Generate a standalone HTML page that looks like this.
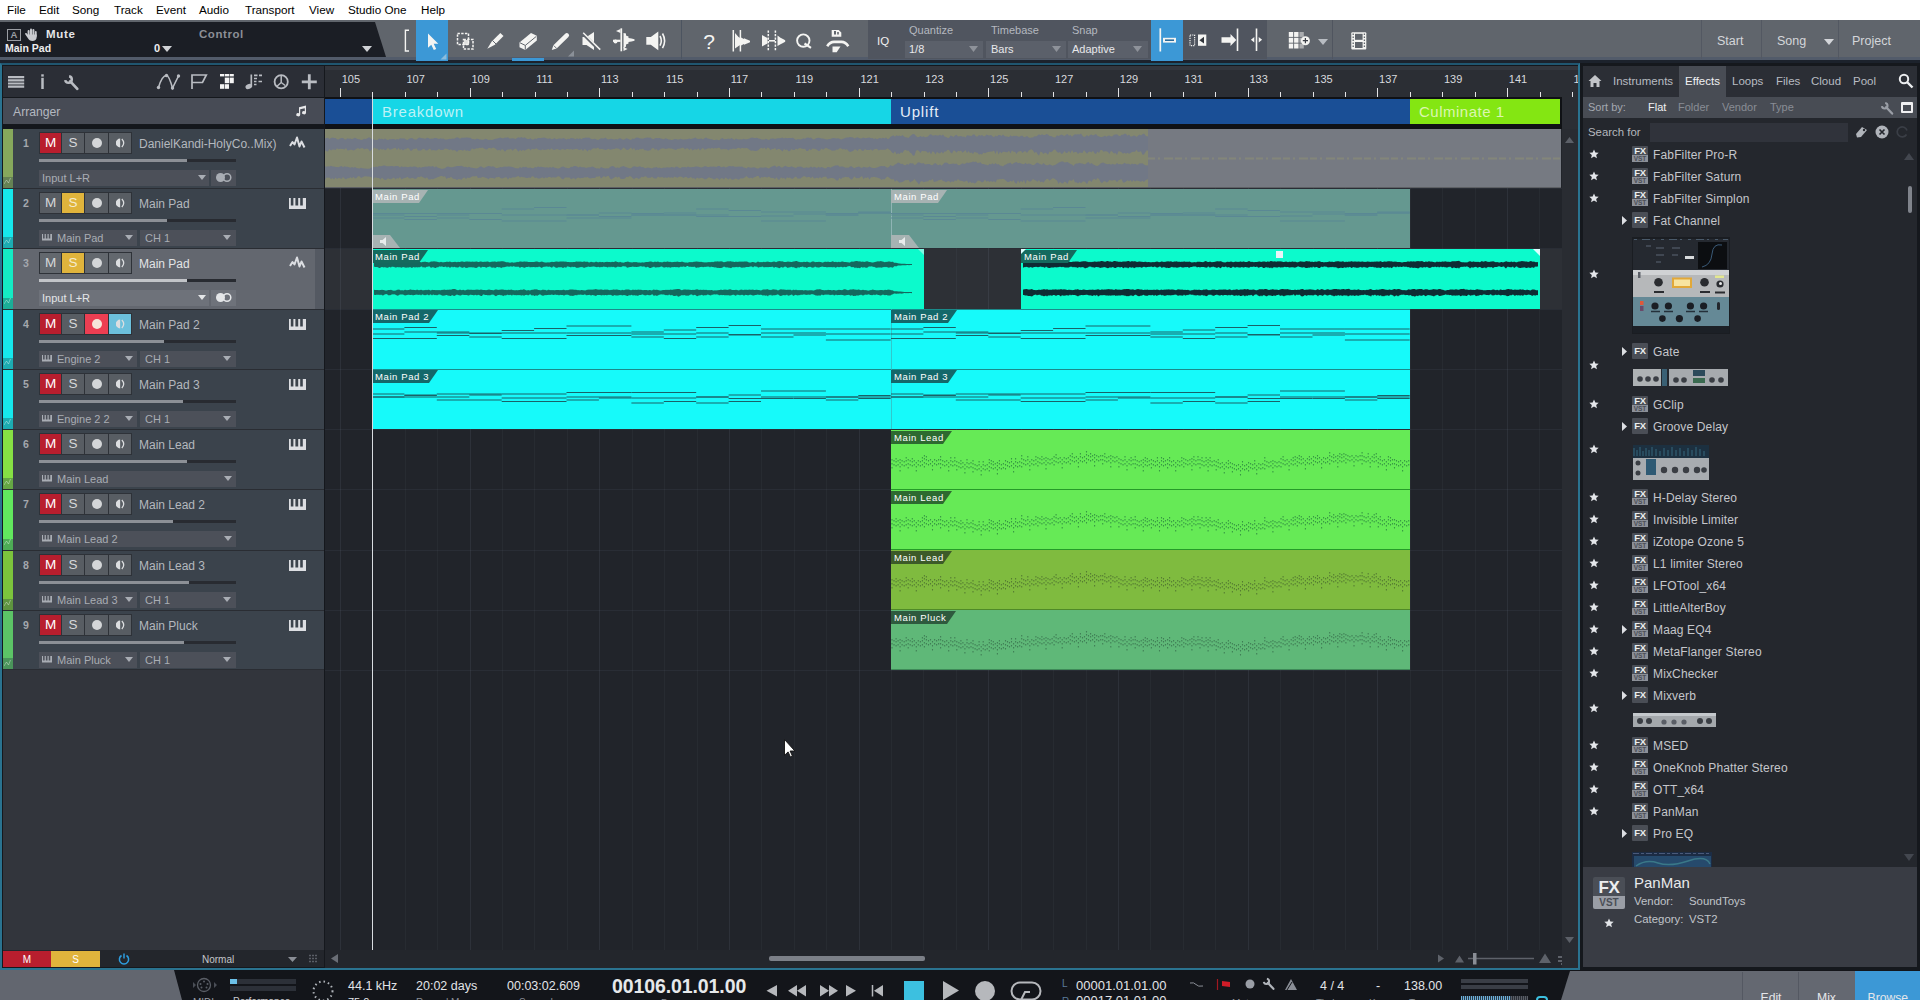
<!DOCTYPE html><html><head><meta charset="utf-8"><title>Studio One</title><style>
*{box-sizing:border-box;margin:0;padding:0}
html,body{width:1920px;height:1000px;overflow:hidden;background:#15181d;font-family:"Liberation Sans",sans-serif;color:#d0d2d6;font-size:12px}
.a{position:absolute}
.t{position:absolute;white-space:nowrap;line-height:1}
#menu{left:0;top:0;width:1920px;height:20px;background:#fff}
#menu span{position:absolute;top:2.5px;color:#000;font-size:11.7px;white-space:nowrap}
#tb{left:0;top:20px;width:1920px;height:40px;background:#60656c}
.trk{position:absolute;left:3px;width:321px;height:59px;background:#3b434c}
.trk.sel{background:#63676f}
.dd{position:absolute;height:16px;background:#4c5059;color:#a9adb4;font-size:11px;line-height:16px;white-space:nowrap;overflow:hidden}
</style></head><body>
<div class="a" style="left:0;top:63px;width:1580px;height:907px;background:#15181d;border:2px solid #2a7390;border-top-color:#205670"></div>
<div class="a" style="left:3px;top:66px;width:321px;height:31px;background:#2b2e36"></div>
<div class="a" style="left:3px;top:98px;width:321px;height:26px;background:#474b55"></div>
<div class="t" style="left:13px;top:106px;font-size:12.200px;color:#b4b8c0">Arranger</div>
<svg class="a" style="left:295px;top:105px" width="13" height="12" viewBox="0 0 13 12"><path d="M4 2.200l7-1.700v7.300a2 1.600 0 1 1-1.200-1.500V3.200L5.200 4.300v5.500A2 1.600 0 1 1 4 8.300z" fill="#e8e8ea"/></svg>
<svg class="a" style="left:0;top:60px" width="330" height="40" viewBox="0 60 330 40"><path d="M8 77.200h16.200M8 80.400h16.200M8 83.500h16.200M8 86.600h16.200" stroke="#b9bcc2" stroke-width="2.200"/><path d="M42.500 77.800v11.200" stroke="#b9bcc2" stroke-width="2.500"/><rect x="41.250" y="74.300" width="2.500" height="2.300" fill="#b9bcc2"/><g transform="translate(63 74) scale(1.0)" fill="none" stroke="#b9bcc2" stroke-linecap="round"><path d="M6.100 2.300A3.300 3.300 0 1 1 2.250 6.100" stroke-width="2.500" stroke-linecap="butt"/><path d="M7.300 7.300L14.300 14.800" stroke-width="2.700"/></g><path d="M158.500 87.500q3.500-12 8-12 2.500 0 6 12.500l6-12" fill="none" stroke="#b9bcc2" stroke-width="1.600"/><circle cx="158.500" cy="87.500" r="1.700" fill="#b9bcc2"/><circle cx="172.500" cy="88" r="1.700" fill="#b9bcc2"/><circle cx="178.500" cy="76" r="1.700" fill="#b9bcc2"/><circle cx="166.500" cy="75.500" r="1.700" fill="#b9bcc2"/><path d="M192 89V75h14.300l-3.800 7.500H192" fill="none" stroke="#b9bcc2" stroke-width="1.700"/><rect x="220" y="74" width="4.200" height="2.4" fill="#f4f4f4"/><rect x="224.8" y="74" width="4.200" height="2.4" fill="#f4f4f4"/><rect x="229.6" y="74" width="4.200" height="2.4" fill="#f4f4f4"/><rect x="224.8" y="77.6" width="4.200" height="5.6" fill="#f4f4f4"/><rect x="229.6" y="77.6" width="4.200" height="5.6" fill="#f4f4f4"/><rect x="220" y="84.2" width="4.200" height="4.6" fill="#f4f4f4"/><rect x="224.8" y="84.2" width="4.200" height="4.6" fill="#f4f4f4"/><path d="M251.300 74.500v12" stroke="#b9bcc2" stroke-width="1.700"/><ellipse cx="248.800" cy="86.500" rx="3.400" ry="2.500" fill="#b9bcc2" transform="rotate(-20 248.800 86.500)"/><path d="M254 75.300h3.500M259 75.300h3M254 78.500h3M254 81.500h2.500M258.500 81.500h3.500M254 84.500h2.500" stroke="#b9bcc2" stroke-width="1.700"/><circle cx="281.200" cy="81.800" r="6.600" fill="none" stroke="#b9bcc2" stroke-width="1.800"/><path d="M281.200 75.500v7l-4.500 4M281.200 82.500l4 3" fill="none" stroke="#b9bcc2" stroke-width="1.500"/><path d="M301.800 81.800h15M309.300 74.300v15" stroke="#b9bcc2" stroke-width="2.800"/></svg>
<div class="a" style="left:3px;top:670px;width:321px;height:280px;background:#32353c"></div>
<div class="a" style="left:3px;top:125px;width:321px;height:5px;background:#14171c"></div>
<div class="trk" style="top:129px;height:59px"></div>
<div class="a" style="left:3px;top:129px;width:10px;height:59px;background:#86a85c"></div>
<div class="a" style="left:3px;top:177px;width:10px;height:11px;background:rgba(40,60,70,.35)"></div>
<svg class="a" style="left:4px;top:178px" width="8" height="8"><path d="M0 6l2.500-4 2 3 2-5" fill="none" stroke="rgba(255,255,255,.35)" stroke-width="1"/></svg>
<div class="t" style="left:21px;top:138px;font-size:10.500px;font-weight:bold;color:#a4a8ae;width:10px;text-align:center">1</div>
<div class="a" style="left:39px;top:132px;width:23px;height:22px;background:#b81e2e;border:1px solid #2e3238;border-left-width:1px;color:#fff;font-size:13.500px;text-align:center;line-height:20px">M</div>
<div class="a" style="left:62px;top:132px;width:23px;height:22px;background:#585d63;border:1px solid #2e3238;border-left-width:0px;color:#d6d8da;font-size:13.500px;text-align:center;line-height:20px">S</div>
<div class="a" style="left:85px;top:132px;width:24px;height:22px;background:#585d63;border:1px solid #2e3238;border-left-width:0px;color:#d6d8da;font-size:13.500px;text-align:center;line-height:20px"></div>
<div class="a" style="left:109px;top:132px;width:23px;height:22px;background:#585d63;border:1px solid #2e3238;border-left-width:0px;color:#d6d8da;font-size:13.500px;text-align:center;line-height:20px"></div>
<div class="a" style="left:92px;top:138px;width:10px;height:10px;border-radius:5px;background:#d4d6d8"></div>
<svg class="a" style="left:116px;top:138px" width="10" height="10" viewBox="0 0 12 12"><path d="M5 .700A5.300 5.300 0 0 0 5 11.300z" fill="#dcdee0"/><path d="M7 1.200q4.500 4.800 0 9.600" fill="none" stroke="#dcdee0" stroke-width="1.500"/></svg>
<div class="t" style="left:139px;top:138px;font-size:12px;color:#b4b8be">DanielKandi-HolyCo..Mix)</div>
<svg class="a" style="left:289px;top:136px" width="17" height="15" viewBox="0 0 17 15"><path d="M1 10l2.500-4 2 2.500L8 1.500l2.500 9 2-5 3 6" fill="none" stroke="#dcdee2" stroke-width="2" stroke-linejoin="round"/></svg>
<div class="a" style="left:39px;top:159px;width:197px;height:3px;background:#282b31"></div>
<div class="a" style="left:39px;top:159px;width:148px;height:3px;background:#8c9096"></div>
<div class="dd" style="left:39px;top:170px;width:170px;background:#4c5059;color:#a9adb4;padding-left:3px">Input L+R</div>
<svg class="a" style="left:198px;top:175px" width="8" height="5"><path d="M0 0h8L4 5z" fill="#a9adb4"/></svg>
<div class="dd" style="left:211px;top:170px;width:25px;background:#4c5059"></div>
<svg class="a" style="left:215px;top:172px" width="18" height="11" viewBox="0 0 18 11"><circle cx="5.500" cy="5.500" r="4.500" fill="#a9adb4"/><circle cx="12" cy="5.500" r="3.800" fill="none" stroke="#a9adb4" stroke-width="1.500"/></svg>
<div class="a" style="left:3px;top:188px;width:321px;height:1px;background:#2a2d33"></div>
<div class="trk" style="top:189px;height:59px"></div>
<div class="a" style="left:3px;top:189px;width:10px;height:59px;background:#16e8ec"></div>
<div class="a" style="left:3px;top:237px;width:10px;height:11px;background:rgba(40,60,70,.35)"></div>
<svg class="a" style="left:4px;top:238px" width="8" height="8"><path d="M0 6l2.500-4 2 3 2-5" fill="none" stroke="rgba(255,255,255,.35)" stroke-width="1"/></svg>
<div class="t" style="left:21px;top:198px;font-size:10.500px;font-weight:bold;color:#a4a8ae;width:10px;text-align:center">2</div>
<div class="a" style="left:39px;top:192px;width:23px;height:22px;background:#585d63;border:1px solid #2e3238;border-left-width:1px;color:#d6d8da;font-size:13.500px;text-align:center;line-height:20px">M</div>
<div class="a" style="left:62px;top:192px;width:23px;height:22px;background:#e0b43c;border:1px solid #2e3238;border-left-width:0px;color:#f4ecd0;font-size:13.500px;text-align:center;line-height:20px">S</div>
<div class="a" style="left:85px;top:192px;width:24px;height:22px;background:#585d63;border:1px solid #2e3238;border-left-width:0px;color:#d6d8da;font-size:13.500px;text-align:center;line-height:20px"></div>
<div class="a" style="left:109px;top:192px;width:23px;height:22px;background:#585d63;border:1px solid #2e3238;border-left-width:0px;color:#d6d8da;font-size:13.500px;text-align:center;line-height:20px"></div>
<div class="a" style="left:92px;top:198px;width:10px;height:10px;border-radius:5px;background:#d4d6d8"></div>
<svg class="a" style="left:116px;top:198px" width="10" height="10" viewBox="0 0 12 12"><path d="M5 .700A5.300 5.300 0 0 0 5 11.300z" fill="#dcdee0"/><path d="M7 1.200q4.500 4.800 0 9.600" fill="none" stroke="#dcdee0" stroke-width="1.500"/></svg>
<div class="t" style="left:139px;top:198px;font-size:12px;color:#b4b8be">Main Pad</div>
<svg class="a" style="left:289px;top:198px" width="17.0" height="11.0" viewBox="0 0 17 11"><path d="M0 0h1.800v7.500h2.600V0h2v7.500h2.800V0h2v7.500h2.600V0H17v11H0z" fill="#dcdee2"/></svg>
<div class="a" style="left:39px;top:219px;width:197px;height:3px;background:#282b31"></div>
<div class="a" style="left:39px;top:219px;width:128px;height:3px;background:#8c9096"></div>
<div class="dd" style="left:39px;top:230px;width:98px;padding-left:18px">Main Pad</div>
<svg class="a" style="left:42px;top:234px" width="10.2" height="6.6" viewBox="0 0 17 11"><path d="M0 0h1.800v7.500h2.600V0h2v7.500h2.800V0h2v7.500h2.600V0H17v11H0z" fill="#a9adb4"/></svg>
<svg class="a" style="left:125px;top:235px" width="8" height="5"><path d="M0 0h8L4 5z" fill="#a9adb4"/></svg>
<div class="dd" style="left:140px;top:230px;width:96px;padding-left:5px">CH 1</div>
<svg class="a" style="left:223px;top:235px" width="8" height="5"><path d="M0 0h8L4 5z" fill="#a9adb4"/></svg>
<div class="a" style="left:3px;top:248px;width:321px;height:1px;background:#2a2d33"></div>
<div class="trk sel" style="top:249px;height:60px"></div>
<div class="a" style="left:315px;top:249px;width:9px;height:60px;background:#545962"></div>
<div class="a" style="left:3px;top:249px;width:10px;height:60px;background:#14ecc4"></div>
<div class="a" style="left:3px;top:298px;width:10px;height:11px;background:rgba(40,60,70,.35)"></div>
<svg class="a" style="left:4px;top:298px" width="8" height="8"><path d="M0 6l2.500-4 2 3 2-5" fill="none" stroke="rgba(255,255,255,.35)" stroke-width="1"/></svg>
<div class="t" style="left:21px;top:258px;font-size:10.500px;font-weight:bold;color:#a4a8ae;width:10px;text-align:center">3</div>
<div class="a" style="left:39px;top:252px;width:23px;height:22px;background:#63686e;border:1px solid #2e3238;border-left-width:1px;color:#d6d8da;font-size:13.500px;text-align:center;line-height:20px">M</div>
<div class="a" style="left:62px;top:252px;width:23px;height:22px;background:#e0b43c;border:1px solid #2e3238;border-left-width:0px;color:#f4ecd0;font-size:13.500px;text-align:center;line-height:20px">S</div>
<div class="a" style="left:85px;top:252px;width:24px;height:22px;background:#63686e;border:1px solid #2e3238;border-left-width:0px;color:#d6d8da;font-size:13.500px;text-align:center;line-height:20px"></div>
<div class="a" style="left:109px;top:252px;width:23px;height:22px;background:#63686e;border:1px solid #2e3238;border-left-width:0px;color:#d6d8da;font-size:13.500px;text-align:center;line-height:20px"></div>
<div class="a" style="left:92px;top:258px;width:10px;height:10px;border-radius:5px;background:#d4d6d8"></div>
<svg class="a" style="left:116px;top:258px" width="10" height="10" viewBox="0 0 12 12"><path d="M5 .700A5.300 5.300 0 0 0 5 11.300z" fill="#dcdee0"/><path d="M7 1.200q4.500 4.800 0 9.600" fill="none" stroke="#dcdee0" stroke-width="1.500"/></svg>
<div class="t" style="left:139px;top:258px;font-size:12px;color:#e2e4e6">Main Pad</div>
<svg class="a" style="left:289px;top:256px" width="17" height="15" viewBox="0 0 17 15"><path d="M1 10l2.500-4 2 2.500L8 1.500l2.500 9 2-5 3 6" fill="none" stroke="#dcdee2" stroke-width="2" stroke-linejoin="round"/></svg>
<div class="a" style="left:39px;top:279px;width:197px;height:3px;background:#282b31"></div>
<div class="a" style="left:39px;top:279px;width:148px;height:3px;background:#c2c4c8"></div>
<div class="dd" style="left:39px;top:290px;width:170px;background:#6e727a;color:#e4e6e8;padding-left:3px">Input L+R</div>
<svg class="a" style="left:198px;top:295px" width="8" height="5"><path d="M0 0h8L4 5z" fill="#e4e6e8"/></svg>
<div class="dd" style="left:211px;top:290px;width:25px;background:#6e727a"></div>
<svg class="a" style="left:215px;top:292px" width="18" height="11" viewBox="0 0 18 11"><circle cx="5.500" cy="5.500" r="4.500" fill="#e4e6e8"/><circle cx="12" cy="5.500" r="3.800" fill="none" stroke="#e4e6e8" stroke-width="1.500"/></svg>
<div class="a" style="left:3px;top:309px;width:321px;height:1px;background:#2a2d33"></div>
<div class="trk" style="top:310px;height:59px"></div>
<div class="a" style="left:3px;top:310px;width:10px;height:59px;background:#16e8ec"></div>
<div class="a" style="left:3px;top:358px;width:10px;height:11px;background:rgba(40,60,70,.35)"></div>
<svg class="a" style="left:4px;top:359px" width="8" height="8"><path d="M0 6l2.500-4 2 3 2-5" fill="none" stroke="rgba(255,255,255,.35)" stroke-width="1"/></svg>
<div class="t" style="left:21px;top:319px;font-size:10.500px;font-weight:bold;color:#a4a8ae;width:10px;text-align:center">4</div>
<div class="a" style="left:39px;top:313px;width:23px;height:22px;background:#b81e2e;border:1px solid #2e3238;border-left-width:1px;color:#fff;font-size:13.500px;text-align:center;line-height:20px">M</div>
<div class="a" style="left:62px;top:313px;width:23px;height:22px;background:#585d63;border:1px solid #2e3238;border-left-width:0px;color:#d6d8da;font-size:13.500px;text-align:center;line-height:20px">S</div>
<div class="a" style="left:85px;top:313px;width:24px;height:22px;background:#ec3e52;border:1px solid #2e3238;border-left-width:0px;color:#d6d8da;font-size:13.500px;text-align:center;line-height:20px"></div>
<div class="a" style="left:109px;top:313px;width:23px;height:22px;background:#6cc0dc;border:1px solid #2e3238;border-left-width:0px;color:#d6d8da;font-size:13.500px;text-align:center;line-height:20px"></div>
<div class="a" style="left:92px;top:319px;width:10px;height:10px;border-radius:5px;background:#f6e6da"></div>
<svg class="a" style="left:116px;top:319px" width="10" height="10" viewBox="0 0 12 12"><path d="M5 .700A5.300 5.300 0 0 0 5 11.300z" fill="#dcdee0"/><path d="M7 1.200q4.500 4.800 0 9.600" fill="none" stroke="#dcdee0" stroke-width="1.500"/></svg>
<div class="t" style="left:139px;top:319px;font-size:12px;color:#b4b8be">Main Pad 2</div>
<svg class="a" style="left:289px;top:319px" width="17.0" height="11.0" viewBox="0 0 17 11"><path d="M0 0h1.800v7.500h2.600V0h2v7.500h2.800V0h2v7.500h2.600V0H17v11H0z" fill="#dcdee2"/></svg>
<div class="a" style="left:39px;top:340px;width:197px;height:3px;background:#282b31"></div>
<div class="a" style="left:39px;top:340px;width:125px;height:3px;background:#8c9096"></div>
<div class="dd" style="left:39px;top:351px;width:98px;padding-left:18px">Engine 2</div>
<svg class="a" style="left:42px;top:355px" width="10.2" height="6.6" viewBox="0 0 17 11"><path d="M0 0h1.800v7.500h2.600V0h2v7.500h2.800V0h2v7.500h2.600V0H17v11H0z" fill="#a9adb4"/></svg>
<svg class="a" style="left:125px;top:356px" width="8" height="5"><path d="M0 0h8L4 5z" fill="#a9adb4"/></svg>
<div class="dd" style="left:140px;top:351px;width:96px;padding-left:5px">CH 1</div>
<svg class="a" style="left:223px;top:356px" width="8" height="5"><path d="M0 0h8L4 5z" fill="#a9adb4"/></svg>
<div class="a" style="left:3px;top:369px;width:321px;height:1px;background:#2a2d33"></div>
<div class="trk" style="top:370px;height:59px"></div>
<div class="a" style="left:3px;top:370px;width:10px;height:59px;background:#16e8ec"></div>
<div class="a" style="left:3px;top:418px;width:10px;height:11px;background:rgba(40,60,70,.35)"></div>
<svg class="a" style="left:4px;top:419px" width="8" height="8"><path d="M0 6l2.500-4 2 3 2-5" fill="none" stroke="rgba(255,255,255,.35)" stroke-width="1"/></svg>
<div class="t" style="left:21px;top:379px;font-size:10.500px;font-weight:bold;color:#a4a8ae;width:10px;text-align:center">5</div>
<div class="a" style="left:39px;top:373px;width:23px;height:22px;background:#b81e2e;border:1px solid #2e3238;border-left-width:1px;color:#fff;font-size:13.500px;text-align:center;line-height:20px">M</div>
<div class="a" style="left:62px;top:373px;width:23px;height:22px;background:#585d63;border:1px solid #2e3238;border-left-width:0px;color:#d6d8da;font-size:13.500px;text-align:center;line-height:20px">S</div>
<div class="a" style="left:85px;top:373px;width:24px;height:22px;background:#585d63;border:1px solid #2e3238;border-left-width:0px;color:#d6d8da;font-size:13.500px;text-align:center;line-height:20px"></div>
<div class="a" style="left:109px;top:373px;width:23px;height:22px;background:#585d63;border:1px solid #2e3238;border-left-width:0px;color:#d6d8da;font-size:13.500px;text-align:center;line-height:20px"></div>
<div class="a" style="left:92px;top:379px;width:10px;height:10px;border-radius:5px;background:#d4d6d8"></div>
<svg class="a" style="left:116px;top:379px" width="10" height="10" viewBox="0 0 12 12"><path d="M5 .700A5.300 5.300 0 0 0 5 11.300z" fill="#dcdee0"/><path d="M7 1.200q4.500 4.800 0 9.600" fill="none" stroke="#dcdee0" stroke-width="1.500"/></svg>
<div class="t" style="left:139px;top:379px;font-size:12px;color:#b4b8be">Main Pad 3</div>
<svg class="a" style="left:289px;top:379px" width="17.0" height="11.0" viewBox="0 0 17 11"><path d="M0 0h1.800v7.500h2.600V0h2v7.500h2.800V0h2v7.500h2.600V0H17v11H0z" fill="#dcdee2"/></svg>
<div class="a" style="left:39px;top:400px;width:197px;height:3px;background:#282b31"></div>
<div class="a" style="left:39px;top:400px;width:144px;height:3px;background:#8c9096"></div>
<div class="dd" style="left:39px;top:411px;width:98px;padding-left:18px">Engine 2 2</div>
<svg class="a" style="left:42px;top:415px" width="10.2" height="6.6" viewBox="0 0 17 11"><path d="M0 0h1.800v7.500h2.600V0h2v7.500h2.800V0h2v7.500h2.600V0H17v11H0z" fill="#a9adb4"/></svg>
<svg class="a" style="left:125px;top:416px" width="8" height="5"><path d="M0 0h8L4 5z" fill="#a9adb4"/></svg>
<div class="dd" style="left:140px;top:411px;width:96px;padding-left:5px">CH 1</div>
<svg class="a" style="left:223px;top:416px" width="8" height="5"><path d="M0 0h8L4 5z" fill="#a9adb4"/></svg>
<div class="a" style="left:3px;top:429px;width:321px;height:1px;background:#2a2d33"></div>
<div class="trk" style="top:430px;height:59px"></div>
<div class="a" style="left:3px;top:430px;width:10px;height:59px;background:#86e044"></div>
<div class="a" style="left:3px;top:478px;width:10px;height:11px;background:rgba(40,60,70,.35)"></div>
<svg class="a" style="left:4px;top:479px" width="8" height="8"><path d="M0 6l2.500-4 2 3 2-5" fill="none" stroke="rgba(255,255,255,.35)" stroke-width="1"/></svg>
<div class="t" style="left:21px;top:439px;font-size:10.500px;font-weight:bold;color:#a4a8ae;width:10px;text-align:center">6</div>
<div class="a" style="left:39px;top:433px;width:23px;height:22px;background:#b81e2e;border:1px solid #2e3238;border-left-width:1px;color:#fff;font-size:13.500px;text-align:center;line-height:20px">M</div>
<div class="a" style="left:62px;top:433px;width:23px;height:22px;background:#585d63;border:1px solid #2e3238;border-left-width:0px;color:#d6d8da;font-size:13.500px;text-align:center;line-height:20px">S</div>
<div class="a" style="left:85px;top:433px;width:24px;height:22px;background:#585d63;border:1px solid #2e3238;border-left-width:0px;color:#d6d8da;font-size:13.500px;text-align:center;line-height:20px"></div>
<div class="a" style="left:109px;top:433px;width:23px;height:22px;background:#585d63;border:1px solid #2e3238;border-left-width:0px;color:#d6d8da;font-size:13.500px;text-align:center;line-height:20px"></div>
<div class="a" style="left:92px;top:439px;width:10px;height:10px;border-radius:5px;background:#d4d6d8"></div>
<svg class="a" style="left:116px;top:439px" width="10" height="10" viewBox="0 0 12 12"><path d="M5 .700A5.300 5.300 0 0 0 5 11.300z" fill="#dcdee0"/><path d="M7 1.200q4.500 4.800 0 9.600" fill="none" stroke="#dcdee0" stroke-width="1.500"/></svg>
<div class="t" style="left:139px;top:439px;font-size:12px;color:#b4b8be">Main Lead</div>
<svg class="a" style="left:289px;top:439px" width="17.0" height="11.0" viewBox="0 0 17 11"><path d="M0 0h1.800v7.500h2.600V0h2v7.500h2.800V0h2v7.500h2.600V0H17v11H0z" fill="#dcdee2"/></svg>
<div class="a" style="left:39px;top:460px;width:197px;height:3px;background:#282b31"></div>
<div class="a" style="left:39px;top:460px;width:148px;height:3px;background:#8c9096"></div>
<div class="dd" style="left:39px;top:471px;width:197px;padding-left:18px">Main Lead</div>
<svg class="a" style="left:42px;top:475px" width="10.2" height="6.6" viewBox="0 0 17 11"><path d="M0 0h1.800v7.500h2.600V0h2v7.500h2.800V0h2v7.500h2.600V0H17v11H0z" fill="#a9adb4"/></svg>
<svg class="a" style="left:224px;top:476px" width="8" height="5"><path d="M0 0h8L4 5z" fill="#a9adb4"/></svg>
<div class="a" style="left:3px;top:489px;width:321px;height:1px;background:#2a2d33"></div>
<div class="trk" style="top:490px;height:60px"></div>
<div class="a" style="left:3px;top:490px;width:10px;height:60px;background:#62e85e"></div>
<div class="a" style="left:3px;top:539px;width:10px;height:11px;background:rgba(40,60,70,.35)"></div>
<svg class="a" style="left:4px;top:539px" width="8" height="8"><path d="M0 6l2.500-4 2 3 2-5" fill="none" stroke="rgba(255,255,255,.35)" stroke-width="1"/></svg>
<div class="t" style="left:21px;top:499px;font-size:10.500px;font-weight:bold;color:#a4a8ae;width:10px;text-align:center">7</div>
<div class="a" style="left:39px;top:493px;width:23px;height:22px;background:#b81e2e;border:1px solid #2e3238;border-left-width:1px;color:#fff;font-size:13.500px;text-align:center;line-height:20px">M</div>
<div class="a" style="left:62px;top:493px;width:23px;height:22px;background:#585d63;border:1px solid #2e3238;border-left-width:0px;color:#d6d8da;font-size:13.500px;text-align:center;line-height:20px">S</div>
<div class="a" style="left:85px;top:493px;width:24px;height:22px;background:#585d63;border:1px solid #2e3238;border-left-width:0px;color:#d6d8da;font-size:13.500px;text-align:center;line-height:20px"></div>
<div class="a" style="left:109px;top:493px;width:23px;height:22px;background:#585d63;border:1px solid #2e3238;border-left-width:0px;color:#d6d8da;font-size:13.500px;text-align:center;line-height:20px"></div>
<div class="a" style="left:92px;top:499px;width:10px;height:10px;border-radius:5px;background:#d4d6d8"></div>
<svg class="a" style="left:116px;top:499px" width="10" height="10" viewBox="0 0 12 12"><path d="M5 .700A5.300 5.300 0 0 0 5 11.300z" fill="#dcdee0"/><path d="M7 1.200q4.500 4.800 0 9.600" fill="none" stroke="#dcdee0" stroke-width="1.500"/></svg>
<div class="t" style="left:139px;top:499px;font-size:12px;color:#b4b8be">Main Lead 2</div>
<svg class="a" style="left:289px;top:499px" width="17.0" height="11.0" viewBox="0 0 17 11"><path d="M0 0h1.800v7.500h2.600V0h2v7.500h2.800V0h2v7.500h2.600V0H17v11H0z" fill="#dcdee2"/></svg>
<div class="a" style="left:39px;top:520px;width:197px;height:3px;background:#282b31"></div>
<div class="a" style="left:39px;top:520px;width:134px;height:3px;background:#8c9096"></div>
<div class="dd" style="left:39px;top:531px;width:197px;padding-left:18px">Main Lead 2</div>
<svg class="a" style="left:42px;top:535px" width="10.2" height="6.6" viewBox="0 0 17 11"><path d="M0 0h1.800v7.500h2.600V0h2v7.500h2.800V0h2v7.500h2.600V0H17v11H0z" fill="#a9adb4"/></svg>
<svg class="a" style="left:224px;top:536px" width="8" height="5"><path d="M0 0h8L4 5z" fill="#a9adb4"/></svg>
<div class="a" style="left:3px;top:550px;width:321px;height:1px;background:#2a2d33"></div>
<div class="trk" style="top:551px;height:59px"></div>
<div class="a" style="left:3px;top:551px;width:10px;height:59px;background:#7cc43c"></div>
<div class="a" style="left:3px;top:599px;width:10px;height:11px;background:rgba(40,60,70,.35)"></div>
<svg class="a" style="left:4px;top:600px" width="8" height="8"><path d="M0 6l2.500-4 2 3 2-5" fill="none" stroke="rgba(255,255,255,.35)" stroke-width="1"/></svg>
<div class="t" style="left:21px;top:560px;font-size:10.500px;font-weight:bold;color:#a4a8ae;width:10px;text-align:center">8</div>
<div class="a" style="left:39px;top:554px;width:23px;height:22px;background:#b81e2e;border:1px solid #2e3238;border-left-width:1px;color:#fff;font-size:13.500px;text-align:center;line-height:20px">M</div>
<div class="a" style="left:62px;top:554px;width:23px;height:22px;background:#585d63;border:1px solid #2e3238;border-left-width:0px;color:#d6d8da;font-size:13.500px;text-align:center;line-height:20px">S</div>
<div class="a" style="left:85px;top:554px;width:24px;height:22px;background:#585d63;border:1px solid #2e3238;border-left-width:0px;color:#d6d8da;font-size:13.500px;text-align:center;line-height:20px"></div>
<div class="a" style="left:109px;top:554px;width:23px;height:22px;background:#585d63;border:1px solid #2e3238;border-left-width:0px;color:#d6d8da;font-size:13.500px;text-align:center;line-height:20px"></div>
<div class="a" style="left:92px;top:560px;width:10px;height:10px;border-radius:5px;background:#d4d6d8"></div>
<svg class="a" style="left:116px;top:560px" width="10" height="10" viewBox="0 0 12 12"><path d="M5 .700A5.300 5.300 0 0 0 5 11.300z" fill="#dcdee0"/><path d="M7 1.200q4.500 4.800 0 9.600" fill="none" stroke="#dcdee0" stroke-width="1.500"/></svg>
<div class="t" style="left:139px;top:560px;font-size:12px;color:#b4b8be">Main Lead 3</div>
<svg class="a" style="left:289px;top:560px" width="17.0" height="11.0" viewBox="0 0 17 11"><path d="M0 0h1.800v7.500h2.600V0h2v7.500h2.800V0h2v7.500h2.600V0H17v11H0z" fill="#dcdee2"/></svg>
<div class="a" style="left:39px;top:581px;width:197px;height:3px;background:#282b31"></div>
<div class="a" style="left:39px;top:581px;width:150px;height:3px;background:#8c9096"></div>
<div class="dd" style="left:39px;top:592px;width:98px;padding-left:18px">Main Lead 3</div>
<svg class="a" style="left:42px;top:596px" width="10.2" height="6.6" viewBox="0 0 17 11"><path d="M0 0h1.800v7.500h2.600V0h2v7.500h2.800V0h2v7.500h2.600V0H17v11H0z" fill="#a9adb4"/></svg>
<svg class="a" style="left:125px;top:597px" width="8" height="5"><path d="M0 0h8L4 5z" fill="#a9adb4"/></svg>
<div class="dd" style="left:140px;top:592px;width:96px;padding-left:5px">CH 1</div>
<svg class="a" style="left:223px;top:597px" width="8" height="5"><path d="M0 0h8L4 5z" fill="#a9adb4"/></svg>
<div class="a" style="left:3px;top:610px;width:321px;height:1px;background:#2a2d33"></div>
<div class="trk" style="top:611px;height:58px"></div>
<div class="a" style="left:3px;top:611px;width:10px;height:58px;background:#5cc466"></div>
<div class="a" style="left:3px;top:658px;width:10px;height:11px;background:rgba(40,60,70,.35)"></div>
<svg class="a" style="left:4px;top:660px" width="8" height="8"><path d="M0 6l2.500-4 2 3 2-5" fill="none" stroke="rgba(255,255,255,.35)" stroke-width="1"/></svg>
<div class="t" style="left:21px;top:620px;font-size:10.500px;font-weight:bold;color:#a4a8ae;width:10px;text-align:center">9</div>
<div class="a" style="left:39px;top:614px;width:23px;height:22px;background:#b81e2e;border:1px solid #2e3238;border-left-width:1px;color:#fff;font-size:13.500px;text-align:center;line-height:20px">M</div>
<div class="a" style="left:62px;top:614px;width:23px;height:22px;background:#585d63;border:1px solid #2e3238;border-left-width:0px;color:#d6d8da;font-size:13.500px;text-align:center;line-height:20px">S</div>
<div class="a" style="left:85px;top:614px;width:24px;height:22px;background:#585d63;border:1px solid #2e3238;border-left-width:0px;color:#d6d8da;font-size:13.500px;text-align:center;line-height:20px"></div>
<div class="a" style="left:109px;top:614px;width:23px;height:22px;background:#585d63;border:1px solid #2e3238;border-left-width:0px;color:#d6d8da;font-size:13.500px;text-align:center;line-height:20px"></div>
<div class="a" style="left:92px;top:620px;width:10px;height:10px;border-radius:5px;background:#d4d6d8"></div>
<svg class="a" style="left:116px;top:620px" width="10" height="10" viewBox="0 0 12 12"><path d="M5 .700A5.300 5.300 0 0 0 5 11.300z" fill="#dcdee0"/><path d="M7 1.200q4.500 4.800 0 9.600" fill="none" stroke="#dcdee0" stroke-width="1.500"/></svg>
<div class="t" style="left:139px;top:620px;font-size:12px;color:#b4b8be">Main Pluck</div>
<svg class="a" style="left:289px;top:620px" width="17.0" height="11.0" viewBox="0 0 17 11"><path d="M0 0h1.800v7.500h2.600V0h2v7.500h2.800V0h2v7.500h2.600V0H17v11H0z" fill="#dcdee2"/></svg>
<div class="a" style="left:39px;top:641px;width:197px;height:3px;background:#282b31"></div>
<div class="a" style="left:39px;top:641px;width:145px;height:3px;background:#8c9096"></div>
<div class="dd" style="left:39px;top:652px;width:98px;padding-left:18px">Main Pluck</div>
<svg class="a" style="left:42px;top:656px" width="10.2" height="6.6" viewBox="0 0 17 11"><path d="M0 0h1.800v7.500h2.600V0h2v7.500h2.800V0h2v7.500h2.600V0H17v11H0z" fill="#a9adb4"/></svg>
<svg class="a" style="left:125px;top:657px" width="8" height="5"><path d="M0 0h8L4 5z" fill="#a9adb4"/></svg>
<div class="dd" style="left:140px;top:652px;width:96px;padding-left:5px">CH 1</div>
<svg class="a" style="left:223px;top:657px" width="8" height="5"><path d="M0 0h8L4 5z" fill="#a9adb4"/></svg>
<div class="a" style="left:3px;top:669px;width:321px;height:1px;background:#2a2d33"></div>
<div class="a" style="left:3px;top:950px;width:321px;height:17px;background:#23262c"></div>
<div class="a" style="left:3px;top:951px;width:48px;height:16px;background:#b81e2e;color:#fff;font-size:10px;text-align:center;line-height:18px">M</div>
<div class="a" style="left:51px;top:951px;width:49px;height:16px;background:#e0b43c;color:#fff;font-size:10px;text-align:center;line-height:18px">S</div>
<svg class="a" style="left:118px;top:953px" width="12" height="12" viewBox="0 0 12 12"><path d="M3.500 2.500a4.600 4.600 0 1 0 5 0" fill="none" stroke="#2e9ee0" stroke-width="1.500"/><path d="M6 .500v5" stroke="#2e9ee0" stroke-width="1.500"/></svg>
<div class="t" style="left:202px;top:955px;font-size:10px;color:#c4c6ca">Normal</div>
<svg class="a" style="left:288px;top:957px" width="9" height="5"><path d="M0 0h9L4.500 5z" fill="#8a8e96"/></svg>
<svg class="a" style="left:309px;top:954px" width="9" height="9"><path d="M0 1.500h9M0 4.500h9M0 7.500h9" stroke="#5a5e66" stroke-width="1.500" stroke-dasharray="2 1"/></svg>
<div class="a" style="left:325px;top:66px;width:1253px;height:31px;background:#2b2e34"></div>
<div class="a" style="left:325px;top:66px;width:1253px;height:4px;background:#33363d"></div>
<svg class="a" style="left:0;top:60px;overflow:hidden" width="1578" height="40" viewBox="0 60 1578 40"><rect x="340" y="88" width="1" height="9" fill="#e4e4e6"/><text x="341.7" y="83" font-size="11" fill="#d8dade" font-family="Liberation Sans,sans-serif">105</text><rect x="372" y="92" width="1" height="5" fill="#e4e4e6"/><rect x="405" y="92" width="1" height="5" fill="#e4e4e6"/><text x="406.5" y="83" font-size="11" fill="#d8dade" font-family="Liberation Sans,sans-serif">107</text><rect x="437" y="92" width="1" height="5" fill="#e4e4e6"/><rect x="470" y="88" width="1" height="9" fill="#e4e4e6"/><text x="471.4" y="83" font-size="11" fill="#d8dade" font-family="Liberation Sans,sans-serif">109</text><rect x="502" y="92" width="1" height="5" fill="#e4e4e6"/><rect x="535" y="92" width="1" height="5" fill="#e4e4e6"/><text x="536.2" y="83" font-size="11" fill="#d8dade" font-family="Liberation Sans,sans-serif">111</text><rect x="567" y="92" width="1" height="5" fill="#e4e4e6"/><rect x="599" y="88" width="1" height="9" fill="#e4e4e6"/><text x="601.0" y="83" font-size="11" fill="#d8dade" font-family="Liberation Sans,sans-serif">113</text><rect x="632" y="92" width="1" height="5" fill="#e4e4e6"/><rect x="664" y="92" width="1" height="5" fill="#e4e4e6"/><text x="665.9" y="83" font-size="11" fill="#d8dade" font-family="Liberation Sans,sans-serif">115</text><rect x="697" y="92" width="1" height="5" fill="#e4e4e6"/><rect x="729" y="88" width="1" height="9" fill="#e4e4e6"/><text x="730.7" y="83" font-size="11" fill="#d8dade" font-family="Liberation Sans,sans-serif">117</text><rect x="761" y="92" width="1" height="5" fill="#e4e4e6"/><rect x="794" y="92" width="1" height="5" fill="#e4e4e6"/><text x="795.6" y="83" font-size="11" fill="#d8dade" font-family="Liberation Sans,sans-serif">119</text><rect x="826" y="92" width="1" height="5" fill="#e4e4e6"/><rect x="859" y="88" width="1" height="9" fill="#e4e4e6"/><text x="860.4" y="83" font-size="11" fill="#d8dade" font-family="Liberation Sans,sans-serif">121</text><rect x="891" y="92" width="1" height="5" fill="#e4e4e6"/><rect x="924" y="92" width="1" height="5" fill="#e4e4e6"/><text x="925.2" y="83" font-size="11" fill="#d8dade" font-family="Liberation Sans,sans-serif">123</text><rect x="956" y="92" width="1" height="5" fill="#e4e4e6"/><rect x="988" y="88" width="1" height="9" fill="#e4e4e6"/><text x="990.1" y="83" font-size="11" fill="#d8dade" font-family="Liberation Sans,sans-serif">125</text><rect x="1021" y="92" width="1" height="5" fill="#e4e4e6"/><rect x="1053" y="92" width="1" height="5" fill="#e4e4e6"/><text x="1054.9" y="83" font-size="11" fill="#d8dade" font-family="Liberation Sans,sans-serif">127</text><rect x="1086" y="92" width="1" height="5" fill="#e4e4e6"/><rect x="1118" y="88" width="1" height="9" fill="#e4e4e6"/><text x="1119.8" y="83" font-size="11" fill="#d8dade" font-family="Liberation Sans,sans-serif">129</text><rect x="1150" y="92" width="1" height="5" fill="#e4e4e6"/><rect x="1183" y="92" width="1" height="5" fill="#e4e4e6"/><text x="1184.6" y="83" font-size="11" fill="#d8dade" font-family="Liberation Sans,sans-serif">131</text><rect x="1215" y="92" width="1" height="5" fill="#e4e4e6"/><rect x="1248" y="88" width="1" height="9" fill="#e4e4e6"/><text x="1249.4" y="83" font-size="11" fill="#d8dade" font-family="Liberation Sans,sans-serif">133</text><rect x="1280" y="92" width="1" height="5" fill="#e4e4e6"/><rect x="1313" y="92" width="1" height="5" fill="#e4e4e6"/><text x="1314.3" y="83" font-size="11" fill="#d8dade" font-family="Liberation Sans,sans-serif">135</text><rect x="1345" y="92" width="1" height="5" fill="#e4e4e6"/><rect x="1377" y="88" width="1" height="9" fill="#e4e4e6"/><text x="1379.1" y="83" font-size="11" fill="#d8dade" font-family="Liberation Sans,sans-serif">137</text><rect x="1410" y="92" width="1" height="5" fill="#e4e4e6"/><rect x="1442" y="92" width="1" height="5" fill="#e4e4e6"/><text x="1444.0" y="83" font-size="11" fill="#d8dade" font-family="Liberation Sans,sans-serif">139</text><rect x="1475" y="92" width="1" height="5" fill="#e4e4e6"/><rect x="1507" y="88" width="1" height="9" fill="#e4e4e6"/><text x="1508.8" y="83" font-size="11" fill="#d8dade" font-family="Liberation Sans,sans-serif">141</text><rect x="1540" y="92" width="1" height="5" fill="#e4e4e6"/><rect x="1572" y="92" width="1" height="5" fill="#e4e4e6"/><text x="1573.6" y="83" font-size="11" fill="#d8dade" font-family="Liberation Sans,sans-serif">143</text></svg>
<div class="a" style="left:325px;top:97px;width:1253px;height:32px;background:#0f1115"></div>
<div class="a" style="left:1562px;top:97px;width:16px;height:32px;background:#2b2e34"></div>
<div class="a" style="left:325px;top:99px;width:48px;height:25px;background:#1a4f96"></div>
<div class="a" style="left:372px;top:99px;width:519px;height:25px;background:#16d6e6"></div>
<div class="a" style="left:891px;top:99px;width:519px;height:25px;background:#1a4f96"></div>
<div class="a" style="left:1410px;top:99px;width:150px;height:25px;background:#84e612"></div>
<div class="t" style="left:382px;top:104px;font-size:15px;color:#bdf2f6;letter-spacing:.77px">Breakdown</div>
<div class="t" style="left:900px;top:104px;font-size:15px;color:#e4ecf6;letter-spacing:.85px">Uplift</div>
<div class="t" style="left:1419px;top:104px;font-size:15px;color:#dcf6b0;letter-spacing:.5px">Culminate 1</div>
<div class="a" style="left:325px;top:129px;width:1237px;height:821px;background:#21242a"></div>
<div class="a" style="left:325px;top:249px;width:1237px;height:60px;background:#2d3036"></div>
<div class="a" style="left:1562px;top:129px;width:16px;height:821px;background:#292c32"></div>
<div class="a" style="left:325px;top:950px;width:1253px;height:18px;background:#23262c"></div>
<div class="a" style="left:339.9px;top:129px;width:1px;height:821px;background:rgba(160,170,200,0.1)"></div><div class="a" style="left:372.3px;top:129px;width:1px;height:821px;background:rgba(160,170,200,0.05)"></div><div class="a" style="left:404.7px;top:129px;width:1px;height:821px;background:rgba(160,170,200,0.05)"></div><div class="a" style="left:437.1px;top:129px;width:1px;height:821px;background:rgba(160,170,200,0.05)"></div><div class="a" style="left:469.6px;top:129px;width:1px;height:821px;background:rgba(160,170,200,0.1)"></div><div class="a" style="left:502.0px;top:129px;width:1px;height:821px;background:rgba(160,170,200,0.05)"></div><div class="a" style="left:534.4px;top:129px;width:1px;height:821px;background:rgba(160,170,200,0.05)"></div><div class="a" style="left:566.8px;top:129px;width:1px;height:821px;background:rgba(160,170,200,0.05)"></div><div class="a" style="left:599.2px;top:129px;width:1px;height:821px;background:rgba(160,170,200,0.1)"></div><div class="a" style="left:631.7px;top:129px;width:1px;height:821px;background:rgba(160,170,200,0.05)"></div><div class="a" style="left:664.1px;top:129px;width:1px;height:821px;background:rgba(160,170,200,0.05)"></div><div class="a" style="left:696.5px;top:129px;width:1px;height:821px;background:rgba(160,170,200,0.05)"></div><div class="a" style="left:728.9px;top:129px;width:1px;height:821px;background:rgba(160,170,200,0.1)"></div><div class="a" style="left:761.3px;top:129px;width:1px;height:821px;background:rgba(160,170,200,0.05)"></div><div class="a" style="left:793.8px;top:129px;width:1px;height:821px;background:rgba(160,170,200,0.05)"></div><div class="a" style="left:826.2px;top:129px;width:1px;height:821px;background:rgba(160,170,200,0.05)"></div><div class="a" style="left:858.6px;top:129px;width:1px;height:821px;background:rgba(160,170,200,0.1)"></div><div class="a" style="left:891.0px;top:129px;width:1px;height:821px;background:rgba(160,170,200,0.05)"></div><div class="a" style="left:923.4px;top:129px;width:1px;height:821px;background:rgba(160,170,200,0.05)"></div><div class="a" style="left:955.9px;top:129px;width:1px;height:821px;background:rgba(160,170,200,0.05)"></div><div class="a" style="left:988.3px;top:129px;width:1px;height:821px;background:rgba(160,170,200,0.1)"></div><div class="a" style="left:1020.7px;top:129px;width:1px;height:821px;background:rgba(160,170,200,0.05)"></div><div class="a" style="left:1053.1px;top:129px;width:1px;height:821px;background:rgba(160,170,200,0.05)"></div><div class="a" style="left:1085.5px;top:129px;width:1px;height:821px;background:rgba(160,170,200,0.05)"></div><div class="a" style="left:1118.0px;top:129px;width:1px;height:821px;background:rgba(160,170,200,0.1)"></div><div class="a" style="left:1150.4px;top:129px;width:1px;height:821px;background:rgba(160,170,200,0.05)"></div><div class="a" style="left:1182.8px;top:129px;width:1px;height:821px;background:rgba(160,170,200,0.05)"></div><div class="a" style="left:1215.2px;top:129px;width:1px;height:821px;background:rgba(160,170,200,0.05)"></div><div class="a" style="left:1247.6px;top:129px;width:1px;height:821px;background:rgba(160,170,200,0.1)"></div><div class="a" style="left:1280.1px;top:129px;width:1px;height:821px;background:rgba(160,170,200,0.05)"></div><div class="a" style="left:1312.5px;top:129px;width:1px;height:821px;background:rgba(160,170,200,0.05)"></div><div class="a" style="left:1344.9px;top:129px;width:1px;height:821px;background:rgba(160,170,200,0.05)"></div><div class="a" style="left:1377.3px;top:129px;width:1px;height:821px;background:rgba(160,170,200,0.1)"></div><div class="a" style="left:1409.7px;top:129px;width:1px;height:821px;background:rgba(160,170,200,0.05)"></div><div class="a" style="left:1442.2px;top:129px;width:1px;height:821px;background:rgba(160,170,200,0.05)"></div><div class="a" style="left:1474.6px;top:129px;width:1px;height:821px;background:rgba(160,170,200,0.05)"></div><div class="a" style="left:1507.0px;top:129px;width:1px;height:821px;background:rgba(160,170,200,0.1)"></div><div class="a" style="left:1539.4px;top:129px;width:1px;height:821px;background:rgba(160,170,200,0.05)"></div><div class="a" style="left:325px;top:188px;width:1237px;height:1px;background:rgba(160,170,200,.07)"></div><div class="a" style="left:325px;top:248px;width:1237px;height:1px;background:rgba(160,170,200,.07)"></div><div class="a" style="left:325px;top:309px;width:1237px;height:1px;background:rgba(160,170,200,.07)"></div><div class="a" style="left:325px;top:369px;width:1237px;height:1px;background:rgba(160,170,200,.07)"></div><div class="a" style="left:325px;top:429px;width:1237px;height:1px;background:rgba(160,170,200,.07)"></div><div class="a" style="left:325px;top:489px;width:1237px;height:1px;background:rgba(160,170,200,.07)"></div><div class="a" style="left:325px;top:550px;width:1237px;height:1px;background:rgba(160,170,200,.07)"></div><div class="a" style="left:325px;top:610px;width:1237px;height:1px;background:rgba(160,170,200,.07)"></div><div class="a" style="left:325px;top:670px;width:1237px;height:1px;background:rgba(160,170,200,.07)"></div>
<div class="a" style="left:325px;top:129px;width:1236px;height:59px;background:#83876f"></div>
<svg class="a" style="left:0;top:129px" width="1562" height="59" viewBox="0 129 1562 59"><path d="M325.0 138.4L326.5 137.9L328.0 137.7L329.5 139.0L331.0 138.0L332.5 137.4L334.0 138.0L335.5 138.1L337.0 139.3L338.5 139.4L340.0 138.6L341.5 138.0L343.0 138.0L344.5 139.2L346.0 139.5L347.5 138.2L349.0 138.8L350.5 138.6L352.0 139.2L353.5 138.6L355.0 137.8L356.5 138.4L358.0 139.2L359.5 139.3L361.0 140.0L362.5 139.8L364.0 138.7L365.5 139.0L367.0 138.4L368.5 137.6L370.0 137.5L371.5 138.9L373.0 139.0L374.5 139.8L376.0 139.9L377.5 140.0L379.0 138.6L380.5 138.9L382.0 138.7L383.5 139.4L385.0 138.5L386.5 139.5L388.0 139.9L389.5 139.2L391.0 139.3L392.5 138.9L394.0 139.1L395.5 139.7L397.0 138.9L398.5 139.4L400.0 138.2L401.5 138.5L403.0 138.4L404.5 138.5L406.0 139.4L407.5 140.0L409.0 138.8L410.5 138.3L412.0 138.1L413.5 139.1L415.0 139.6L416.5 139.6L418.0 138.2L419.5 137.4L421.0 137.9L422.5 138.2L424.0 138.6L425.5 138.8L427.0 137.8L428.5 138.1L430.0 139.1L431.5 138.4L433.0 138.7L434.5 138.1L436.0 138.0L437.5 138.5L439.0 139.0L440.5 138.3L442.0 138.8L443.5 138.4L445.0 139.5L446.5 139.6L448.0 139.3L449.5 138.7L451.0 139.0L452.5 138.4L454.0 138.7L455.5 138.0L457.0 137.3L458.5 137.8L460.0 138.8L461.5 137.8L463.0 137.8L464.5 137.7L466.0 137.5L467.5 137.6L469.0 137.8L470.5 137.8L472.0 139.1L473.5 139.0L475.0 139.4L476.5 138.8L478.0 138.8L479.5 139.6L481.0 139.5L482.5 139.8L484.0 139.4L485.5 138.8L487.0 139.3L488.5 140.0L490.0 139.8L491.5 140.1L493.0 139.7L494.5 139.1L496.0 138.8L497.5 138.6L499.0 138.0L500.5 137.6L502.0 138.3L503.5 138.2L505.0 137.5L506.5 137.7L508.0 137.3L509.5 138.6L511.0 138.4L512.5 138.2L514.0 138.6L515.5 139.1L517.0 138.0L518.5 137.3L520.0 137.7L521.5 137.1L523.0 137.9L524.5 137.2L526.0 138.2L527.5 139.1L529.0 139.0L530.5 138.3L532.0 139.4L533.5 139.5L535.0 138.6L536.5 139.0L538.0 137.9L539.5 138.0L541.0 137.9L542.5 137.7L544.0 137.6L545.5 137.9L547.0 138.6L548.5 138.7L550.0 138.2L551.5 139.2L553.0 139.1L554.5 138.1L556.0 139.3L557.5 139.1L559.0 138.5L560.5 138.6L562.0 138.8L563.5 138.0L565.0 138.7L566.5 139.5L568.0 138.8L569.5 139.1L571.0 138.1L572.5 138.3L574.0 138.5L575.5 139.2L577.0 138.3L578.5 139.0L580.0 138.3L581.5 139.3L583.0 138.1L584.5 137.9L586.0 137.5L587.5 137.7L589.0 137.6L590.5 138.4L592.0 139.2L593.5 139.1L595.0 138.7L596.5 139.4L598.0 139.9L599.5 139.2L601.0 138.2L602.5 138.5L604.0 138.4L605.5 137.6L607.0 138.9L608.5 139.4L610.0 139.1L611.5 138.8L613.0 139.2L614.5 139.4L616.0 139.1L617.5 139.4L619.0 138.6L620.5 138.2L622.0 139.2L623.5 139.7L625.0 139.1L626.5 138.2L628.0 138.7L629.5 139.6L631.0 140.0L632.5 138.6L634.0 139.1L635.5 138.0L637.0 137.6L638.5 137.8L640.0 138.6L641.5 138.4L643.0 138.7L644.5 138.0L646.0 137.7L647.5 137.4L649.0 137.7L650.5 137.6L652.0 138.8L653.5 139.3L655.0 138.3L656.5 137.9L658.0 138.2L659.5 138.1L661.0 138.4L662.5 139.1L664.0 139.2L665.5 138.2L667.0 138.8L668.5 139.4L670.0 139.6L671.5 140.1L673.0 139.8L674.5 138.9L676.0 138.9L677.5 139.5L679.0 139.5L680.5 138.7L682.0 139.3L683.5 139.5L685.0 139.3L686.5 139.3L688.0 139.1L689.5 138.4L691.0 139.2L692.5 138.6L694.0 138.3L695.5 137.5L697.0 138.8L698.5 138.9L700.0 138.7L701.5 138.6L703.0 139.4L704.5 138.3L706.0 137.6L707.5 138.5L709.0 138.7L710.5 139.2L712.0 139.3L713.5 139.9L715.0 140.0L716.5 139.6L718.0 140.0L719.5 140.2L721.0 138.8L722.5 138.0L724.0 139.2L725.5 139.0L727.0 139.1L728.5 138.4L730.0 138.9L731.5 138.1L733.0 139.1L734.5 139.7L736.0 138.6L737.5 139.3L739.0 139.5L740.5 139.3L742.0 139.5L743.5 138.8L745.0 139.3L746.5 139.3L748.0 139.1L749.5 138.4L751.0 137.7L752.5 137.6L754.0 138.1L755.5 138.0L757.0 137.8L758.5 138.6L760.0 138.8L761.5 139.6L763.0 139.6L764.5 139.6L766.0 138.7L767.5 139.6L769.0 139.9L770.5 138.7L772.0 138.4L773.5 138.6L775.0 139.0L776.5 138.6L778.0 138.2L779.5 138.3L781.0 138.0L782.5 137.4L784.0 138.6L785.5 137.8L787.0 138.3L788.5 137.9L790.0 138.1L791.5 138.1L793.0 137.7L794.5 138.9L796.0 139.7L797.5 139.3L799.0 139.2L800.5 139.4L802.0 139.0L803.5 138.3L805.0 138.7L806.5 137.7L808.0 137.4L809.5 138.1L811.0 137.6L812.5 138.9L814.0 139.6L815.5 138.4L817.0 137.9L818.5 137.8L820.0 137.9L821.5 138.4L823.0 138.5L824.5 139.1L826.0 139.3L827.5 139.4L829.0 139.1L830.5 139.1L832.0 138.3L833.5 138.0L835.0 138.2L836.5 138.6L838.0 138.3L839.5 138.8L841.0 139.5L842.5 139.0L844.0 138.4L845.5 137.7L847.0 137.6L848.5 137.5L850.0 137.1L851.5 137.3L853.0 137.4L854.5 138.4L856.0 137.7L857.5 137.2L859.0 137.9L860.5 138.4L862.0 138.2L863.5 137.6L865.0 138.2L866.5 138.0L868.0 137.8L869.5 137.4L871.0 138.2L872.5 138.1L874.0 139.0L875.5 138.3L877.0 139.3L878.5 138.4L880.0 138.0L881.5 138.4L883.0 137.7L884.5 138.5L886.0 137.6L887.5 138.9L889.0 138.7L890.5 136.7L892.0 136.0L893.5 135.3L895.0 136.7L896.5 135.3L898.0 136.0L899.5 135.4L901.0 136.3L902.5 135.0L904.0 136.5L905.5 137.2L907.0 137.6L908.5 138.0L910.0 136.3L911.5 135.1L913.0 134.1L914.5 134.3L916.0 136.0L917.5 137.2L919.0 136.9L920.5 135.9L922.0 137.0L923.5 136.3L925.0 137.2L926.5 137.0L928.0 136.4L929.5 134.8L931.0 134.3L932.5 135.5L934.0 135.6L935.5 134.9L937.0 135.5L938.5 135.6L940.0 134.7L941.5 135.7L943.0 134.6L944.5 136.4L946.0 136.9L947.5 137.7L949.0 138.1L950.5 135.6L952.0 136.0L953.5 137.1L955.0 135.6L956.5 134.8L958.0 136.6L959.5 136.3L961.0 136.0L962.5 136.7L964.0 136.4L965.5 137.4L967.0 135.3L968.5 135.4L970.0 135.8L971.5 135.9L973.0 134.6L974.5 134.6L976.0 136.5L977.5 136.4L979.0 135.1L980.5 135.7L982.0 134.9L983.5 136.2L985.0 136.2L986.5 134.5L988.0 135.2L989.5 135.5L991.0 135.0L992.5 136.3L994.0 137.3L995.5 135.4L997.0 136.4L998.5 135.1L1000.0 135.0L1001.5 136.1L1003.0 134.6L1004.5 135.9L1006.0 136.5L1007.5 136.5L1009.0 137.2L1010.5 135.2L1012.0 136.6L1013.5 135.8L1015.0 136.1L1016.5 135.7L1018.0 136.4L1019.5 136.8L1021.0 135.7L1022.5 135.7L1024.0 137.2L1025.5 136.8L1027.0 136.0L1028.5 137.2L1030.0 138.0L1031.5 137.5L1033.0 137.4L1034.5 136.2L1036.0 136.4L1037.5 135.4L1039.0 134.2L1040.5 135.3L1042.0 134.2L1043.5 134.9L1045.0 135.1L1046.5 134.0L1048.0 134.5L1049.5 136.1L1051.0 135.9L1052.5 136.7L1054.0 137.6L1055.5 137.3L1057.0 135.2L1058.5 136.1L1060.0 135.2L1061.5 134.4L1063.0 135.2L1064.5 136.1L1066.0 134.8L1067.5 133.9L1069.0 135.7L1070.5 135.0L1072.0 136.7L1073.5 135.3L1075.0 134.3L1076.5 134.6L1078.0 134.3L1079.5 134.5L1081.0 133.6L1082.5 135.7L1084.0 136.9L1085.5 136.5L1087.0 135.0L1088.5 136.5L1090.0 135.1L1091.5 134.6L1093.0 135.6L1094.5 134.8L1096.0 133.9L1097.5 135.7L1099.0 136.4L1100.5 137.0L1102.0 136.9L1103.5 136.6L1105.0 135.8L1106.5 136.8L1108.0 135.8L1109.5 135.5L1111.0 136.6L1112.5 136.2L1114.0 134.8L1115.5 134.6L1117.0 134.2L1118.5 135.4L1120.0 136.2L1121.5 134.8L1123.0 134.7L1124.5 133.7L1126.0 133.7L1127.5 135.7L1129.0 134.6L1130.5 136.4L1132.0 136.4L1133.5 135.4L1135.0 135.8L1136.5 136.9L1138.0 135.8L1139.5 134.6L1141.0 135.6L1142.5 134.3L1144.0 133.6L1145.5 135.6L1147.0 136.4L1148.5 135.9L1150.0 137.0L1150.0 151.0L1148.5 151.4L1147.0 150.1L1145.5 152.1L1144.0 154.4L1142.5 154.8L1141.0 151.3L1139.5 151.8L1138.0 151.9L1136.5 149.8L1135.0 151.7L1133.5 151.7L1132.0 152.0L1130.5 153.1L1129.0 153.7L1127.5 152.8L1126.0 153.7L1124.5 152.7L1123.0 153.8L1121.5 152.3L1120.0 151.4L1118.5 151.3L1117.0 155.1L1115.5 153.1L1114.0 153.4L1112.5 151.9L1111.0 150.7L1109.5 153.9L1108.0 152.1L1106.5 151.2L1105.0 151.2L1103.5 151.8L1102.0 149.9L1100.5 149.9L1099.0 153.0L1097.5 151.4L1096.0 153.9L1094.5 153.2L1093.0 150.7L1091.5 152.5L1090.0 151.5L1088.5 151.9L1087.0 153.8L1085.5 151.9L1084.0 149.9L1082.5 152.9L1081.0 152.8L1079.5 152.4L1078.0 154.1L1076.5 152.0L1075.0 151.9L1073.5 152.7L1072.0 150.0L1070.5 153.3L1069.0 150.8L1067.5 152.8L1066.0 153.0L1064.5 151.1L1063.0 153.3L1061.5 154.1L1060.0 152.0L1058.5 152.8L1057.0 152.0L1055.5 149.8L1054.0 149.4L1052.5 151.2L1051.0 152.3L1049.5 151.5L1048.0 154.7L1046.5 153.2L1045.0 152.5L1043.5 154.0L1042.0 152.2L1040.5 151.5L1039.0 155.8L1037.5 154.1L1036.0 151.7L1034.5 153.1L1033.0 150.5L1031.5 149.3L1030.0 149.8L1028.5 150.8L1027.0 152.9L1025.5 151.2L1024.0 151.6L1022.5 153.0L1021.0 151.1L1019.5 151.3L1018.0 151.8L1016.5 153.9L1015.0 151.8L1013.5 151.8L1012.0 150.3L1010.5 153.6L1009.0 150.8L1007.5 152.3L1006.0 152.2L1004.5 151.8L1003.0 151.7L1001.5 153.3L1000.0 151.7L998.5 154.5L997.0 150.1L995.5 153.9L994.0 150.4L992.5 151.6L991.0 151.6L989.5 151.8L988.0 152.0L986.5 152.4L985.0 153.2L983.5 152.6L982.0 154.5L980.5 154.0L979.0 154.4L977.5 152.8L976.0 152.4L974.5 151.7L973.0 153.9L971.5 152.4L970.0 153.1L968.5 151.1L967.0 153.3L965.5 150.0L964.0 151.5L962.5 152.7L961.0 150.6L959.5 151.3L958.0 150.7L956.5 152.7L955.0 150.8L953.5 150.5L952.0 153.4L950.5 152.5L949.0 149.9L947.5 149.8L946.0 151.6L944.5 151.4L943.0 153.4L941.5 151.8L940.0 153.6L938.5 153.1L937.0 151.7L935.5 154.6L934.0 151.9L932.5 151.2L931.0 154.5L929.5 151.6L928.0 153.0L926.5 151.6L925.0 151.1L923.5 151.3L922.0 150.7L920.5 152.9L919.0 150.9L917.5 150.0L916.0 150.7L914.5 155.5L913.0 155.8L911.5 153.6L910.0 152.6L908.5 150.6L907.0 150.7L905.5 149.7L904.0 150.6L902.5 152.9L901.0 152.3L899.5 154.1L898.0 153.2L896.5 154.3L895.0 151.2L893.5 153.5L892.0 152.5L890.5 150.4L889.0 149.5L887.5 148.3L886.0 149.6L884.5 149.8L883.0 149.8L881.5 149.7L880.0 149.8L878.5 150.5L877.0 148.8L875.5 149.1L874.0 149.3L872.5 150.8L871.0 149.2L869.5 149.9L868.0 149.9L866.5 150.1L865.0 148.9L863.5 150.7L862.0 150.7L860.5 148.9L859.0 148.9L857.5 151.0L856.0 149.6L854.5 149.6L853.0 150.9L851.5 151.6L850.0 152.0L848.5 150.9L847.0 149.3L845.5 149.8L844.0 149.1L842.5 149.5L841.0 148.2L839.5 148.3L838.0 149.8L836.5 149.6L835.0 150.5L833.5 150.4L832.0 150.7L830.5 149.8L829.0 149.3L827.5 148.4L826.0 147.8L824.5 148.7L823.0 149.7L821.5 148.5L820.0 150.8L818.5 151.1L817.0 149.7L815.5 148.9L814.0 148.8L812.5 148.4L811.0 150.3L809.5 149.1L808.0 150.9L806.5 151.1L805.0 148.7L803.5 149.1L802.0 148.7L800.5 148.0L799.0 148.2L797.5 149.4L796.0 148.4L794.5 150.0L793.0 150.1L791.5 149.0L790.0 151.0L788.5 151.2L787.0 149.6L785.5 150.1L784.0 149.0L782.5 151.4L781.0 149.9L779.5 149.0L778.0 148.9L776.5 150.1L775.0 148.1L773.5 149.1L772.0 149.0L770.5 150.3L769.0 147.9L767.5 147.6L766.0 149.4L764.5 147.6L763.0 148.7L761.5 147.8L760.0 148.4L758.5 150.1L757.0 150.7L755.5 151.1L754.0 150.7L752.5 150.6L751.0 150.7L749.5 149.7L748.0 148.5L746.5 148.0L745.0 148.3L743.5 148.3L742.0 147.7L740.5 148.8L739.0 147.7L737.5 147.9L736.0 149.0L734.5 148.8L733.0 148.6L731.5 149.2L730.0 149.0L728.5 150.5L727.0 149.2L725.5 149.2L724.0 148.9L722.5 149.3L721.0 149.5L719.5 147.8L718.0 147.7L716.5 148.4L715.0 148.0L713.5 148.8L712.0 147.8L710.5 148.7L709.0 148.3L707.5 148.5L706.0 149.3L704.5 149.7L703.0 147.8L701.5 149.1L700.0 150.4L698.5 148.2L697.0 149.8L695.5 149.2L694.0 149.5L692.5 150.4L691.0 148.3L689.5 150.0L688.0 148.5L686.5 148.3L685.0 149.5L683.5 147.7L682.0 147.8L680.5 148.6L679.0 148.8L677.5 148.8L676.0 150.1L674.5 149.4L673.0 149.0L671.5 148.6L670.0 148.4L668.5 148.2L667.0 148.7L665.5 149.0L664.0 148.6L662.5 148.2L661.0 148.7L659.5 149.7L658.0 150.7L656.5 148.9L655.0 149.7L653.5 147.9L652.0 148.3L650.5 150.2L649.0 150.5L647.5 150.7L646.0 150.2L644.5 150.3L643.0 148.5L641.5 149.3L640.0 149.0L638.5 149.9L637.0 149.5L635.5 150.4L634.0 148.1L632.5 149.8L631.0 147.4L629.5 148.8L628.0 149.9L626.5 149.8L625.0 148.4L623.5 147.6L622.0 149.2L620.5 150.2L619.0 148.7L617.5 148.4L616.0 148.2L614.5 149.0L613.0 148.9L611.5 149.5L610.0 149.7L608.5 148.8L607.0 149.5L605.5 150.1L604.0 149.6L602.5 149.1L601.0 148.9L599.5 149.2L598.0 147.4L596.5 148.4L595.0 148.4L593.5 148.2L592.0 149.0L590.5 150.5L589.0 149.4L587.5 151.5L586.0 149.8L584.5 149.0L583.0 151.1L581.5 149.1L580.0 150.1L578.5 149.7L577.0 148.7L575.5 149.0L574.0 149.2L572.5 149.8L571.0 149.1L569.5 149.4L568.0 149.1L566.5 149.1L565.0 150.0L563.5 149.2L562.0 149.0L560.5 150.3L559.0 149.8L557.5 149.0L556.0 149.3L554.5 150.0L553.0 149.8L551.5 148.3L550.0 150.1L548.5 149.0L547.0 149.5L545.5 149.7L544.0 149.9L542.5 149.3L541.0 150.3L539.5 150.0L538.0 149.6L536.5 148.3L535.0 148.9L533.5 149.3L532.0 148.7L530.5 150.5L529.0 148.6L527.5 149.2L526.0 149.8L524.5 150.8L523.0 149.7L521.5 150.9L520.0 149.7L518.5 151.8L517.0 149.7L515.5 148.5L514.0 149.2L512.5 150.7L511.0 148.8L509.5 149.6L508.0 149.4L506.5 149.9L505.0 151.7L503.5 149.9L502.0 148.9L500.5 150.8L499.0 149.8L497.5 150.4L496.0 148.9L494.5 148.1L493.0 147.5L491.5 148.4L490.0 148.0L488.5 147.9L487.0 149.5L485.5 149.3L484.0 148.4L482.5 147.5L481.0 147.9L479.5 147.8L478.0 148.6L476.5 148.2L475.0 149.0L473.5 149.3L472.0 148.3L470.5 150.7L469.0 150.9L467.5 150.2L466.0 150.7L464.5 149.5L463.0 150.8L461.5 150.1L460.0 149.9L458.5 150.3L457.0 151.9L455.5 150.5L454.0 150.0L452.5 150.4L451.0 149.3L449.5 149.9L448.0 149.3L446.5 148.7L445.0 148.6L443.5 149.7L442.0 150.1L440.5 150.1L439.0 149.0L437.5 149.9L436.0 150.6L434.5 150.3L433.0 149.9L431.5 150.5L430.0 148.4L428.5 149.5L427.0 150.5L425.5 150.2L424.0 148.7L422.5 149.3L421.0 150.6L419.5 150.4L418.0 150.6L416.5 148.3L415.0 149.0L413.5 148.8L412.0 150.5L410.5 150.8L409.0 148.4L407.5 148.0L406.0 149.3L404.5 149.3L403.0 150.4L401.5 148.9L400.0 149.9L398.5 147.7L397.0 150.1L395.5 147.7L394.0 148.2L392.5 148.7L391.0 149.6L389.5 149.6L388.0 147.8L386.5 149.4L385.0 150.3L383.5 149.0L382.0 149.8L380.5 148.8L379.0 150.4L377.5 148.4L376.0 148.8L374.5 147.4L373.0 149.1L371.5 149.7L370.0 151.4L368.5 149.2L367.0 148.6L365.5 149.0L364.0 149.3L362.5 147.9L361.0 148.3L359.5 148.9L358.0 148.0L356.5 148.8L355.0 149.7L353.5 150.4L352.0 149.7L350.5 149.7L349.0 150.2L347.5 150.6L346.0 148.0L344.5 149.5L343.0 149.1L341.5 149.1L340.0 148.7L338.5 149.3L337.0 148.2L335.5 150.0L334.0 149.4L332.5 149.5L331.0 150.4L329.5 149.0L328.0 151.4L326.5 151.2L325.0 150.2ZM325.0 166.3L326.5 166.7L328.0 166.3L329.5 166.6L331.0 165.8L332.5 166.5L334.0 166.6L335.5 166.9L337.0 167.0L338.5 167.3L340.0 166.4L341.5 166.1L343.0 167.2L344.5 166.3L346.0 166.7L347.5 166.7L349.0 167.3L350.5 167.7L352.0 167.0L353.5 167.7L355.0 167.1L356.5 167.9L358.0 168.3L359.5 168.6L361.0 167.8L362.5 168.2L364.0 168.5L365.5 168.4L367.0 168.8L368.5 168.8L370.0 168.5L371.5 167.6L373.0 166.7L374.5 167.3L376.0 166.5L377.5 166.9L379.0 166.0L380.5 166.2L382.0 166.1L383.5 165.6L385.0 165.5L386.5 166.3L388.0 166.3L389.5 166.2L391.0 166.1L392.5 165.9L394.0 166.4L395.5 166.1L397.0 165.9L398.5 166.3L400.0 167.4L401.5 166.3L403.0 167.1L404.5 166.8L406.0 166.7L407.5 167.3L409.0 166.9L410.5 166.5L412.0 166.9L413.5 166.5L415.0 166.6L416.5 166.9L418.0 167.8L419.5 166.9L421.0 167.8L422.5 167.0L424.0 167.1L425.5 166.5L427.0 166.7L428.5 166.3L430.0 166.4L431.5 166.4L433.0 166.0L434.5 167.4L436.0 166.3L437.5 167.5L439.0 168.1L440.5 168.5L442.0 168.9L443.5 168.6L445.0 168.2L446.5 166.9L448.0 166.6L449.5 167.0L451.0 167.2L452.5 167.3L454.0 166.8L455.5 166.6L457.0 166.1L458.5 165.9L460.0 166.1L461.5 165.7L463.0 166.4L464.5 167.0L466.0 166.7L467.5 167.5L469.0 166.7L470.5 167.6L472.0 167.7L473.5 167.9L475.0 168.2L476.5 168.6L478.0 167.9L479.5 166.9L481.0 166.2L482.5 167.2L484.0 168.0L485.5 167.2L487.0 166.5L488.5 166.0L490.0 166.3L491.5 166.8L493.0 166.3L494.5 167.0L496.0 167.9L497.5 168.1L499.0 167.5L500.5 166.9L502.0 167.3L503.5 166.7L505.0 166.5L506.5 166.7L508.0 166.6L509.5 166.5L511.0 166.7L512.5 167.0L514.0 167.5L515.5 168.2L517.0 168.2L518.5 168.6L520.0 167.1L521.5 167.9L523.0 166.7L524.5 167.2L526.0 166.8L527.5 167.7L529.0 167.8L530.5 167.6L532.0 168.3L533.5 168.2L535.0 167.1L536.5 167.4L538.0 166.6L539.5 166.9L541.0 166.8L542.5 167.0L544.0 167.2L545.5 167.5L547.0 167.2L548.5 167.8L550.0 167.0L551.5 167.8L553.0 166.7L554.5 167.7L556.0 167.9L557.5 168.5L559.0 168.6L560.5 167.6L562.0 166.7L563.5 166.6L565.0 167.5L566.5 167.7L568.0 168.2L569.5 168.0L571.0 166.8L572.5 167.1L574.0 166.1L575.5 166.0L577.0 166.6L578.5 167.4L580.0 166.4L581.5 167.2L583.0 167.3L584.5 167.3L586.0 168.1L587.5 167.4L589.0 167.3L590.5 167.2L592.0 166.6L593.5 167.1L595.0 167.8L596.5 168.4L598.0 168.3L599.5 168.7L601.0 167.1L602.5 167.7L604.0 168.3L605.5 168.4L607.0 168.3L608.5 168.6L610.0 167.1L611.5 166.3L613.0 166.0L614.5 167.1L616.0 168.0L617.5 167.2L619.0 168.1L620.5 167.0L622.0 166.6L623.5 166.0L625.0 166.7L626.5 167.3L628.0 167.7L629.5 168.2L631.0 168.2L632.5 166.9L634.0 166.3L635.5 166.5L637.0 166.9L638.5 166.7L640.0 166.3L641.5 167.3L643.0 167.1L644.5 168.0L646.0 168.2L647.5 167.4L649.0 167.7L650.5 168.0L652.0 168.4L653.5 167.5L655.0 167.4L656.5 167.0L658.0 167.9L659.5 167.6L661.0 168.2L662.5 168.1L664.0 167.6L665.5 167.8L667.0 167.3L668.5 167.6L670.0 167.5L671.5 167.0L673.0 167.2L674.5 167.7L676.0 166.6L677.5 166.8L679.0 167.8L680.5 168.2L682.0 167.0L683.5 167.3L685.0 167.0L686.5 167.6L688.0 166.6L689.5 167.3L691.0 167.2L692.5 166.9L694.0 167.0L695.5 166.5L697.0 166.5L698.5 166.7L700.0 167.2L701.5 167.4L703.0 167.1L704.5 166.3L706.0 166.2L707.5 167.1L709.0 166.9L710.5 166.5L712.0 166.7L713.5 166.4L715.0 166.8L716.5 167.0L718.0 166.1L719.5 166.1L721.0 167.3L722.5 166.9L724.0 166.4L725.5 167.4L727.0 167.0L728.5 166.2L730.0 165.9L731.5 166.5L733.0 165.9L734.5 166.7L736.0 166.8L737.5 166.7L739.0 166.4L740.5 166.7L742.0 166.6L743.5 167.6L745.0 167.8L746.5 168.4L748.0 167.0L749.5 167.5L751.0 167.8L752.5 167.4L754.0 167.3L755.5 167.7L757.0 168.4L758.5 168.6L760.0 167.5L761.5 167.6L763.0 167.8L764.5 167.6L766.0 167.3L767.5 167.9L769.0 168.4L770.5 167.3L772.0 166.5L773.5 165.9L775.0 165.6L776.5 167.2L778.0 166.2L779.5 166.1L781.0 167.5L782.5 167.4L784.0 166.5L785.5 165.8L787.0 166.7L788.5 167.0L790.0 167.1L791.5 166.2L793.0 167.0L794.5 167.5L796.0 168.1L797.5 166.7L799.0 166.8L800.5 166.6L802.0 167.1L803.5 168.0L805.0 167.8L806.5 167.2L808.0 167.7L809.5 167.5L811.0 166.6L812.5 167.7L814.0 166.7L815.5 167.3L817.0 168.1L818.5 166.8L820.0 167.8L821.5 166.9L823.0 167.5L824.5 168.2L826.0 168.4L827.5 167.1L829.0 167.1L830.5 167.8L832.0 166.8L833.5 166.2L835.0 165.6L836.5 165.4L838.0 165.2L839.5 166.8L841.0 166.6L842.5 166.5L844.0 167.0L845.5 167.7L847.0 167.4L848.5 167.7L850.0 166.6L851.5 166.3L853.0 167.5L854.5 168.2L856.0 167.3L857.5 167.0L859.0 166.6L860.5 167.4L862.0 168.0L863.5 166.8L865.0 167.2L866.5 167.6L868.0 167.4L869.5 166.5L871.0 167.6L872.5 168.0L874.0 167.9L875.5 168.0L877.0 167.6L878.5 167.1L880.0 166.2L881.5 166.0L883.0 166.2L884.5 166.0L886.0 167.0L887.5 167.7L889.0 167.1L890.5 164.9L892.0 166.0L893.5 165.7L895.0 164.5L896.5 163.8L898.0 162.4L899.5 162.9L901.0 164.0L902.5 163.7L904.0 165.0L905.5 165.3L907.0 164.1L908.5 164.8L910.0 163.1L911.5 163.6L913.0 163.3L914.5 164.9L916.0 164.4L917.5 162.8L919.0 162.3L920.5 163.0L922.0 163.6L923.5 163.0L925.0 164.6L926.5 164.3L928.0 164.1L929.5 163.9L931.0 165.1L932.5 165.2L934.0 163.8L935.5 163.1L937.0 164.6L938.5 165.3L940.0 164.2L941.5 165.7L943.0 164.2L944.5 162.7L946.0 162.6L947.5 163.0L949.0 164.2L950.5 163.9L952.0 163.7L953.5 163.4L955.0 164.0L956.5 163.5L958.0 165.1L959.5 165.2L961.0 164.3L962.5 163.3L964.0 164.1L965.5 163.5L967.0 162.6L968.5 163.1L970.0 162.4L971.5 162.2L973.0 161.6L974.5 162.1L976.0 161.5L977.5 162.9L979.0 162.8L980.5 162.3L982.0 164.0L983.5 164.0L985.0 164.5L986.5 164.8L988.0 165.4L989.5 163.8L991.0 164.6L992.5 163.2L994.0 164.4L995.5 162.9L997.0 164.5L998.5 163.9L1000.0 165.5L1001.5 165.7L1003.0 166.4L1004.5 164.9L1006.0 164.4L1007.5 163.4L1009.0 163.3L1010.5 162.6L1012.0 164.4L1013.5 163.3L1015.0 162.4L1016.5 162.0L1018.0 163.2L1019.5 162.8L1021.0 163.4L1022.5 164.1L1024.0 164.2L1025.5 162.7L1027.0 164.3L1028.5 163.5L1030.0 163.8L1031.5 164.6L1033.0 165.3L1034.5 164.7L1036.0 163.3L1037.5 162.4L1039.0 163.5L1040.5 164.3L1042.0 164.7L1043.5 163.0L1045.0 164.4L1046.5 165.3L1048.0 165.3L1049.5 164.3L1051.0 164.9L1052.5 165.7L1054.0 165.2L1055.5 164.7L1057.0 163.7L1058.5 162.8L1060.0 162.0L1061.5 161.6L1063.0 161.4L1064.5 162.4L1066.0 162.3L1067.5 161.9L1069.0 163.0L1070.5 164.1L1072.0 164.5L1073.5 165.9L1075.0 164.0L1076.5 163.5L1078.0 163.4L1079.5 162.8L1081.0 163.4L1082.5 163.5L1084.0 164.3L1085.5 164.3L1087.0 162.7L1088.5 161.9L1090.0 164.1L1091.5 163.1L1093.0 164.3L1094.5 165.0L1096.0 165.7L1097.5 166.0L1099.0 164.9L1100.5 163.6L1102.0 162.7L1103.5 162.6L1105.0 163.4L1106.5 164.0L1108.0 164.3L1109.5 163.8L1111.0 164.8L1112.5 163.7L1114.0 164.6L1115.5 164.5L1117.0 163.1L1118.5 164.2L1120.0 164.1L1121.5 164.5L1123.0 163.9L1124.5 162.8L1126.0 163.7L1127.5 163.7L1129.0 163.7L1130.5 164.8L1132.0 163.5L1133.5 164.3L1135.0 163.8L1136.5 164.6L1138.0 164.7L1139.5 163.3L1141.0 163.5L1142.5 163.3L1144.0 164.4L1145.5 165.3L1147.0 165.6L1148.5 165.1L1150.0 165.7L1150.0 180.5L1148.5 179.1L1147.0 179.4L1145.5 180.2L1144.0 182.0L1142.5 180.8L1141.0 181.7L1139.5 181.2L1138.0 180.7L1136.5 180.4L1135.0 181.4L1133.5 179.9L1132.0 182.0L1130.5 180.0L1129.0 181.3L1127.5 180.2L1126.0 181.6L1124.5 182.6L1123.0 182.4L1121.5 179.1L1120.0 179.7L1118.5 180.3L1117.0 182.3L1115.5 180.2L1114.0 180.0L1112.5 180.4L1111.0 180.4L1109.5 179.7L1108.0 181.7L1106.5 182.4L1105.0 181.1L1103.5 181.5L1102.0 183.2L1100.5 182.0L1099.0 179.0L1097.5 178.1L1096.0 180.0L1094.5 178.9L1093.0 179.4L1091.5 182.1L1090.0 180.4L1088.5 181.1L1087.0 184.2L1085.5 182.2L1084.0 181.2L1082.5 181.8L1081.0 183.2L1079.5 182.0L1078.0 183.4L1076.5 182.2L1075.0 182.6L1073.5 179.1L1072.0 180.7L1070.5 180.6L1069.0 180.2L1067.5 184.0L1066.0 182.2L1064.5 181.6L1063.0 183.4L1061.5 183.3L1060.0 181.8L1058.5 184.0L1057.0 180.5L1055.5 179.5L1054.0 178.5L1052.5 178.3L1051.0 179.4L1049.5 180.8L1048.0 178.7L1046.5 179.0L1045.0 180.4L1043.5 182.7L1042.0 181.4L1040.5 182.2L1039.0 180.0L1037.5 181.7L1036.0 180.4L1034.5 180.1L1033.0 178.9L1031.5 180.7L1030.0 181.8L1028.5 181.1L1027.0 179.7L1025.5 184.1L1024.0 179.8L1022.5 182.3L1021.0 180.7L1019.5 183.0L1018.0 180.3L1016.5 183.8L1015.0 183.0L1013.5 179.9L1012.0 181.8L1010.5 180.8L1009.0 182.0L1007.5 181.9L1006.0 180.7L1004.5 179.5L1003.0 178.8L1001.5 179.3L1000.0 179.1L998.5 179.5L997.0 179.6L995.5 182.4L994.0 180.9L992.5 182.1L991.0 181.1L989.5 181.9L988.0 180.7L986.5 181.7L985.0 179.6L983.5 181.8L982.0 182.6L980.5 181.3L979.0 180.5L977.5 180.7L976.0 182.8L974.5 183.5L973.0 182.6L971.5 183.0L970.0 181.4L968.5 183.2L967.0 180.5L965.5 181.2L964.0 181.8L962.5 181.1L961.0 180.7L959.5 180.4L958.0 178.9L956.5 181.1L955.0 180.2L953.5 182.1L952.0 181.3L950.5 182.5L949.0 180.9L947.5 181.3L946.0 182.2L944.5 181.2L943.0 181.1L941.5 179.6L940.0 180.0L938.5 180.2L937.0 181.2L935.5 181.4L934.0 182.1L932.5 178.7L931.0 180.6L929.5 179.8L928.0 181.2L926.5 181.5L925.0 181.8L923.5 182.3L922.0 181.0L920.5 181.7L919.0 184.7L917.5 182.6L916.0 181.0L914.5 178.9L913.0 180.8L911.5 181.6L910.0 182.5L908.5 179.7L907.0 180.3L905.5 180.1L904.0 181.0L902.5 182.0L901.0 182.3L899.5 182.7L898.0 181.3L896.5 180.3L895.0 181.8L893.5 179.1L892.0 179.4L890.5 178.7L889.0 177.5L887.5 176.4L886.0 177.8L884.5 179.6L883.0 179.0L881.5 180.1L880.0 178.6L878.5 177.9L877.0 177.4L875.5 177.2L874.0 176.7L872.5 177.3L871.0 177.3L869.5 179.5L868.0 176.9L866.5 178.0L865.0 177.6L863.5 179.3L862.0 176.1L860.5 177.0L859.0 178.2L857.5 178.0L856.0 178.3L854.5 176.3L853.0 178.2L851.5 179.7L850.0 178.6L848.5 177.1L847.0 177.3L845.5 176.8L844.0 177.6L842.5 177.4L841.0 179.3L839.5 177.7L838.0 180.4L836.5 180.6L835.0 178.9L833.5 178.3L832.0 178.1L830.5 178.0L829.0 178.5L827.5 178.8L826.0 176.5L824.5 176.8L823.0 176.9L821.5 178.3L820.0 177.0L818.5 178.5L817.0 177.6L815.5 178.2L814.0 178.5L812.5 176.5L811.0 178.3L809.5 177.0L808.0 177.0L806.5 177.5L805.0 176.3L803.5 176.3L802.0 177.2L800.5 178.4L799.0 178.6L797.5 178.5L796.0 176.4L794.5 177.3L793.0 178.7L791.5 178.7L790.0 177.5L788.5 178.1L787.0 177.3L785.5 179.4L784.0 177.7L782.5 178.5L781.0 177.2L779.5 179.7L778.0 179.4L776.5 177.3L775.0 179.2L773.5 177.9L772.0 178.0L770.5 177.7L769.0 176.5L767.5 177.6L766.0 177.2L764.5 176.7L763.0 177.4L761.5 176.9L760.0 178.4L758.5 176.1L757.0 175.9L755.5 177.0L754.0 177.3L752.5 178.4L751.0 177.5L749.5 178.2L748.0 177.5L746.5 176.1L745.0 177.2L743.5 178.2L742.0 178.6L740.5 178.3L739.0 179.7L737.5 179.2L736.0 178.6L734.5 178.9L733.0 179.8L731.5 179.5L730.0 177.9L728.5 179.6L727.0 178.4L725.5 177.6L724.0 179.4L722.5 178.2L721.0 178.3L719.5 180.1L718.0 178.5L716.5 178.1L715.0 179.2L713.5 179.2L712.0 178.3L710.5 177.9L709.0 177.2L707.5 178.2L706.0 179.3L704.5 179.3L703.0 178.3L701.5 177.8L700.0 178.2L698.5 178.6L697.0 177.4L695.5 179.6L694.0 178.1L692.5 178.6L691.0 177.0L689.5 177.7L688.0 178.3L686.5 177.0L685.0 177.0L683.5 178.1L682.0 177.1L680.5 176.6L679.0 176.7L677.5 177.7L676.0 177.2L674.5 176.5L673.0 178.0L671.5 177.2L670.0 177.7L668.5 177.0L667.0 178.0L665.5 177.3L664.0 178.0L662.5 176.9L661.0 177.2L659.5 177.5L658.0 176.6L656.5 178.4L655.0 178.4L653.5 178.0L652.0 176.7L650.5 177.7L649.0 177.7L647.5 177.7L646.0 176.3L644.5 176.6L643.0 177.3L641.5 176.7L640.0 178.2L638.5 179.1L637.0 177.7L635.5 178.1L634.0 179.3L632.5 178.1L631.0 176.5L629.5 176.1L628.0 177.3L626.5 176.8L625.0 178.5L623.5 179.1L622.0 178.9L620.5 178.7L619.0 176.6L617.5 177.8L616.0 176.5L614.5 177.4L613.0 178.3L611.5 179.6L610.0 178.5L608.5 175.8L607.0 176.3L605.5 177.3L604.0 176.0L602.5 177.3L601.0 178.5L599.5 175.9L598.0 176.7L596.5 176.6L595.0 178.0L593.5 178.1L592.0 177.9L590.5 178.6L589.0 177.9L587.5 177.1L586.0 177.4L584.5 177.3L583.0 178.0L581.5 178.1L580.0 178.3L578.5 177.4L577.0 177.9L575.5 179.5L574.0 177.9L572.5 178.6L571.0 179.2L569.5 177.5L568.0 177.5L566.5 177.6L565.0 177.5L563.5 179.2L562.0 179.1L560.5 177.4L559.0 176.2L557.5 176.5L556.0 177.4L554.5 177.5L553.0 177.3L551.5 177.7L550.0 177.0L548.5 177.1L547.0 178.0L545.5 177.2L544.0 178.6L542.5 177.2L541.0 178.0L539.5 178.4L538.0 178.5L536.5 177.6L535.0 177.9L533.5 176.4L532.0 176.3L530.5 178.1L529.0 177.6L527.5 178.0L526.0 178.1L524.5 177.2L523.0 177.3L521.5 176.8L520.0 177.4L518.5 176.1L517.0 176.4L515.5 177.2L514.0 177.4L512.5 177.2L511.0 178.2L509.5 177.4L508.0 179.4L506.5 177.3L505.0 177.6L503.5 177.9L502.0 178.4L500.5 177.9L499.0 176.7L497.5 177.2L496.0 177.2L494.5 178.7L493.0 178.0L491.5 178.1L490.0 177.8L488.5 179.3L487.0 178.3L485.5 177.8L484.0 177.2L482.5 176.7L481.0 177.8L479.5 177.7L478.0 178.0L476.5 175.7L475.0 176.6L473.5 176.2L472.0 176.6L470.5 177.6L469.0 178.0L467.5 177.6L466.0 178.9L464.5 177.4L463.0 177.9L461.5 179.8L460.0 179.3L458.5 178.9L457.0 180.0L455.5 179.0L454.0 179.0L452.5 178.3L451.0 176.8L449.5 177.9L448.0 177.7L446.5 179.0L445.0 176.2L443.5 176.8L442.0 176.0L440.5 176.1L439.0 176.7L437.5 177.2L436.0 177.9L434.5 178.4L433.0 179.3L431.5 179.1L430.0 179.4L428.5 179.4L427.0 177.2L425.5 178.4L424.0 177.7L422.5 177.1L421.0 176.3L419.5 177.3L418.0 176.7L416.5 178.5L415.0 179.1L413.5 178.2L412.0 177.7L410.5 178.5L409.0 178.3L407.5 176.7L406.0 177.7L404.5 177.9L403.0 178.6L401.5 179.5L400.0 177.0L398.5 178.7L397.0 177.9L395.5 179.6L394.0 177.4L392.5 178.2L391.0 179.2L389.5 178.9L388.0 178.3L386.5 179.5L385.0 179.9L383.5 178.9L382.0 177.6L380.5 179.5L379.0 178.0L377.5 177.9L376.0 177.6L374.5 177.4L373.0 179.3L371.5 177.3L370.0 176.7L368.5 176.6L367.0 176.6L365.5 176.3L364.0 176.6L362.5 177.2L361.0 177.9L359.5 176.3L358.0 176.2L356.5 178.1L355.0 178.4L353.5 176.7L352.0 178.3L350.5 177.2L349.0 178.2L347.5 178.3L346.0 179.2L344.5 178.6L343.0 176.9L341.5 179.0L340.0 178.2L338.5 178.0L337.0 178.9L335.5 177.4L334.0 179.5L332.5 178.0L331.0 179.3L329.5 177.5L328.0 177.7L326.5 177.4L325.0 179.9Z" fill="#717886"/><rect x="1148" y="129" width="413" height="59" fill="#767a82"/><path d="M1148 158.5h413" stroke="#83867a" stroke-width="2" stroke-dasharray="7 3 2 4 9 2"/><path d="M325 187.5h1236" stroke="#5d6064" stroke-width="1"/></svg>
<div class="a" style="left:372px;top:189px;width:519px;height:59px;background:#659890;border-left:1px solid #8fb4b4"></div>
<div class="a" style="left:372px;top:190px;width:56px;height:13px;background:#a7b3b3;clip-path:polygon(0 0,100% 0,47px 100%,0 100%)"></div>
<div class="t" style="left:375px;top:192px;font-size:9.5px;letter-spacing:.6px;color:#fff">Main Pad</div>
<div class="a" style="left:372px;top:235px;width:28px;height:13px;background:#a7b3b3;clip-path:polygon(0 0,18px 0,28px 100%,0 100%)"></div>
<svg class="a" style="left:380px;top:237px" width="9" height="9" viewBox="0 0 9 9"><path d="M0 3h2.500l3.500-3v9l-3.500-3H0z" fill="#e8ecec"/></svg>
<div class="a" style="left:891px;top:189px;width:519px;height:59px;background:#659890;border-left:1px solid #8fb4b4"></div>
<div class="a" style="left:891px;top:190px;width:56px;height:13px;background:#a7b3b3;clip-path:polygon(0 0,100% 0,47px 100%,0 100%)"></div>
<div class="t" style="left:894px;top:192px;font-size:9.5px;letter-spacing:.6px;color:#fff">Main Pad</div>
<div class="a" style="left:891px;top:235px;width:28px;height:13px;background:#a7b3b3;clip-path:polygon(0 0,18px 0,28px 100%,0 100%)"></div>
<svg class="a" style="left:899px;top:237px" width="9" height="9" viewBox="0 0 9 9"><path d="M0 3h2.500l3.500-3v9l-3.500-3H0z" fill="#e8ecec"/></svg>
<svg class="a" style="left:0;top:189px" width="1562" height="59" viewBox="0 189 1562 59"><path d="M372.0 213.5H436.8M372.0 215.0H404.4M404.4 216.5H436.8M372.0 218.0H404.4M404.4 219.5H436.8M436.8 213.5H501.7M436.8 215.0H469.3M469.3 213.5H501.7M436.8 218.0H469.3M469.3 219.5H501.7M501.7 209.0H534.1M534.1 207.5H566.5M501.7 215.0H566.5M501.7 221.0H566.5M566.5 215.0H598.9M598.9 216.5H631.4M566.5 215.0H598.9M598.9 213.0H631.4M566.5 218.0H631.4M631.4 213.5H663.8M663.8 215.0H696.2M631.4 215.0H696.2M631.4 215.0H663.8M663.8 213.0H696.2M696.2 209.0H728.6M728.6 210.5H761.0M696.2 215.0H728.6M728.6 216.5H761.0M696.2 216.5H761.0M761.0 212.0H825.9M761.0 216.0H793.5M793.5 214.0H825.9M761.0 221.0H825.9M825.9 213.5H858.3M858.3 212.0H890.7M825.9 215.0H858.3M858.3 213.0H890.7M825.9 215.0H858.3M858.3 213.0H890.7" stroke="#5a8894" stroke-width="1" fill="none"/><path d="M891.0 213.5H955.8M891.0 215.0H923.4M923.4 216.5H955.8M891.0 218.0H923.4M923.4 219.5H955.8M955.8 213.5H1020.7M955.8 215.0H988.3M988.3 213.5H1020.7M955.8 218.0H988.3M988.3 219.5H1020.7M1020.7 209.0H1053.1M1053.1 207.5H1085.5M1020.7 215.0H1085.5M1020.7 221.0H1085.5M1085.5 215.0H1117.9M1117.9 216.5H1150.4M1085.5 215.0H1117.9M1117.9 213.0H1150.4M1085.5 218.0H1150.4M1150.4 213.5H1182.8M1182.8 215.0H1215.2M1150.4 215.0H1215.2M1150.4 215.0H1182.8M1182.8 213.0H1215.2M1215.2 209.0H1247.6M1247.6 210.5H1280.0M1215.2 215.0H1247.6M1247.6 216.5H1280.0M1215.2 216.5H1280.0M1280.0 212.0H1344.9M1280.0 216.0H1312.5M1312.5 214.0H1344.9M1280.0 221.0H1344.9M1344.9 213.5H1377.3M1377.3 212.0H1409.7M1344.9 215.0H1377.3M1377.3 213.0H1409.7M1344.9 215.0H1377.3M1377.3 213.0H1409.7" stroke="#5a8894" stroke-width="1" fill="none"/></svg>
<div class="a" style="left:372px;top:249px;width:552px;height:60px;background:#0cfacc"></div>
<svg class="a" style="left:0;top:249px" width="1562" height="59" viewBox="0 249 1562 59"><path d="M374.0 262.3L375.0 261.9L376.0 262.2L377.0 261.6L378.0 261.5L379.0 261.2L380.0 261.1L381.0 261.8L382.0 261.6L383.0 262.1L384.0 261.6L385.0 262.2L386.0 261.6L387.0 261.5L388.0 261.5L389.0 261.7L390.0 262.1L391.0 261.8L392.0 262.2L393.0 261.9L394.0 261.9L395.0 261.7L396.0 261.6L397.0 261.7L398.0 261.8L399.0 261.9L400.0 261.6L401.0 261.6L402.0 261.8L403.0 261.5L404.0 261.5L405.0 261.7L406.0 261.4L407.0 261.3L408.0 261.2L409.0 261.8L410.0 261.8L411.0 261.5L412.0 261.5L413.0 261.8L414.0 261.8L415.0 261.8L416.0 261.7L417.0 261.6L418.0 261.8L419.0 262.0L420.0 262.1L421.0 262.2L422.0 262.2L423.0 261.7L424.0 261.9L425.0 261.5L426.0 261.9L427.0 261.9L428.0 262.2L429.0 262.4L430.0 262.1L431.0 261.6L432.0 261.6L433.0 261.5L434.0 261.3L435.0 261.4L436.0 261.4L437.0 261.7L438.0 261.9L439.0 262.3L440.0 262.3L441.0 261.8L442.0 262.2L443.0 262.2L444.0 262.2L445.0 262.0L446.0 262.1L447.0 261.6L448.0 262.1L449.0 261.7L450.0 261.6L451.0 262.0L452.0 262.3L453.0 261.9L454.0 262.1L455.0 261.8L456.0 261.9L457.0 262.2L458.0 261.7L459.0 262.0L460.0 262.0L461.0 261.6L462.0 261.4L463.0 261.6L464.0 262.1L465.0 261.7L466.0 261.5L467.0 261.4L468.0 261.4L469.0 261.8L470.0 261.5L471.0 262.1L472.0 261.5L473.0 261.7L474.0 261.7L475.0 261.8L476.0 261.5L477.0 261.4L478.0 261.9L479.0 262.1L480.0 261.6L481.0 261.4L482.0 261.7L483.0 262.1L484.0 261.8L485.0 261.8L486.0 261.7L487.0 261.5L488.0 261.6L489.0 261.9L490.0 262.3L491.0 261.7L492.0 261.7L493.0 261.5L494.0 261.7L495.0 261.3L496.0 261.9L497.0 261.8L498.0 261.6L499.0 261.5L500.0 261.6L501.0 261.3L502.0 261.3L503.0 261.3L504.0 261.5L505.0 261.7L506.0 262.2L507.0 262.3L508.0 262.3L509.0 262.6L510.0 262.7L511.0 262.5L512.0 262.3L513.0 262.6L514.0 262.8L515.0 262.2L516.0 262.4L517.0 261.8L518.0 262.2L519.0 261.7L520.0 261.6L521.0 261.6L522.0 261.8L523.0 261.8L524.0 261.4L525.0 261.6L526.0 261.7L527.0 261.6L528.0 262.0L529.0 262.0L530.0 262.1L531.0 262.0L532.0 262.0L533.0 262.0L534.0 261.9L535.0 261.7L536.0 261.6L537.0 261.6L538.0 261.7L539.0 262.2L540.0 262.1L541.0 261.8L542.0 261.5L543.0 262.0L544.0 262.3L545.0 262.4L546.0 262.5L547.0 262.6L548.0 262.2L549.0 262.5L550.0 262.2L551.0 262.1L552.0 261.7L553.0 261.9L554.0 262.0L555.0 261.8L556.0 261.6L557.0 261.5L558.0 261.8L559.0 261.7L560.0 261.4L561.0 261.6L562.0 261.4L563.0 261.4L564.0 261.6L565.0 261.7L566.0 261.5L567.0 262.1L568.0 262.1L569.0 262.0L570.0 262.2L571.0 262.0L572.0 262.3L573.0 262.0L574.0 262.0L575.0 262.1L576.0 261.6L577.0 261.4L578.0 261.7L579.0 261.4L580.0 261.7L581.0 261.6L582.0 261.9L583.0 261.7L584.0 261.4L585.0 261.6L586.0 262.1L587.0 261.5L588.0 262.0L589.0 262.4L590.0 262.3L591.0 261.8L592.0 262.0L593.0 262.2L594.0 262.3L595.0 262.2L596.0 261.6L597.0 262.1L598.0 262.2L599.0 262.3L600.0 261.7L601.0 262.2L602.0 261.9L603.0 262.1L604.0 262.4L605.0 261.9L606.0 261.9L607.0 261.7L608.0 261.9L609.0 262.1L610.0 261.9L611.0 262.3L612.0 261.8L613.0 261.9L614.0 262.1L615.0 261.6L616.0 261.3L617.0 261.9L618.0 262.1L619.0 262.4L620.0 261.8L621.0 262.2L622.0 262.4L623.0 262.5L624.0 262.7L625.0 262.1L626.0 262.0L627.0 261.7L628.0 261.4L629.0 262.0L630.0 262.3L631.0 262.3L632.0 262.4L633.0 262.2L634.0 262.1L635.0 262.3L636.0 262.1L637.0 262.2L638.0 262.4L639.0 262.4L640.0 262.5L641.0 262.7L642.0 262.3L643.0 262.5L644.0 262.4L645.0 262.3L646.0 261.9L647.0 261.9L648.0 261.9L649.0 261.7L650.0 261.4L651.0 261.5L652.0 261.8L653.0 262.2L654.0 262.1L655.0 261.5L656.0 262.0L657.0 261.8L658.0 261.5L659.0 261.9L660.0 262.2L661.0 262.1L662.0 262.4L663.0 262.1L664.0 261.7L665.0 261.7L666.0 262.0L667.0 261.6L668.0 261.6L669.0 262.1L670.0 261.8L671.0 261.9L672.0 262.3L673.0 262.0L674.0 262.0L675.0 261.7L676.0 262.0L677.0 261.6L678.0 261.7L679.0 262.0L680.0 262.1L681.0 262.1L682.0 261.6L683.0 262.1L684.0 262.2L685.0 262.4L686.0 262.4L687.0 262.5L688.0 262.7L689.0 262.0L690.0 262.2L691.0 261.9L692.0 262.2L693.0 261.9L694.0 261.8L695.0 261.8L696.0 261.4L697.0 261.6L698.0 261.8L699.0 261.8L700.0 261.9L701.0 261.7L702.0 261.9L703.0 262.2L704.0 262.2L705.0 262.5L706.0 262.3L707.0 262.5L708.0 262.0L709.0 262.3L710.0 261.9L711.0 262.3L712.0 261.8L713.0 262.2L714.0 261.8L715.0 261.6L716.0 261.4L717.0 261.4L718.0 261.3L719.0 261.7L720.0 261.3L721.0 261.5L722.0 261.3L723.0 261.9L724.0 262.2L725.0 262.0L726.0 261.8L727.0 261.5L728.0 261.2L729.0 261.6L730.0 261.3L731.0 261.3L732.0 261.7L733.0 261.4L734.0 261.9L735.0 261.9L736.0 261.6L737.0 262.1L738.0 261.8L739.0 261.8L740.0 261.4L741.0 261.8L742.0 261.4L743.0 261.7L744.0 261.6L745.0 261.5L746.0 261.6L747.0 261.5L748.0 262.0L749.0 262.4L750.0 262.5L751.0 262.5L752.0 262.1L753.0 262.0L754.0 262.3L755.0 262.4L756.0 262.7L757.0 261.9L758.0 261.6L759.0 262.0L760.0 262.3L761.0 262.0L762.0 262.2L763.0 262.0L764.0 261.8L765.0 262.3L766.0 261.7L767.0 261.7L768.0 261.4L769.0 262.0L770.0 262.0L771.0 262.2L772.0 262.1L773.0 261.8L774.0 261.4L775.0 261.8L776.0 262.3L777.0 261.7L778.0 261.3L779.0 261.2L780.0 261.1L781.0 261.4L782.0 261.2L783.0 261.4L784.0 261.9L785.0 262.1L786.0 262.1L787.0 261.8L788.0 261.4L789.0 261.8L790.0 261.7L791.0 262.1L792.0 261.9L793.0 261.5L794.0 261.5L795.0 261.3L796.0 261.1L797.0 261.1L798.0 261.8L799.0 261.7L800.0 262.2L801.0 261.9L802.0 262.3L803.0 262.1L804.0 261.7L805.0 262.1L806.0 261.9L807.0 261.5L808.0 262.0L809.0 262.3L810.0 262.5L811.0 262.2L812.0 261.6L813.0 261.5L814.0 261.6L815.0 262.2L816.0 261.9L817.0 261.9L818.0 262.0L819.0 261.7L820.0 262.0L821.0 262.0L822.0 262.4L823.0 262.4L824.0 261.9L825.0 261.8L826.0 261.8L827.0 262.0L828.0 261.6L829.0 262.1L830.0 262.1L831.0 261.9L832.0 261.5L833.0 261.3L834.0 262.0L835.0 261.9L836.0 261.8L837.0 262.2L838.0 262.0L839.0 261.8L840.0 262.2L841.0 261.8L842.0 261.5L843.0 261.5L844.0 261.9L845.0 262.1L846.0 262.0L847.0 262.3L848.0 262.3L849.0 262.4L850.0 262.5L851.0 261.8L852.0 261.6L853.0 261.7L854.0 261.4L855.0 261.2L856.0 261.1L857.0 261.0L858.0 261.3L859.0 261.6L860.0 261.3L861.0 261.8L862.0 261.7L863.0 261.4L864.0 262.0L865.0 261.8L866.0 261.4L867.0 261.3L868.0 261.6L869.0 262.1L870.0 262.1L871.0 262.3L872.0 262.5L873.0 262.5L874.0 262.3L875.0 262.1L876.0 261.7L877.0 261.4L878.0 261.3L879.0 261.4L880.0 261.2L881.0 261.0L882.0 261.5L883.0 261.6L884.0 262.1L885.0 262.3L886.0 261.8L887.0 261.9L888.0 261.5L889.0 261.5L890.0 261.5L891.0 261.9L892.0 261.7L893.0 261.8L894.0 262.7L895.0 262.7L896.0 262.8L897.0 263.0L898.0 263.3L899.0 263.6L900.0 263.6L901.0 263.7L902.0 263.7L903.0 263.7L904.0 263.7L905.0 263.8L906.0 263.9L907.0 263.9L908.0 263.9L909.0 263.9L910.0 263.9L911.0 263.9L912.0 263.9L912.0 265.1L911.0 265.0L910.0 265.1L909.0 265.2L908.0 265.0L907.0 265.1L906.0 265.2L905.0 265.2L904.0 265.2L903.0 265.2L902.0 265.3L901.0 265.4L900.0 265.4L899.0 265.5L898.0 265.4L897.0 266.1L896.0 266.4L895.0 266.1L894.0 266.4L893.0 267.4L892.0 267.7L891.0 266.9L890.0 267.4L889.0 267.4L888.0 267.7L887.0 266.8L886.0 267.2L885.0 266.7L884.0 267.3L883.0 267.1L882.0 267.8L881.0 267.6L880.0 267.5L879.0 267.4L878.0 267.5L877.0 267.8L876.0 267.8L875.0 267.3L874.0 266.8L873.0 266.9L872.0 266.3L871.0 266.5L870.0 266.5L869.0 266.4L868.0 267.1L867.0 267.9L866.0 267.4L865.0 267.7L864.0 266.8L863.0 267.9L862.0 267.0L861.0 267.2L860.0 268.3L859.0 268.0L858.0 267.8L857.0 268.2L856.0 267.3L855.0 268.2L854.0 267.3L853.0 267.0L852.0 267.3L851.0 267.0L850.0 266.1L849.0 266.2L848.0 266.3L847.0 266.8L846.0 267.3L845.0 267.0L844.0 266.7L843.0 267.6L842.0 266.9L841.0 266.7L840.0 267.1L839.0 267.2L838.0 267.1L837.0 266.7L836.0 267.7L835.0 267.4L834.0 266.8L833.0 267.4L832.0 267.1L831.0 267.2L830.0 267.1L829.0 267.3L828.0 267.0L827.0 267.5L826.0 266.9L825.0 267.1L824.0 266.9L823.0 266.8L822.0 266.4L821.0 267.1L820.0 267.1L819.0 267.7L818.0 267.2L817.0 267.4L816.0 267.0L815.0 266.5L814.0 267.4L813.0 267.6L812.0 267.8L811.0 267.0L810.0 266.7L809.0 266.9L808.0 266.9L807.0 268.0L806.0 267.5L805.0 267.1L804.0 267.6L803.0 266.6L802.0 266.8L801.0 267.0L800.0 267.1L799.0 267.9L798.0 266.7L797.0 268.6L796.0 267.7L795.0 268.3L794.0 267.0L793.0 267.4L792.0 266.9L791.0 266.7L790.0 267.6L789.0 267.3L788.0 268.0L787.0 267.4L786.0 266.8L785.0 266.4L784.0 266.9L783.0 267.7L782.0 267.3L781.0 267.0L780.0 267.9L779.0 268.2L778.0 267.6L777.0 267.4L776.0 267.0L775.0 267.1L774.0 268.0L773.0 266.7L772.0 266.8L771.0 267.1L770.0 267.1L769.0 267.0L768.0 267.2L767.0 267.1L766.0 267.2L765.0 266.9L764.0 267.4L763.0 266.8L762.0 266.5L761.0 267.2L760.0 266.8L759.0 267.4L758.0 267.5L757.0 266.6L756.0 266.7L755.0 266.3L754.0 266.5L753.0 267.5L752.0 266.6L751.0 266.5L750.0 266.5L749.0 266.9L748.0 267.1L747.0 267.1L746.0 267.1L745.0 267.6L744.0 267.5L743.0 267.5L742.0 267.8L741.0 267.5L740.0 267.1L739.0 266.7L738.0 267.4L737.0 266.8L736.0 267.3L735.0 267.1L734.0 267.5L733.0 267.0L732.0 267.4L731.0 268.2L730.0 267.7L729.0 267.7L728.0 267.6L727.0 267.3L726.0 267.5L725.0 267.0L724.0 266.6L723.0 267.2L722.0 267.7L721.0 267.9L720.0 268.1L719.0 267.9L718.0 267.7L717.0 268.1L716.0 267.2L715.0 267.6L714.0 267.2L713.0 267.1L712.0 267.0L711.0 266.5L710.0 267.4L709.0 266.6L708.0 266.8L707.0 266.6L706.0 266.9L705.0 266.8L704.0 267.0L703.0 267.2L702.0 266.8L701.0 267.0L700.0 267.0L699.0 267.5L698.0 267.5L697.0 267.4L696.0 268.1L695.0 266.7L694.0 266.8L693.0 266.9L692.0 266.7L691.0 266.9L690.0 266.4L689.0 267.0L688.0 266.0L687.0 266.1L686.0 266.8L685.0 267.0L684.0 266.4L683.0 266.5L682.0 267.0L681.0 266.5L680.0 267.1L679.0 267.4L678.0 267.3L677.0 267.1L676.0 267.2L675.0 267.0L674.0 267.1L673.0 267.3L672.0 267.0L671.0 267.5L670.0 267.7L669.0 266.9L668.0 267.5L667.0 267.2L666.0 266.9L665.0 267.6L664.0 267.6L663.0 267.3L662.0 266.4L661.0 266.6L660.0 267.0L659.0 267.2L658.0 267.3L657.0 267.3L656.0 267.4L655.0 267.6L654.0 266.6L653.0 267.2L652.0 267.2L651.0 267.9L650.0 268.0L649.0 267.7L648.0 266.7L647.0 267.0L646.0 267.5L645.0 267.0L644.0 266.3L643.0 266.8L642.0 266.4L641.0 266.2L640.0 266.3L639.0 266.8L638.0 266.7L637.0 266.9L636.0 267.1L635.0 266.7L634.0 266.9L633.0 266.6L632.0 266.8L631.0 267.0L630.0 266.9L629.0 267.3L628.0 267.6L627.0 267.7L626.0 266.6L625.0 266.5L624.0 266.3L623.0 266.3L622.0 266.4L621.0 267.2L620.0 266.8L619.0 267.0L618.0 266.5L617.0 266.9L616.0 267.6L615.0 267.5L614.0 267.0L613.0 266.7L612.0 267.2L611.0 266.6L610.0 267.4L609.0 266.5L608.0 267.4L607.0 267.2L606.0 266.7L605.0 267.0L604.0 266.5L603.0 266.8L602.0 267.2L601.0 266.7L600.0 267.4L599.0 267.1L598.0 266.8L597.0 267.3L596.0 266.9L595.0 266.8L594.0 266.6L593.0 266.4L592.0 266.7L591.0 266.7L590.0 267.0L589.0 266.8L588.0 266.6L587.0 267.3L586.0 267.0L585.0 267.8L584.0 267.7L583.0 267.4L582.0 266.8L581.0 267.2L580.0 266.9L579.0 267.8L578.0 267.4L577.0 268.0L576.0 267.6L575.0 267.0L574.0 266.7L573.0 267.3L572.0 266.6L571.0 267.4L570.0 267.0L569.0 266.8L568.0 266.5L567.0 266.4L566.0 268.0L565.0 267.0L564.0 267.5L563.0 268.0L562.0 267.6L561.0 267.0L560.0 267.5L559.0 267.0L558.0 267.4L557.0 267.7L556.0 267.8L555.0 267.2L554.0 266.6L553.0 266.6L552.0 267.7L551.0 267.2L550.0 266.8L549.0 266.5L548.0 267.0L547.0 266.2L546.0 266.8L545.0 266.4L544.0 267.0L543.0 266.7L542.0 268.0L541.0 267.6L540.0 267.1L539.0 266.4L538.0 267.3L537.0 267.1L536.0 267.2L535.0 267.2L534.0 266.9L533.0 266.9L532.0 267.2L531.0 266.9L530.0 267.4L529.0 266.5L528.0 266.9L527.0 267.1L526.0 266.9L525.0 267.8L524.0 267.8L523.0 267.3L522.0 267.1L521.0 267.0L520.0 267.9L519.0 267.1L518.0 266.6L517.0 267.0L516.0 266.5L515.0 267.1L514.0 266.1L513.0 266.5L512.0 266.7L511.0 266.2L510.0 266.5L509.0 266.8L508.0 266.4L507.0 266.4L506.0 266.8L505.0 267.1L504.0 267.3L503.0 267.2L502.0 267.4L501.0 268.2L500.0 266.9L499.0 267.6L498.0 267.1L497.0 267.1L496.0 267.4L495.0 268.2L494.0 267.2L493.0 267.7L492.0 267.5L491.0 267.5L490.0 266.3L489.0 267.0L488.0 266.8L487.0 267.6L486.0 267.7L485.0 266.9L484.0 267.0L483.0 267.1L482.0 266.8L481.0 268.0L480.0 267.1L479.0 266.6L478.0 267.1L477.0 267.8L476.0 267.9L475.0 267.7L474.0 267.5L473.0 267.3L472.0 267.6L471.0 267.1L470.0 267.6L469.0 267.0L468.0 267.7L467.0 267.7L466.0 268.1L465.0 267.4L464.0 266.7L463.0 267.9L462.0 267.6L461.0 267.5L460.0 266.6L459.0 266.7L458.0 267.8L457.0 267.2L456.0 267.6L455.0 267.0L454.0 266.8L453.0 267.4L452.0 266.4L451.0 267.3L450.0 267.7L449.0 267.3L448.0 266.6L447.0 267.7L446.0 266.5L445.0 266.8L444.0 267.0L443.0 267.0L442.0 266.3L441.0 266.8L440.0 266.6L439.0 266.5L438.0 267.5L437.0 266.9L436.0 267.9L435.0 268.0L434.0 267.6L433.0 267.3L432.0 267.2L431.0 267.9L430.0 266.7L429.0 266.3L428.0 266.7L427.0 266.7L426.0 266.9L425.0 267.9L424.0 266.8L423.0 267.8L422.0 266.4L421.0 266.5L420.0 267.3L419.0 267.3L418.0 267.3L417.0 267.6L416.0 267.1L415.0 267.7L414.0 267.0L413.0 267.2L412.0 268.1L411.0 267.5L410.0 266.9L409.0 267.5L408.0 267.6L407.0 267.4L406.0 267.7L405.0 267.4L404.0 267.3L403.0 267.0L402.0 267.6L401.0 267.8L400.0 267.0L399.0 267.6L398.0 267.0L397.0 267.2L396.0 267.4L395.0 267.6L394.0 266.8L393.0 267.0L392.0 266.4L391.0 267.6L390.0 267.3L389.0 266.8L388.0 268.0L387.0 267.4L386.0 267.7L385.0 267.0L384.0 267.5L383.0 267.3L382.0 267.0L381.0 267.2L380.0 268.1L379.0 267.9L378.0 267.3L377.0 267.0L376.0 267.0L375.0 266.9L374.0 266.4ZM374.0 289.8L375.0 290.0L376.0 290.0L377.0 290.1L378.0 289.9L379.0 290.2L380.0 289.9L381.0 290.0L382.0 289.8L383.0 289.9L384.0 290.0L385.0 290.4L386.0 290.5L387.0 290.6L388.0 289.9L389.0 289.9L390.0 290.1L391.0 289.8L392.0 290.3L393.0 290.6L394.0 290.7L395.0 290.4L396.0 290.4L397.0 289.8L398.0 289.8L399.0 289.6L400.0 290.1L401.0 290.4L402.0 290.1L403.0 290.4L404.0 290.2L405.0 289.7L406.0 290.0L407.0 290.2L408.0 290.0L409.0 289.9L410.0 289.6L411.0 289.5L412.0 290.1L413.0 289.7L414.0 290.0L415.0 290.1L416.0 290.2L417.0 289.6L418.0 290.1L419.0 290.2L420.0 290.1L421.0 289.7L422.0 290.1L423.0 290.4L424.0 290.1L425.0 290.2L426.0 289.7L427.0 290.2L428.0 289.8L429.0 289.8L430.0 290.3L431.0 290.4L432.0 289.8L433.0 290.0L434.0 289.9L435.0 290.1L436.0 290.2L437.0 289.9L438.0 290.3L439.0 290.0L440.0 290.3L441.0 290.3L442.0 289.7L443.0 289.9L444.0 289.5L445.0 289.7L446.0 290.1L447.0 289.8L448.0 289.8L449.0 289.7L450.0 289.4L451.0 289.7L452.0 289.3L453.0 289.1L454.0 289.1L455.0 289.1L456.0 289.6L457.0 290.1L458.0 290.3L459.0 290.1L460.0 289.6L461.0 290.0L462.0 290.3L463.0 289.8L464.0 290.1L465.0 290.4L466.0 290.0L467.0 289.7L468.0 289.4L469.0 289.7L470.0 289.8L471.0 289.7L472.0 289.7L473.0 289.9L474.0 289.7L475.0 289.9L476.0 289.6L477.0 289.7L478.0 289.6L479.0 290.1L480.0 289.8L481.0 289.4L482.0 289.7L483.0 290.0L484.0 290.1L485.0 289.9L486.0 290.2L487.0 290.1L488.0 289.8L489.0 289.6L490.0 289.7L491.0 290.1L492.0 290.0L493.0 290.3L494.0 290.2L495.0 289.6L496.0 289.4L497.0 289.6L498.0 290.1L499.0 289.7L500.0 289.7L501.0 289.4L502.0 289.6L503.0 289.4L504.0 289.7L505.0 290.0L506.0 289.8L507.0 290.3L508.0 289.7L509.0 289.7L510.0 290.1L511.0 289.6L512.0 289.7L513.0 290.2L514.0 290.0L515.0 290.4L516.0 289.9L517.0 290.2L518.0 290.3L519.0 290.1L520.0 290.0L521.0 289.5L522.0 289.9L523.0 289.4L524.0 289.3L525.0 289.8L526.0 290.2L527.0 290.5L528.0 290.0L529.0 290.3L530.0 290.5L531.0 290.0L532.0 289.7L533.0 289.8L534.0 289.5L535.0 289.2L536.0 289.5L537.0 289.3L538.0 289.9L539.0 290.1L540.0 290.3L541.0 290.2L542.0 289.9L543.0 289.5L544.0 289.9L545.0 289.7L546.0 290.2L547.0 290.4L548.0 289.8L549.0 289.8L550.0 290.2L551.0 290.0L552.0 290.2L553.0 289.9L554.0 290.3L555.0 290.3L556.0 290.1L557.0 290.0L558.0 289.9L559.0 289.9L560.0 290.2L561.0 290.1L562.0 290.2L563.0 289.7L564.0 289.8L565.0 290.3L566.0 290.3L567.0 289.9L568.0 290.3L569.0 289.7L570.0 289.4L571.0 289.4L572.0 289.4L573.0 289.4L574.0 289.8L575.0 289.8L576.0 289.7L577.0 290.0L578.0 290.2L579.0 290.0L580.0 290.4L581.0 289.9L582.0 289.9L583.0 290.3L584.0 290.2L585.0 290.5L586.0 290.2L587.0 289.7L588.0 289.8L589.0 289.5L590.0 289.8L591.0 289.6L592.0 289.8L593.0 289.5L594.0 289.4L595.0 289.2L596.0 289.1L597.0 289.6L598.0 289.6L599.0 289.7L600.0 289.6L601.0 289.5L602.0 289.6L603.0 290.0L604.0 289.8L605.0 289.5L606.0 289.7L607.0 289.4L608.0 289.8L609.0 289.9L610.0 290.3L611.0 289.8L612.0 289.9L613.0 289.5L614.0 289.4L615.0 289.7L616.0 289.5L617.0 289.4L618.0 289.8L619.0 290.0L620.0 290.0L621.0 290.4L622.0 289.8L623.0 290.0L624.0 290.2L625.0 289.8L626.0 289.6L627.0 289.5L628.0 289.4L629.0 289.4L630.0 289.9L631.0 290.3L632.0 289.9L633.0 289.6L634.0 290.0L635.0 289.8L636.0 289.7L637.0 290.0L638.0 289.5L639.0 289.7L640.0 289.8L641.0 289.7L642.0 290.0L643.0 290.3L644.0 290.1L645.0 290.1L646.0 290.0L647.0 290.1L648.0 290.4L649.0 290.1L650.0 290.0L651.0 290.3L652.0 290.5L653.0 289.8L654.0 289.4L655.0 290.0L656.0 289.7L657.0 289.7L658.0 289.9L659.0 290.3L660.0 290.4L661.0 290.4L662.0 290.3L663.0 290.1L664.0 290.1L665.0 290.1L666.0 289.8L667.0 289.9L668.0 289.8L669.0 290.1L670.0 289.8L671.0 289.6L672.0 290.1L673.0 289.6L674.0 289.6L675.0 289.3L676.0 289.2L677.0 289.1L678.0 289.0L679.0 289.1L680.0 289.2L681.0 289.9L682.0 290.3L683.0 289.8L684.0 289.6L685.0 289.6L686.0 289.4L687.0 289.7L688.0 289.5L689.0 289.8L690.0 289.8L691.0 290.0L692.0 290.0L693.0 289.7L694.0 290.1L695.0 289.8L696.0 289.6L697.0 289.3L698.0 289.5L699.0 289.9L700.0 289.7L701.0 289.8L702.0 290.0L703.0 289.8L704.0 289.7L705.0 290.0L706.0 289.7L707.0 290.1L708.0 290.2L709.0 289.9L710.0 290.2L711.0 290.0L712.0 290.0L713.0 290.4L714.0 290.6L715.0 290.2L716.0 290.5L717.0 290.2L718.0 290.2L719.0 290.1L720.0 289.9L721.0 289.6L722.0 290.1L723.0 290.0L724.0 289.6L725.0 289.8L726.0 289.6L727.0 290.0L728.0 289.8L729.0 289.5L730.0 289.3L731.0 289.4L732.0 290.1L733.0 290.0L734.0 290.1L735.0 289.9L736.0 289.7L737.0 290.0L738.0 290.3L739.0 290.5L740.0 289.8L741.0 289.8L742.0 289.5L743.0 290.2L744.0 289.7L745.0 289.7L746.0 289.8L747.0 289.7L748.0 289.9L749.0 289.6L750.0 289.7L751.0 289.8L752.0 289.7L753.0 289.4L754.0 289.9L755.0 290.0L756.0 289.7L757.0 289.8L758.0 290.0L759.0 290.0L760.0 290.2L761.0 290.5L762.0 289.9L763.0 289.5L764.0 289.6L765.0 289.6L766.0 289.4L767.0 289.3L768.0 289.2L769.0 289.9L770.0 289.8L771.0 290.2L772.0 289.6L773.0 289.4L774.0 289.3L775.0 289.7L776.0 289.6L777.0 290.0L778.0 290.4L779.0 290.0L780.0 289.5L781.0 289.3L782.0 289.5L783.0 289.6L784.0 289.6L785.0 289.8L786.0 289.8L787.0 290.0L788.0 289.5L789.0 289.9L790.0 289.6L791.0 289.9L792.0 290.4L793.0 289.8L794.0 289.7L795.0 290.2L796.0 289.6L797.0 290.2L798.0 290.0L799.0 290.3L800.0 290.1L801.0 290.2L802.0 289.9L803.0 290.2L804.0 290.5L805.0 290.0L806.0 290.2L807.0 290.3L808.0 290.5L809.0 290.2L810.0 290.2L811.0 290.3L812.0 290.3L813.0 290.5L814.0 290.5L815.0 289.9L816.0 289.7L817.0 289.3L818.0 289.4L819.0 289.3L820.0 289.3L821.0 289.4L822.0 290.0L823.0 289.9L824.0 290.3L825.0 290.2L826.0 290.0L827.0 290.2L828.0 289.8L829.0 290.1L830.0 289.9L831.0 289.9L832.0 290.4L833.0 290.1L834.0 289.9L835.0 290.2L836.0 290.4L837.0 290.2L838.0 290.1L839.0 289.8L840.0 289.9L841.0 290.1L842.0 290.3L843.0 289.7L844.0 289.3L845.0 289.3L846.0 289.6L847.0 290.1L848.0 290.3L849.0 290.0L850.0 289.6L851.0 289.6L852.0 289.5L853.0 289.3L854.0 289.3L855.0 289.8L856.0 289.6L857.0 289.9L858.0 289.6L859.0 289.5L860.0 289.9L861.0 290.3L862.0 290.1L863.0 289.8L864.0 290.1L865.0 290.3L866.0 290.0L867.0 290.4L868.0 290.6L869.0 290.7L870.0 290.0L871.0 290.2L872.0 289.7L873.0 289.6L874.0 290.1L875.0 290.0L876.0 290.3L877.0 290.3L878.0 290.3L879.0 290.3L880.0 290.0L881.0 289.9L882.0 290.0L883.0 290.2L884.0 290.2L885.0 289.7L886.0 289.9L887.0 289.9L888.0 289.4L889.0 289.7L890.0 289.8L891.0 290.2L892.0 290.3L893.0 290.5L894.0 291.3L895.0 291.2L896.0 291.3L897.0 291.3L898.0 291.5L899.0 291.4L900.0 291.6L901.0 291.5L902.0 291.7L903.0 291.7L904.0 291.9L905.0 291.9L906.0 291.9L907.0 291.9L908.0 291.9L909.0 291.9L910.0 291.9L911.0 291.9L912.0 291.9L912.0 293.2L911.0 293.1L910.0 293.0L909.0 293.1L908.0 293.2L907.0 293.0L906.0 293.2L905.0 293.1L904.0 293.0L903.0 293.4L902.0 293.5L901.0 293.7L900.0 293.2L899.0 293.8L898.0 293.4L897.0 293.7L896.0 293.7L895.0 293.6L894.0 293.6L893.0 294.3L892.0 294.6L891.0 295.1L890.0 295.7L889.0 295.3L888.0 295.8L887.0 295.1L886.0 294.9L885.0 295.2L884.0 295.1L883.0 294.5L882.0 295.1L881.0 295.6L880.0 295.4L879.0 295.0L878.0 294.9L877.0 294.5L876.0 294.4L875.0 295.3L874.0 294.6L873.0 295.1L872.0 295.3L871.0 295.1L870.0 294.9L869.0 294.3L868.0 294.5L867.0 294.8L866.0 294.7L865.0 294.5L864.0 295.2L863.0 295.6L862.0 295.3L861.0 294.5L860.0 295.2L859.0 295.1L858.0 296.0L857.0 294.9L856.0 295.9L855.0 295.7L854.0 296.0L853.0 296.0L852.0 295.1L851.0 295.7L850.0 295.4L849.0 294.8L848.0 295.1L847.0 294.9L846.0 295.3L845.0 295.6L844.0 295.5L843.0 294.9L842.0 295.1L841.0 294.7L840.0 295.1L839.0 294.9L838.0 295.1L837.0 295.2L836.0 294.6L835.0 295.2L834.0 295.5L833.0 294.5L832.0 295.0L831.0 294.7L830.0 295.3L829.0 294.5L828.0 294.7L827.0 294.5L826.0 294.8L825.0 294.5L824.0 295.0L823.0 295.2L822.0 294.5L821.0 295.0L820.0 296.1L819.0 295.1L818.0 296.1L817.0 295.3L816.0 295.7L815.0 295.0L814.0 294.8L813.0 294.2L812.0 294.3L811.0 294.3L810.0 294.9L809.0 294.5L808.0 294.8L807.0 294.7L806.0 295.0L805.0 294.6L804.0 294.6L803.0 294.4L802.0 294.9L801.0 294.4L800.0 295.3L799.0 295.0L798.0 295.5L797.0 295.2L796.0 295.1L795.0 294.8L794.0 295.8L793.0 295.7L792.0 294.4L791.0 294.8L790.0 295.2L789.0 295.5L788.0 295.8L787.0 294.6L786.0 295.3L785.0 295.2L784.0 295.3L783.0 295.1L782.0 295.7L781.0 295.7L780.0 295.9L779.0 295.1L778.0 294.5L777.0 294.5L776.0 295.3L775.0 295.1L774.0 295.6L773.0 295.1L772.0 295.9L771.0 294.4L770.0 295.4L769.0 294.7L768.0 296.4L767.0 295.4L766.0 295.5L765.0 295.8L764.0 295.1L763.0 295.8L762.0 294.9L761.0 294.8L760.0 294.7L759.0 295.0L758.0 294.6L757.0 294.7L756.0 295.1L755.0 295.1L754.0 295.4L753.0 295.6L752.0 295.2L751.0 294.7L750.0 294.8L749.0 295.1L748.0 295.5L747.0 295.1L746.0 295.1L745.0 294.8L744.0 295.9L743.0 294.8L742.0 295.1L741.0 294.8L740.0 295.5L739.0 294.7L738.0 295.0L737.0 294.6L736.0 295.8L735.0 295.6L734.0 294.8L733.0 294.8L732.0 295.1L731.0 295.4L730.0 295.4L729.0 295.5L728.0 295.1L727.0 295.4L726.0 294.9L725.0 295.6L724.0 295.1L723.0 294.9L722.0 295.2L721.0 294.8L720.0 295.3L719.0 295.3L718.0 294.6L717.0 294.5L716.0 294.3L715.0 294.7L714.0 294.1L713.0 295.0L712.0 294.6L711.0 295.4L710.0 295.2L709.0 295.0L708.0 294.6L707.0 294.7L706.0 295.5L705.0 295.1L704.0 295.6L703.0 295.4L702.0 294.7L701.0 294.9L700.0 295.5L699.0 295.3L698.0 295.9L697.0 296.2L696.0 295.4L695.0 294.7L694.0 295.1L693.0 295.4L692.0 294.6L691.0 294.6L690.0 294.8L689.0 295.4L688.0 295.7L687.0 295.6L686.0 295.7L685.0 295.3L684.0 295.1L683.0 295.6L682.0 295.1L681.0 295.4L680.0 296.0L679.0 296.6L678.0 296.7L677.0 295.6L676.0 295.8L675.0 296.1L674.0 296.0L673.0 295.8L672.0 294.7L671.0 295.4L670.0 294.9L669.0 294.5L668.0 295.4L667.0 294.9L666.0 295.2L665.0 295.0L664.0 294.6L663.0 294.4L662.0 294.5L661.0 294.2L660.0 294.8L659.0 294.8L658.0 295.4L657.0 295.7L656.0 295.8L655.0 294.9L654.0 296.2L653.0 294.7L652.0 294.2L651.0 295.1L650.0 295.2L649.0 295.3L648.0 294.9L647.0 294.7L646.0 295.4L645.0 295.2L644.0 295.2L643.0 294.5L642.0 294.6L641.0 294.9L640.0 295.1L639.0 295.0L638.0 295.9L637.0 295.4L636.0 295.6L635.0 295.4L634.0 294.9L633.0 295.7L632.0 294.7L631.0 295.1L630.0 295.5L629.0 295.1L628.0 296.1L627.0 296.0L626.0 295.6L625.0 295.3L624.0 295.0L623.0 295.2L622.0 295.4L621.0 294.8L620.0 295.2L619.0 295.1L618.0 295.7L617.0 295.2L616.0 295.8L615.0 295.1L614.0 295.2L613.0 296.1L612.0 295.5L611.0 295.1L610.0 294.8L609.0 294.9L608.0 294.8L607.0 295.6L606.0 295.1L605.0 295.0L604.0 295.4L603.0 294.8L602.0 295.6L601.0 295.2L600.0 294.9L599.0 295.1L598.0 294.9L597.0 295.0L596.0 296.3L595.0 295.5L594.0 295.4L593.0 295.1L592.0 295.0L591.0 295.8L590.0 294.8L589.0 295.1L588.0 294.9L587.0 295.2L586.0 295.2L585.0 294.2L584.0 294.8L583.0 295.1L582.0 294.7L581.0 294.7L580.0 294.5L579.0 295.0L578.0 294.6L577.0 295.4L576.0 295.1L575.0 295.2L574.0 295.6L573.0 295.9L572.0 295.8L571.0 295.8L570.0 295.7L569.0 295.3L568.0 294.8L567.0 294.8L566.0 294.7L565.0 294.9L564.0 295.7L563.0 294.9L562.0 295.0L561.0 294.9L560.0 294.7L559.0 295.6L558.0 294.8L557.0 295.0L556.0 294.8L555.0 294.4L554.0 295.0L553.0 294.9L552.0 294.4L551.0 294.8L550.0 295.1L549.0 294.7L548.0 295.1L547.0 294.9L546.0 295.2L545.0 294.9L544.0 295.4L543.0 295.8L542.0 295.5L541.0 295.0L540.0 294.3L539.0 294.8L538.0 295.3L537.0 296.0L536.0 294.9L535.0 296.1L534.0 295.7L533.0 295.1L532.0 295.8L531.0 294.7L530.0 294.2L529.0 295.0L528.0 295.5L527.0 294.8L526.0 295.1L525.0 294.9L524.0 296.1L523.0 295.1L522.0 295.6L521.0 295.4L520.0 295.1L519.0 295.3L518.0 295.1L517.0 295.2L516.0 295.2L515.0 294.9L514.0 295.2L513.0 294.4L512.0 295.7L511.0 295.1L510.0 294.7L509.0 295.2L508.0 294.8L507.0 294.7L506.0 295.5L505.0 295.2L504.0 295.4L503.0 296.2L502.0 295.1L501.0 295.5L500.0 294.8L499.0 295.1L498.0 295.1L497.0 295.6L496.0 296.2L495.0 295.7L494.0 295.0L493.0 294.5L492.0 294.8L491.0 294.8L490.0 295.5L489.0 294.9L488.0 295.6L487.0 295.1L486.0 294.9L485.0 295.1L484.0 294.5L483.0 294.6L482.0 295.9L481.0 295.9L480.0 295.4L479.0 295.0L478.0 294.8L477.0 295.6L476.0 294.9L475.0 294.8L474.0 295.5L473.0 295.0L472.0 295.0L471.0 294.8L470.0 294.7L469.0 295.6L468.0 295.6L467.0 294.9L466.0 295.1L465.0 294.9L464.0 295.1L463.0 294.8L462.0 294.7L461.0 295.4L460.0 295.4L459.0 295.2L458.0 294.9L457.0 294.5L456.0 295.0L455.0 295.7L454.0 296.1L453.0 295.5L452.0 295.1L451.0 295.9L450.0 295.9L449.0 295.5L448.0 295.7L447.0 295.1L446.0 295.0L445.0 295.4L444.0 295.5L443.0 295.7L442.0 295.5L441.0 294.9L440.0 294.5L439.0 294.6L438.0 294.7L437.0 295.5L436.0 294.7L435.0 295.3L434.0 294.8L433.0 294.5L432.0 295.5L431.0 294.6L430.0 294.4L429.0 295.5L428.0 294.7L427.0 294.5L426.0 295.2L425.0 295.1L424.0 295.2L423.0 294.6L422.0 294.6L421.0 295.5L420.0 294.6L419.0 294.9L418.0 294.7L417.0 294.8L416.0 294.5L415.0 295.0L414.0 295.0L413.0 295.5L412.0 294.8L411.0 295.1L410.0 295.0L409.0 294.8L408.0 294.7L407.0 294.9L406.0 295.3L405.0 295.6L404.0 295.1L403.0 294.5L402.0 294.6L401.0 294.5L400.0 294.6L399.0 295.1L398.0 295.7L397.0 295.5L396.0 295.0L395.0 294.5L394.0 294.2L393.0 294.6L392.0 294.3L391.0 295.1L390.0 295.2L389.0 295.2L388.0 295.2L387.0 294.1L386.0 294.3L385.0 294.3L384.0 295.0L383.0 295.6L382.0 295.3L381.0 294.6L380.0 295.3L379.0 294.6L378.0 295.0L377.0 294.5L376.0 294.9L375.0 295.0L374.0 294.7Z" fill="#14685e"/></svg>
<div class="a" style="left:372px;top:250px;width:56px;height:13px;background:#156a5e;clip-path:polygon(0 0,100% 0,47px 100%,0 100%)"></div>
<div class="t" style="left:375px;top:252px;font-size:9.5px;letter-spacing:.6px;color:#fff">Main Pad</div>
<svg class="a" style="left:918px;top:249px" width="6" height="6"><path d="M0 0h6v6z" fill="#7ff8e4"/></svg>
<div class="a" style="left:1021px;top:249px;width:519px;height:60px;background:#0cfacc"></div>
<svg class="a" style="left:0;top:249px" width="1562" height="59" viewBox="0 249 1562 59"><path d="M1023.0 261.3L1024.0 261.8L1025.0 261.7L1026.0 261.8L1027.0 261.9L1028.0 262.2L1029.0 261.7L1030.0 262.0L1031.0 261.6L1032.0 261.6L1033.0 261.5L1034.0 261.8L1035.0 262.0L1036.0 261.9L1037.0 262.3L1038.0 262.2L1039.0 261.6L1040.0 262.0L1041.0 262.4L1042.0 262.0L1043.0 262.2L1044.0 261.9L1045.0 261.6L1046.0 262.1L1047.0 261.7L1048.0 261.5L1049.0 261.3L1050.0 261.5L1051.0 261.4L1052.0 261.2L1053.0 261.6L1054.0 261.1L1055.0 261.6L1056.0 261.5L1057.0 261.6L1058.0 261.8L1059.0 262.1L1060.0 262.3L1061.0 262.1L1062.0 262.1L1063.0 262.2L1064.0 261.5L1065.0 261.7L1066.0 261.7L1067.0 261.3L1068.0 261.5L1069.0 261.6L1070.0 262.0L1071.0 262.1L1072.0 262.1L1073.0 261.5L1074.0 261.8L1075.0 261.6L1076.0 261.6L1077.0 261.5L1078.0 261.5L1079.0 261.7L1080.0 262.0L1081.0 261.6L1082.0 261.6L1083.0 261.2L1084.0 261.3L1085.0 261.2L1086.0 261.3L1087.0 261.8L1088.0 261.8L1089.0 262.2L1090.0 261.8L1091.0 262.3L1092.0 261.8L1093.0 262.1L1094.0 261.6L1095.0 261.5L1096.0 261.8L1097.0 261.7L1098.0 261.5L1099.0 261.5L1100.0 261.4L1101.0 261.1L1102.0 260.9L1103.0 261.3L1104.0 261.6L1105.0 261.8L1106.0 261.5L1107.0 261.1L1108.0 261.1L1109.0 261.5L1110.0 261.6L1111.0 261.5L1112.0 262.0L1113.0 261.4L1114.0 261.1L1115.0 260.9L1116.0 261.3L1117.0 261.6L1118.0 261.5L1119.0 262.1L1120.0 261.5L1121.0 262.0L1122.0 261.8L1123.0 261.4L1124.0 261.4L1125.0 261.6L1126.0 261.5L1127.0 261.3L1128.0 261.0L1129.0 261.1L1130.0 261.7L1131.0 261.4L1132.0 261.0L1133.0 261.4L1134.0 261.2L1135.0 261.2L1136.0 261.6L1137.0 262.0L1138.0 261.8L1139.0 261.4L1140.0 261.4L1141.0 261.8L1142.0 261.7L1143.0 262.0L1144.0 262.0L1145.0 261.7L1146.0 261.8L1147.0 262.2L1148.0 262.0L1149.0 261.9L1150.0 262.2L1151.0 262.2L1152.0 262.3L1153.0 261.9L1154.0 262.3L1155.0 262.1L1156.0 261.7L1157.0 261.4L1158.0 261.8L1159.0 262.2L1160.0 262.1L1161.0 261.8L1162.0 261.3L1163.0 261.9L1164.0 261.7L1165.0 262.0L1166.0 261.4L1167.0 261.6L1168.0 261.2L1169.0 261.5L1170.0 261.5L1171.0 261.2L1172.0 261.8L1173.0 262.0L1174.0 261.6L1175.0 261.6L1176.0 261.6L1177.0 261.2L1178.0 261.9L1179.0 261.4L1180.0 261.9L1181.0 261.8L1182.0 261.7L1183.0 261.8L1184.0 261.6L1185.0 261.6L1186.0 261.9L1187.0 261.4L1188.0 262.0L1189.0 261.4L1190.0 261.8L1191.0 262.2L1192.0 262.4L1193.0 262.3L1194.0 262.2L1195.0 262.1L1196.0 262.4L1197.0 261.8L1198.0 261.7L1199.0 261.8L1200.0 261.8L1201.0 262.1L1202.0 261.9L1203.0 262.3L1204.0 261.7L1205.0 261.3L1206.0 261.1L1207.0 261.8L1208.0 261.9L1209.0 262.1L1210.0 261.6L1211.0 261.9L1212.0 262.2L1213.0 262.0L1214.0 262.1L1215.0 261.8L1216.0 261.5L1217.0 261.2L1218.0 261.3L1219.0 261.6L1220.0 261.3L1221.0 261.3L1222.0 261.8L1223.0 262.2L1224.0 262.2L1225.0 262.4L1226.0 262.3L1227.0 261.8L1228.0 261.8L1229.0 262.1L1230.0 261.7L1231.0 261.4L1232.0 261.8L1233.0 262.2L1234.0 261.9L1235.0 261.7L1236.0 261.5L1237.0 262.0L1238.0 261.8L1239.0 261.9L1240.0 261.4L1241.0 261.6L1242.0 262.0L1243.0 261.4L1244.0 261.6L1245.0 261.9L1246.0 262.1L1247.0 261.9L1248.0 261.6L1249.0 261.1L1250.0 261.5L1251.0 262.0L1252.0 261.8L1253.0 262.1L1254.0 262.3L1255.0 262.1L1256.0 262.1L1257.0 262.1L1258.0 261.7L1259.0 261.5L1260.0 261.6L1261.0 262.0L1262.0 261.7L1263.0 261.5L1264.0 261.5L1265.0 261.6L1266.0 262.1L1267.0 261.7L1268.0 261.3L1269.0 261.9L1270.0 261.3L1271.0 261.1L1272.0 261.2L1273.0 261.6L1274.0 261.5L1275.0 261.2L1276.0 261.7L1277.0 261.4L1278.0 261.2L1279.0 261.6L1280.0 261.3L1281.0 261.4L1282.0 261.5L1283.0 261.9L1284.0 261.9L1285.0 261.8L1286.0 261.5L1287.0 261.8L1288.0 262.2L1289.0 261.8L1290.0 261.8L1291.0 261.9L1292.0 261.5L1293.0 261.6L1294.0 262.1L1295.0 261.6L1296.0 262.1L1297.0 262.3L1298.0 262.2L1299.0 261.7L1300.0 261.4L1301.0 261.2L1302.0 261.8L1303.0 261.6L1304.0 262.0L1305.0 261.5L1306.0 261.3L1307.0 261.1L1308.0 261.4L1309.0 261.2L1310.0 261.6L1311.0 261.9L1312.0 261.5L1313.0 262.0L1314.0 261.9L1315.0 261.6L1316.0 261.7L1317.0 261.8L1318.0 261.3L1319.0 261.3L1320.0 261.3L1321.0 261.9L1322.0 262.1L1323.0 262.1L1324.0 262.4L1325.0 261.9L1326.0 262.3L1327.0 262.1L1328.0 261.9L1329.0 261.4L1330.0 261.6L1331.0 261.9L1332.0 261.5L1333.0 261.9L1334.0 261.9L1335.0 261.7L1336.0 261.2L1337.0 261.5L1338.0 261.1L1339.0 261.5L1340.0 261.5L1341.0 261.8L1342.0 261.5L1343.0 261.2L1344.0 261.8L1345.0 262.2L1346.0 261.5L1347.0 262.0L1348.0 261.7L1349.0 261.4L1350.0 261.8L1351.0 261.3L1352.0 261.3L1353.0 261.8L1354.0 261.6L1355.0 261.4L1356.0 261.4L1357.0 261.7L1358.0 261.4L1359.0 261.4L1360.0 261.8L1361.0 261.8L1362.0 261.4L1363.0 261.6L1364.0 262.1L1365.0 261.7L1366.0 262.1L1367.0 261.6L1368.0 261.4L1369.0 261.7L1370.0 261.8L1371.0 262.1L1372.0 261.6L1373.0 262.0L1374.0 261.5L1375.0 261.8L1376.0 261.5L1377.0 261.5L1378.0 261.5L1379.0 261.7L1380.0 261.2L1381.0 261.3L1382.0 261.9L1383.0 262.0L1384.0 261.6L1385.0 261.6L1386.0 261.8L1387.0 261.5L1388.0 261.3L1389.0 261.3L1390.0 261.3L1391.0 261.4L1392.0 261.3L1393.0 261.9L1394.0 261.6L1395.0 261.7L1396.0 261.6L1397.0 262.0L1398.0 262.1L1399.0 261.9L1400.0 262.0L1401.0 262.3L1402.0 262.4L1403.0 262.2L1404.0 261.9L1405.0 262.1L1406.0 262.1L1407.0 261.8L1408.0 261.3L1409.0 261.8L1410.0 261.4L1411.0 261.2L1412.0 261.5L1413.0 261.6L1414.0 261.3L1415.0 261.8L1416.0 261.3L1417.0 261.2L1418.0 261.0L1419.0 261.2L1420.0 261.3L1421.0 261.3L1422.0 261.1L1423.0 261.6L1424.0 262.0L1425.0 261.9L1426.0 261.3L1427.0 262.0L1428.0 261.6L1429.0 261.3L1430.0 261.5L1431.0 261.7L1432.0 261.6L1433.0 262.1L1434.0 262.1L1435.0 262.4L1436.0 261.9L1437.0 261.6L1438.0 261.9L1439.0 261.8L1440.0 261.7L1441.0 262.1L1442.0 261.6L1443.0 261.5L1444.0 261.8L1445.0 261.3L1446.0 261.5L1447.0 261.7L1448.0 261.8L1449.0 261.8L1450.0 261.9L1451.0 261.7L1452.0 261.3L1453.0 261.3L1454.0 261.2L1455.0 261.3L1456.0 261.2L1457.0 261.1L1458.0 261.0L1459.0 260.8L1460.0 261.6L1461.0 262.0L1462.0 262.3L1463.0 262.2L1464.0 262.2L1465.0 262.5L1466.0 262.3L1467.0 262.5L1468.0 262.1L1469.0 261.5L1470.0 261.2L1471.0 261.5L1472.0 262.0L1473.0 261.6L1474.0 261.5L1475.0 262.0L1476.0 261.7L1477.0 261.9L1478.0 261.7L1479.0 262.1L1480.0 262.2L1481.0 261.5L1482.0 261.1L1483.0 261.7L1484.0 261.5L1485.0 261.2L1486.0 261.1L1487.0 261.8L1488.0 261.8L1489.0 261.9L1490.0 261.8L1491.0 261.5L1492.0 261.5L1493.0 261.2L1494.0 261.5L1495.0 262.1L1496.0 262.2L1497.0 262.0L1498.0 262.3L1499.0 262.4L1500.0 262.5L1501.0 262.1L1502.0 262.0L1503.0 262.4L1504.0 261.9L1505.0 261.7L1506.0 261.2L1507.0 261.6L1508.0 262.1L1509.0 261.7L1510.0 262.2L1511.0 261.6L1512.0 261.8L1513.0 262.2L1514.0 261.5L1515.0 261.9L1516.0 262.3L1517.0 262.2L1518.0 261.7L1519.0 261.4L1520.0 261.4L1521.0 261.2L1522.0 260.9L1523.0 261.3L1524.0 261.2L1525.0 261.4L1526.0 261.4L1527.0 261.6L1528.0 261.9L1529.0 261.8L1530.0 261.3L1531.0 261.1L1532.0 261.6L1533.0 261.7L1534.0 261.5L1535.0 262.0L1536.0 262.2L1537.0 262.1L1538.0 262.3L1538.0 266.5L1537.0 266.4L1536.0 266.7L1535.0 266.6L1534.0 268.0L1533.0 267.4L1532.0 267.3L1531.0 267.8L1530.0 268.1L1529.0 267.5L1528.0 267.4L1527.0 268.0L1526.0 267.9L1525.0 267.6L1524.0 267.3L1523.0 267.7L1522.0 267.4L1521.0 268.0L1520.0 268.1L1519.0 267.7L1518.0 267.6L1517.0 266.5L1516.0 266.4L1515.0 267.5L1514.0 267.9L1513.0 266.6L1512.0 267.1L1511.0 267.5L1510.0 267.0L1509.0 267.2L1508.0 266.5L1507.0 267.2L1506.0 268.4L1505.0 267.8L1504.0 266.6L1503.0 266.6L1502.0 267.0L1501.0 266.9L1500.0 266.4L1499.0 266.3L1498.0 266.4L1497.0 267.0L1496.0 267.0L1495.0 266.9L1494.0 267.2L1493.0 268.2L1492.0 267.3L1491.0 266.9L1490.0 267.6L1489.0 266.7L1488.0 267.2L1487.0 267.2L1486.0 268.4L1485.0 267.3L1484.0 267.7L1483.0 267.7L1482.0 268.2L1481.0 267.6L1480.0 266.9L1479.0 266.9L1478.0 267.8L1477.0 267.5L1476.0 266.8L1475.0 267.0L1474.0 267.3L1473.0 267.8L1472.0 267.2L1471.0 267.5L1470.0 268.4L1469.0 267.2L1468.0 267.0L1467.0 266.2L1466.0 266.8L1465.0 266.8L1464.0 266.5L1463.0 266.9L1462.0 266.7L1461.0 267.0L1460.0 267.2L1459.0 268.7L1458.0 267.6L1457.0 268.3L1456.0 267.9L1455.0 268.0L1454.0 267.2L1453.0 268.0L1452.0 268.3L1451.0 267.3L1450.0 266.6L1449.0 267.3L1448.0 266.7L1447.0 267.9L1446.0 267.1L1445.0 267.4L1444.0 266.7L1443.0 267.1L1442.0 267.3L1441.0 266.6L1440.0 267.1L1439.0 267.4L1438.0 266.6L1437.0 267.2L1436.0 266.9L1435.0 266.6L1434.0 267.3L1433.0 266.8L1432.0 266.9L1431.0 267.6L1430.0 267.9L1429.0 267.7L1428.0 267.6L1427.0 266.7L1426.0 267.2L1425.0 267.6L1424.0 266.7L1423.0 267.7L1422.0 267.4L1421.0 267.2L1420.0 267.2L1419.0 267.9L1418.0 268.4L1417.0 268.1L1416.0 268.1L1415.0 267.7L1414.0 267.7L1413.0 267.9L1412.0 267.5L1411.0 267.4L1410.0 268.0L1409.0 267.0L1408.0 267.3L1407.0 267.0L1406.0 266.5L1405.0 267.0L1404.0 266.6L1403.0 266.5L1402.0 267.0L1401.0 267.0L1400.0 266.5L1399.0 267.2L1398.0 266.8L1397.0 266.6L1396.0 267.6L1395.0 266.8L1394.0 266.8L1393.0 266.8L1392.0 268.2L1391.0 267.7L1390.0 267.2L1389.0 267.9L1388.0 267.1L1387.0 267.5L1386.0 267.4L1385.0 267.8L1384.0 267.5L1383.0 267.1L1382.0 267.0L1381.0 268.2L1380.0 267.8L1379.0 267.7L1378.0 267.6L1377.0 267.9L1376.0 267.6L1375.0 267.3L1374.0 267.4L1373.0 266.8L1372.0 266.9L1371.0 267.1L1370.0 266.7L1369.0 267.1L1368.0 267.4L1367.0 267.9L1366.0 267.3L1365.0 267.5L1364.0 266.7L1363.0 267.4L1362.0 267.6L1361.0 267.2L1360.0 266.8L1359.0 267.7L1358.0 267.4L1357.0 267.9L1356.0 267.6L1355.0 267.5L1354.0 267.2L1353.0 267.0L1352.0 268.1L1351.0 267.7L1350.0 266.7L1349.0 267.2L1348.0 267.6L1347.0 267.1L1346.0 267.9L1345.0 267.2L1344.0 267.4L1343.0 267.9L1342.0 268.1L1341.0 267.4L1340.0 267.9L1339.0 268.1L1338.0 268.4L1337.0 267.6L1336.0 267.4L1335.0 266.9L1334.0 267.6L1333.0 266.7L1332.0 267.2L1331.0 267.1L1330.0 267.3L1329.0 267.3L1328.0 267.4L1327.0 266.9L1326.0 266.5L1325.0 266.7L1324.0 266.3L1323.0 267.2L1322.0 266.8L1321.0 266.8L1320.0 267.9L1319.0 267.9L1318.0 267.7L1317.0 267.1L1316.0 266.9L1315.0 267.5L1314.0 267.2L1313.0 266.6L1312.0 268.0L1311.0 266.7L1310.0 267.8L1309.0 267.4L1308.0 267.8L1307.0 267.9L1306.0 268.0L1305.0 267.8L1304.0 267.0L1303.0 267.6L1302.0 267.4L1301.0 267.2L1300.0 267.1L1299.0 266.7L1298.0 266.3L1297.0 267.0L1296.0 267.3L1295.0 267.7L1294.0 267.4L1293.0 267.2L1292.0 267.3L1291.0 267.2L1290.0 267.6L1289.0 267.5L1288.0 267.0L1287.0 267.0L1286.0 267.3L1285.0 266.7L1284.0 266.9L1283.0 267.4L1282.0 267.3L1281.0 267.6L1280.0 267.4L1279.0 266.8L1278.0 267.4L1277.0 267.5L1276.0 267.6L1275.0 267.3L1274.0 267.3L1273.0 267.6L1272.0 268.4L1271.0 267.2L1270.0 268.2L1269.0 267.4L1268.0 267.6L1267.0 267.6L1266.0 266.9L1265.0 267.7L1264.0 268.0L1263.0 268.0L1262.0 266.8L1261.0 267.1L1260.0 266.9L1259.0 267.8L1258.0 267.5L1257.0 266.5L1256.0 267.1L1255.0 267.1L1254.0 266.4L1253.0 266.8L1252.0 267.0L1251.0 266.8L1250.0 267.1L1249.0 268.0L1248.0 267.3L1247.0 267.4L1246.0 267.0L1245.0 267.0L1244.0 267.6L1243.0 267.6L1242.0 266.9L1241.0 267.3L1240.0 267.7L1239.0 267.2L1238.0 267.4L1237.0 266.8L1236.0 267.4L1235.0 267.4L1234.0 267.3L1233.0 266.6L1232.0 267.6L1231.0 268.0L1230.0 267.7L1229.0 267.0L1228.0 267.2L1227.0 267.6L1226.0 266.4L1225.0 266.7L1224.0 267.2L1223.0 266.8L1222.0 266.7L1221.0 268.0L1220.0 268.2L1219.0 267.1L1218.0 267.2L1217.0 268.0L1216.0 267.5L1215.0 267.2L1214.0 266.9L1213.0 266.6L1212.0 267.3L1211.0 266.7L1210.0 267.9L1209.0 266.7L1208.0 266.6L1207.0 267.7L1206.0 267.6L1205.0 267.6L1204.0 267.0L1203.0 267.1L1202.0 267.0L1201.0 267.0L1200.0 267.6L1199.0 267.0L1198.0 266.9L1197.0 267.5L1196.0 266.5L1195.0 266.6L1194.0 266.4L1193.0 266.5L1192.0 266.9L1191.0 267.1L1190.0 267.3L1189.0 268.1L1188.0 267.0L1187.0 267.1L1186.0 267.3L1185.0 267.0L1184.0 267.4L1183.0 267.4L1182.0 267.5L1181.0 267.1L1180.0 266.7L1179.0 267.5L1178.0 267.3L1177.0 268.1L1176.0 267.2L1175.0 267.4L1174.0 267.2L1173.0 267.5L1172.0 266.8L1171.0 267.2L1170.0 267.7L1169.0 268.1L1168.0 268.0L1167.0 267.6L1166.0 268.2L1165.0 266.9L1164.0 267.6L1163.0 266.8L1162.0 268.2L1161.0 267.0L1160.0 266.5L1159.0 266.7L1158.0 267.6L1157.0 267.6L1156.0 267.2L1155.0 266.6L1154.0 266.7L1153.0 267.3L1152.0 266.8L1151.0 266.6L1150.0 267.0L1149.0 266.7L1148.0 266.9L1147.0 267.0L1146.0 267.5L1145.0 267.1L1144.0 266.8L1143.0 266.9L1142.0 267.7L1141.0 267.4L1140.0 267.1L1139.0 267.2L1138.0 267.2L1137.0 267.2L1136.0 267.3L1135.0 267.8L1134.0 268.2L1133.0 267.3L1132.0 267.5L1131.0 267.7L1130.0 266.9L1129.0 267.5L1128.0 268.6L1127.0 267.2L1126.0 268.0L1125.0 267.1L1124.0 268.0L1123.0 268.2L1122.0 266.9L1121.0 267.0L1120.0 267.8L1119.0 266.7L1118.0 267.3L1117.0 267.1L1116.0 267.9L1115.0 267.9L1114.0 267.8L1113.0 267.0L1112.0 267.2L1111.0 267.8L1110.0 267.2L1109.0 267.8L1108.0 268.3L1107.0 268.1L1106.0 267.4L1105.0 267.3L1104.0 266.9L1103.0 267.4L1102.0 267.6L1101.0 267.8L1100.0 268.1L1099.0 267.2L1098.0 267.2L1097.0 267.1L1096.0 266.9L1095.0 267.5L1094.0 267.7L1093.0 267.0L1092.0 267.5L1091.0 266.6L1090.0 266.8L1089.0 266.6L1088.0 267.6L1087.0 267.8L1086.0 268.0L1085.0 268.5L1084.0 267.4L1083.0 267.2L1082.0 267.1L1081.0 267.4L1080.0 267.3L1079.0 267.1L1078.0 267.7L1077.0 267.8L1076.0 266.9L1075.0 267.5L1074.0 266.8L1073.0 267.6L1072.0 266.7L1071.0 266.8L1070.0 266.8L1069.0 267.6L1068.0 267.5L1067.0 267.4L1066.0 267.6L1065.0 267.5L1064.0 267.3L1063.0 266.8L1062.0 267.2L1061.0 266.9L1060.0 266.7L1059.0 266.9L1058.0 267.3L1057.0 267.2L1056.0 267.5L1055.0 267.0L1054.0 267.4L1053.0 267.5L1052.0 267.6L1051.0 267.5L1050.0 267.9L1049.0 268.0L1048.0 267.8L1047.0 267.3L1046.0 266.6L1045.0 267.7L1044.0 267.4L1043.0 266.8L1042.0 267.2L1041.0 266.4L1040.0 266.8L1039.0 267.0L1038.0 267.2L1037.0 267.1L1036.0 266.8L1035.0 267.0L1034.0 266.9L1033.0 267.5L1032.0 267.7L1031.0 267.1L1030.0 267.2L1029.0 267.8L1028.0 267.3L1027.0 267.0L1026.0 266.7L1025.0 267.3L1024.0 267.0L1023.0 267.9ZM1023.0 289.7L1024.0 289.3L1025.0 289.3L1026.0 289.1L1027.0 288.9L1028.0 289.6L1029.0 289.5L1030.0 289.6L1031.0 289.2L1032.0 289.1L1033.0 289.7L1034.0 290.0L1035.0 290.1L1036.0 290.2L1037.0 290.0L1038.0 290.0L1039.0 289.6L1040.0 290.0L1041.0 289.7L1042.0 289.5L1043.0 289.4L1044.0 289.0L1045.0 289.6L1046.0 289.5L1047.0 289.2L1048.0 289.5L1049.0 289.9L1050.0 289.6L1051.0 289.9L1052.0 289.4L1053.0 289.6L1054.0 289.5L1055.0 289.6L1056.0 289.2L1057.0 289.8L1058.0 289.6L1059.0 289.6L1060.0 289.4L1061.0 289.1L1062.0 289.5L1063.0 289.4L1064.0 289.3L1065.0 289.6L1066.0 289.5L1067.0 290.0L1068.0 290.1L1069.0 289.6L1070.0 289.9L1071.0 289.8L1072.0 290.2L1073.0 290.1L1074.0 289.9L1075.0 289.6L1076.0 289.4L1077.0 289.4L1078.0 289.1L1079.0 289.9L1080.0 289.8L1081.0 290.0L1082.0 290.0L1083.0 289.4L1084.0 289.6L1085.0 289.8L1086.0 289.9L1087.0 290.0L1088.0 289.9L1089.0 289.7L1090.0 289.7L1091.0 289.7L1092.0 289.8L1093.0 289.5L1094.0 289.9L1095.0 289.7L1096.0 289.8L1097.0 289.6L1098.0 289.2L1099.0 289.5L1100.0 289.9L1101.0 289.7L1102.0 289.3L1103.0 289.8L1104.0 289.5L1105.0 289.4L1106.0 289.5L1107.0 289.3L1108.0 289.2L1109.0 289.0L1110.0 289.6L1111.0 289.2L1112.0 289.6L1113.0 289.4L1114.0 289.9L1115.0 289.5L1116.0 289.1L1117.0 289.7L1118.0 289.5L1119.0 289.8L1120.0 289.4L1121.0 289.9L1122.0 289.4L1123.0 289.5L1124.0 289.1L1125.0 289.3L1126.0 289.0L1127.0 289.1L1128.0 289.0L1129.0 289.0L1130.0 289.4L1131.0 289.5L1132.0 289.4L1133.0 289.2L1134.0 289.7L1135.0 290.1L1136.0 289.6L1137.0 289.2L1138.0 289.0L1139.0 289.3L1140.0 289.6L1141.0 289.4L1142.0 289.5L1143.0 290.1L1144.0 290.1L1145.0 289.5L1146.0 289.9L1147.0 289.4L1148.0 289.7L1149.0 290.1L1150.0 289.7L1151.0 289.9L1152.0 289.7L1153.0 289.9L1154.0 289.4L1155.0 289.9L1156.0 289.8L1157.0 289.6L1158.0 289.8L1159.0 290.1L1160.0 290.2L1161.0 289.6L1162.0 289.8L1163.0 290.0L1164.0 289.5L1165.0 289.7L1166.0 289.6L1167.0 289.5L1168.0 289.4L1169.0 289.2L1170.0 289.7L1171.0 289.4L1172.0 289.6L1173.0 289.5L1174.0 289.7L1175.0 290.0L1176.0 290.3L1177.0 289.7L1178.0 289.3L1179.0 289.5L1180.0 289.4L1181.0 289.7L1182.0 289.6L1183.0 289.7L1184.0 290.1L1185.0 289.7L1186.0 289.9L1187.0 290.0L1188.0 289.7L1189.0 290.2L1190.0 290.4L1191.0 290.6L1192.0 290.1L1193.0 290.2L1194.0 289.5L1195.0 289.8L1196.0 289.7L1197.0 289.7L1198.0 290.1L1199.0 289.6L1200.0 289.9L1201.0 289.9L1202.0 290.3L1203.0 289.8L1204.0 289.4L1205.0 289.8L1206.0 289.3L1207.0 289.5L1208.0 290.0L1209.0 290.2L1210.0 290.1L1211.0 290.2L1212.0 289.6L1213.0 289.7L1214.0 289.6L1215.0 289.7L1216.0 290.1L1217.0 290.1L1218.0 289.9L1219.0 289.4L1220.0 289.7L1221.0 289.5L1222.0 289.7L1223.0 289.5L1224.0 289.6L1225.0 289.6L1226.0 289.6L1227.0 290.1L1228.0 289.8L1229.0 289.6L1230.0 289.2L1231.0 289.9L1232.0 290.2L1233.0 289.8L1234.0 289.8L1235.0 289.8L1236.0 289.6L1237.0 289.3L1238.0 289.7L1239.0 289.9L1240.0 289.6L1241.0 289.6L1242.0 289.4L1243.0 289.4L1244.0 289.2L1245.0 289.0L1246.0 289.4L1247.0 289.2L1248.0 289.1L1249.0 289.7L1250.0 289.7L1251.0 289.8L1252.0 289.8L1253.0 289.4L1254.0 289.5L1255.0 289.9L1256.0 290.3L1257.0 290.3L1258.0 289.7L1259.0 289.4L1260.0 289.0L1261.0 289.5L1262.0 289.1L1263.0 289.5L1264.0 289.3L1265.0 289.0L1266.0 289.0L1267.0 289.3L1268.0 289.7L1269.0 290.0L1270.0 289.7L1271.0 289.4L1272.0 289.4L1273.0 289.1L1274.0 289.8L1275.0 289.4L1276.0 289.8L1277.0 289.5L1278.0 290.0L1279.0 290.1L1280.0 289.6L1281.0 289.2L1282.0 288.9L1283.0 289.0L1284.0 289.3L1285.0 289.2L1286.0 289.2L1287.0 289.3L1288.0 289.0L1289.0 289.8L1290.0 289.5L1291.0 290.0L1292.0 289.9L1293.0 290.1L1294.0 290.1L1295.0 289.5L1296.0 290.0L1297.0 290.1L1298.0 289.6L1299.0 290.1L1300.0 289.6L1301.0 289.2L1302.0 289.1L1303.0 289.1L1304.0 289.7L1305.0 290.1L1306.0 289.5L1307.0 289.8L1308.0 289.6L1309.0 289.6L1310.0 289.2L1311.0 289.4L1312.0 289.4L1313.0 289.8L1314.0 289.7L1315.0 290.2L1316.0 289.9L1317.0 289.4L1318.0 289.1L1319.0 289.9L1320.0 289.8L1321.0 289.3L1322.0 289.1L1323.0 289.5L1324.0 289.7L1325.0 290.2L1326.0 289.5L1327.0 289.4L1328.0 289.1L1329.0 289.7L1330.0 289.7L1331.0 289.8L1332.0 289.6L1333.0 289.3L1334.0 289.1L1335.0 288.9L1336.0 289.0L1337.0 288.9L1338.0 289.4L1339.0 289.1L1340.0 289.7L1341.0 289.3L1342.0 289.2L1343.0 289.1L1344.0 288.9L1345.0 289.6L1346.0 289.3L1347.0 289.1L1348.0 288.9L1349.0 288.8L1350.0 289.5L1351.0 289.9L1352.0 289.7L1353.0 289.9L1354.0 289.4L1355.0 289.7L1356.0 289.8L1357.0 289.9L1358.0 289.3L1359.0 289.4L1360.0 289.9L1361.0 290.0L1362.0 290.2L1363.0 290.1L1364.0 289.9L1365.0 290.3L1366.0 290.0L1367.0 289.8L1368.0 290.0L1369.0 289.4L1370.0 289.2L1371.0 288.9L1372.0 289.7L1373.0 290.0L1374.0 289.9L1375.0 290.1L1376.0 289.8L1377.0 289.6L1378.0 290.1L1379.0 289.5L1380.0 289.5L1381.0 289.3L1382.0 288.9L1383.0 289.1L1384.0 289.2L1385.0 289.4L1386.0 289.7L1387.0 289.8L1388.0 290.0L1389.0 289.4L1390.0 289.6L1391.0 290.1L1392.0 289.8L1393.0 289.4L1394.0 289.1L1395.0 289.0L1396.0 289.5L1397.0 289.3L1398.0 289.1L1399.0 289.1L1400.0 289.2L1401.0 289.8L1402.0 290.1L1403.0 290.2L1404.0 290.1L1405.0 290.2L1406.0 290.3L1407.0 290.2L1408.0 289.6L1409.0 289.3L1410.0 289.8L1411.0 289.5L1412.0 289.2L1413.0 289.0L1414.0 289.1L1415.0 288.9L1416.0 289.7L1417.0 289.2L1418.0 289.3L1419.0 289.1L1420.0 289.0L1421.0 289.1L1422.0 289.0L1423.0 289.7L1424.0 289.8L1425.0 289.3L1426.0 289.3L1427.0 289.3L1428.0 289.5L1429.0 290.1L1430.0 289.8L1431.0 289.8L1432.0 289.5L1433.0 289.3L1434.0 289.1L1435.0 289.4L1436.0 289.2L1437.0 289.8L1438.0 289.3L1439.0 289.1L1440.0 288.9L1441.0 289.2L1442.0 289.7L1443.0 289.8L1444.0 290.2L1445.0 290.5L1446.0 290.4L1447.0 290.1L1448.0 290.0L1449.0 290.0L1450.0 289.4L1451.0 289.4L1452.0 289.6L1453.0 289.5L1454.0 289.7L1455.0 289.6L1456.0 289.2L1457.0 289.6L1458.0 289.7L1459.0 289.8L1460.0 289.3L1461.0 289.1L1462.0 289.0L1463.0 288.9L1464.0 288.8L1465.0 289.5L1466.0 289.4L1467.0 289.5L1468.0 289.8L1469.0 290.0L1470.0 289.8L1471.0 289.4L1472.0 290.0L1473.0 289.7L1474.0 290.1L1475.0 289.9L1476.0 289.4L1477.0 289.3L1478.0 289.2L1479.0 289.7L1480.0 289.6L1481.0 290.0L1482.0 289.7L1483.0 290.2L1484.0 290.3L1485.0 290.2L1486.0 290.3L1487.0 289.9L1488.0 289.9L1489.0 289.9L1490.0 290.0L1491.0 290.3L1492.0 289.8L1493.0 289.6L1494.0 289.6L1495.0 289.9L1496.0 290.2L1497.0 289.8L1498.0 290.1L1499.0 290.4L1500.0 289.6L1501.0 289.6L1502.0 289.9L1503.0 289.9L1504.0 289.8L1505.0 289.9L1506.0 289.4L1507.0 289.3L1508.0 289.1L1509.0 288.9L1510.0 289.6L1511.0 289.2L1512.0 289.6L1513.0 290.0L1514.0 289.8L1515.0 289.5L1516.0 289.7L1517.0 289.8L1518.0 289.8L1519.0 289.7L1520.0 289.3L1521.0 289.5L1522.0 289.7L1523.0 289.3L1524.0 290.0L1525.0 290.1L1526.0 290.2L1527.0 289.6L1528.0 290.0L1529.0 290.1L1530.0 290.4L1531.0 290.2L1532.0 289.6L1533.0 289.4L1534.0 289.5L1535.0 289.8L1536.0 290.2L1537.0 290.3L1538.0 290.2L1538.0 295.2L1537.0 294.9L1536.0 295.2L1535.0 295.8L1534.0 295.1L1533.0 295.6L1532.0 295.9L1531.0 294.9L1530.0 294.9L1529.0 294.5L1528.0 294.8L1527.0 295.0L1526.0 295.2L1525.0 294.8L1524.0 294.7L1523.0 296.0L1522.0 295.3L1521.0 295.2L1520.0 295.8L1519.0 295.1L1518.0 295.6L1517.0 295.3L1516.0 295.1L1515.0 296.0L1514.0 295.2L1513.0 294.6L1512.0 294.9L1511.0 295.5L1510.0 294.9L1509.0 296.0L1508.0 296.1L1507.0 296.3L1506.0 295.6L1505.0 295.3L1504.0 295.3L1503.0 294.9L1502.0 295.1L1501.0 295.5L1500.0 295.3L1499.0 294.7L1498.0 294.8L1497.0 295.3L1496.0 294.7L1495.0 294.7L1494.0 295.5L1493.0 295.2L1492.0 295.4L1491.0 294.3L1490.0 294.5L1489.0 295.2L1488.0 295.1L1487.0 295.0L1486.0 294.9L1485.0 294.6L1484.0 294.5L1483.0 294.4L1482.0 295.6L1481.0 294.9L1480.0 295.0L1479.0 295.4L1478.0 295.8L1477.0 295.7L1476.0 296.2L1475.0 295.2L1474.0 294.6L1473.0 295.6L1472.0 295.1L1471.0 295.7L1470.0 295.6L1469.0 294.7L1468.0 294.7L1467.0 295.9L1466.0 296.0L1465.0 295.5L1464.0 295.8L1463.0 295.4L1462.0 295.5L1461.0 296.2L1460.0 296.0L1459.0 294.7L1458.0 295.7L1457.0 295.2L1456.0 295.8L1455.0 295.5L1454.0 295.5L1453.0 295.6L1452.0 295.8L1451.0 295.0L1450.0 295.1L1449.0 295.2L1448.0 294.6L1447.0 295.2L1446.0 294.2L1445.0 294.7L1444.0 295.1L1443.0 295.2L1442.0 295.5L1441.0 295.7L1440.0 296.0L1439.0 295.9L1438.0 295.1L1437.0 294.7L1436.0 295.6L1435.0 295.4L1434.0 296.4L1433.0 296.1L1432.0 295.7L1431.0 295.4L1430.0 295.2L1429.0 295.3L1428.0 295.1L1427.0 295.5L1426.0 296.1L1425.0 296.3L1424.0 294.8L1423.0 295.3L1422.0 295.7L1421.0 295.7L1420.0 295.6L1419.0 295.3L1418.0 296.2L1417.0 295.7L1416.0 295.8L1415.0 296.7L1414.0 296.3L1413.0 296.1L1412.0 296.3L1411.0 295.3L1410.0 294.9L1409.0 295.7L1408.0 294.9L1407.0 294.9L1406.0 295.1L1405.0 295.2L1404.0 294.6L1403.0 294.7L1402.0 294.8L1401.0 294.8L1400.0 295.2L1399.0 295.5L1398.0 296.4L1397.0 295.6L1396.0 295.4L1395.0 296.2L1394.0 296.5L1393.0 295.3L1392.0 295.3L1391.0 294.6L1390.0 295.0L1389.0 295.9L1388.0 295.5L1387.0 295.2L1386.0 295.7L1385.0 295.6L1384.0 296.4L1383.0 295.8L1382.0 296.4L1381.0 295.3L1380.0 295.5L1379.0 296.0L1378.0 294.7L1377.0 295.7L1376.0 295.6L1375.0 294.6L1374.0 295.2L1373.0 295.4L1372.0 294.8L1371.0 296.7L1370.0 295.5L1369.0 296.1L1368.0 295.0L1367.0 295.3L1366.0 295.1L1365.0 294.4L1364.0 294.7L1363.0 295.2L1362.0 294.7L1361.0 295.3L1360.0 295.2L1359.0 295.4L1358.0 296.1L1357.0 295.3L1356.0 295.5L1355.0 295.7L1354.0 295.9L1353.0 295.1L1352.0 295.9L1351.0 295.3L1350.0 295.5L1349.0 295.7L1348.0 296.4L1347.0 295.3L1346.0 295.7L1345.0 295.3L1344.0 295.5L1343.0 295.4L1342.0 296.3L1341.0 295.1L1340.0 295.7L1339.0 295.4L1338.0 295.1L1337.0 296.1L1336.0 295.6L1335.0 295.8L1334.0 296.5L1333.0 295.4L1332.0 295.7L1331.0 295.1L1330.0 294.7L1329.0 295.0L1328.0 295.5L1327.0 295.5L1326.0 295.1L1325.0 294.4L1324.0 294.8L1323.0 295.8L1322.0 295.8L1321.0 295.1L1320.0 295.3L1319.0 295.1L1318.0 296.4L1317.0 295.2L1316.0 294.9L1315.0 294.4L1314.0 295.2L1313.0 295.5L1312.0 295.2L1311.0 295.3L1310.0 295.2L1309.0 295.2L1308.0 294.9L1307.0 295.7L1306.0 295.8L1305.0 294.8L1304.0 295.8L1303.0 296.2L1302.0 296.4L1301.0 295.9L1300.0 295.0L1299.0 294.6L1298.0 295.2L1297.0 294.6L1296.0 295.1L1295.0 296.0L1294.0 294.6L1293.0 294.6L1292.0 295.6L1291.0 294.8L1290.0 295.7L1289.0 294.9L1288.0 295.4L1287.0 295.1L1286.0 295.7L1285.0 295.6L1284.0 296.4L1283.0 295.8L1282.0 295.5L1281.0 295.5L1280.0 295.9L1279.0 294.4L1278.0 295.1L1277.0 295.0L1276.0 295.5L1275.0 295.9L1274.0 295.2L1273.0 296.1L1272.0 296.0L1271.0 295.5L1270.0 295.4L1269.0 295.3L1268.0 295.5L1267.0 296.2L1266.0 296.2L1265.0 295.6L1264.0 295.2L1263.0 295.2L1262.0 296.6L1261.0 295.3L1260.0 296.6L1259.0 295.8L1258.0 295.7L1257.0 294.6L1256.0 294.4L1255.0 294.6L1254.0 295.2L1253.0 296.2L1252.0 295.2L1251.0 294.8L1250.0 295.6L1249.0 295.0L1248.0 295.5L1247.0 296.0L1246.0 295.2L1245.0 296.4L1244.0 295.5L1243.0 295.3L1242.0 295.7L1241.0 295.9L1240.0 295.9L1239.0 295.1L1238.0 295.7L1237.0 295.4L1236.0 295.3L1235.0 295.7L1234.0 295.7L1233.0 295.2L1232.0 294.7L1231.0 294.9L1230.0 295.5L1229.0 294.8L1228.0 295.5L1227.0 295.3L1226.0 295.0L1225.0 295.1L1224.0 294.9L1223.0 295.7L1222.0 294.9L1221.0 295.1L1220.0 295.8L1219.0 295.3L1218.0 295.2L1217.0 294.4L1216.0 295.0L1215.0 294.9L1214.0 295.9L1213.0 295.6L1212.0 295.4L1211.0 294.5L1210.0 295.1L1209.0 294.5L1208.0 295.3L1207.0 296.0L1206.0 296.2L1205.0 295.6L1204.0 295.5L1203.0 295.6L1202.0 294.7L1201.0 295.4L1200.0 295.4L1199.0 295.6L1198.0 295.2L1197.0 295.0L1196.0 295.7L1195.0 295.1L1194.0 295.4L1193.0 294.5L1192.0 295.0L1191.0 294.6L1190.0 294.5L1189.0 294.4L1188.0 295.3L1187.0 294.7L1186.0 295.6L1185.0 295.6L1184.0 294.6L1183.0 295.7L1182.0 295.4L1181.0 295.4L1180.0 295.3L1179.0 295.6L1178.0 295.8L1177.0 295.3L1176.0 294.5L1175.0 294.7L1174.0 294.7L1173.0 295.3L1172.0 295.0L1171.0 295.4L1170.0 295.3L1169.0 295.3L1168.0 295.2L1167.0 295.1L1166.0 295.7L1165.0 295.5L1164.0 296.0L1163.0 294.7L1162.0 295.6L1161.0 295.0L1160.0 294.5L1159.0 295.2L1158.0 295.1L1157.0 295.9L1156.0 295.6L1155.0 294.8L1154.0 296.2L1153.0 294.8L1152.0 295.2L1151.0 295.2L1150.0 295.3L1149.0 295.0L1148.0 295.6L1147.0 296.0L1146.0 295.4L1145.0 295.7L1144.0 295.1L1143.0 294.7L1142.0 295.8L1141.0 295.6L1140.0 295.9L1139.0 296.3L1138.0 296.1L1137.0 295.4L1136.0 294.8L1135.0 294.8L1134.0 295.6L1133.0 296.3L1132.0 295.5L1131.0 295.6L1130.0 295.6L1129.0 296.3L1128.0 296.0L1127.0 296.3L1126.0 295.9L1125.0 295.5L1124.0 295.8L1123.0 295.1L1122.0 295.6L1121.0 295.1L1120.0 295.9L1119.0 294.9L1118.0 296.1L1117.0 295.3L1116.0 296.0L1115.0 295.6L1114.0 295.0L1113.0 295.8L1112.0 295.0L1111.0 296.1L1110.0 295.2L1109.0 295.8L1108.0 295.5L1107.0 295.5L1106.0 295.5L1105.0 295.2L1104.0 294.9L1103.0 295.3L1102.0 295.2L1101.0 295.2L1100.0 295.3L1099.0 295.9L1098.0 296.4L1097.0 294.8L1096.0 295.6L1095.0 295.7L1094.0 294.8L1093.0 295.9L1092.0 295.7L1091.0 295.5L1090.0 295.2L1089.0 295.5L1088.0 295.0L1087.0 294.8L1086.0 294.8L1085.0 294.9L1084.0 294.9L1083.0 295.3L1082.0 294.9L1081.0 294.9L1080.0 295.4L1079.0 295.4L1078.0 296.5L1077.0 295.7L1076.0 295.6L1075.0 295.1L1074.0 295.1L1073.0 294.9L1072.0 294.8L1071.0 295.4L1070.0 294.6L1069.0 295.4L1068.0 295.4L1067.0 295.2L1066.0 295.2L1065.0 295.8L1064.0 295.5L1063.0 295.8L1062.0 294.9L1061.0 296.5L1060.0 295.7L1059.0 294.9L1058.0 295.1L1057.0 295.3L1056.0 296.1L1055.0 295.3L1054.0 295.0L1053.0 295.0L1052.0 296.1L1051.0 295.3L1050.0 295.6L1049.0 295.5L1048.0 295.4L1047.0 296.4L1046.0 295.4L1045.0 295.9L1044.0 296.2L1043.0 295.9L1042.0 295.6L1041.0 295.8L1040.0 294.5L1039.0 295.1L1038.0 294.7L1037.0 295.4L1036.0 294.5L1035.0 294.8L1034.0 295.1L1033.0 295.7L1032.0 296.5L1031.0 296.2L1030.0 295.9L1029.0 295.9L1028.0 295.9L1027.0 295.6L1026.0 295.5L1025.0 295.6L1024.0 295.1L1023.0 295.1Z" fill="#0e2c34"/></svg>
<div class="a" style="left:1021px;top:250px;width:56px;height:13px;background:#156a5e;clip-path:polygon(0 0,100% 0,47px 100%,0 100%)"></div>
<div class="t" style="left:1024px;top:252px;font-size:9.5px;letter-spacing:.6px;color:#fff">Main Pad</div>
<div class="a" style="left:1276px;top:251px;width:7px;height:7px;background:#e8f4f8"></div>
<svg class="a" style="left:1533px;top:249px" width="7" height="7"><path d="M0 0h7v7z" fill="#dff"/></svg>
<svg class="a" style="left:1021px;top:249px" width="5" height="5"><path d="M0 0h5L0 5z" fill="#dff"/></svg>
<div class="a" style="left:372px;top:309px;width:519px;height:60px;background:#16fafa;border-top:1px solid #1a8a8a;border-left:1px solid #30c8cc"></div>
<div class="a" style="left:372px;top:310px;width:66px;height:13px;background:#14686a;clip-path:polygon(0 0,100% 0,57px 100%,0 100%)"></div>
<div class="t" style="left:375px;top:312px;font-size:9.5px;letter-spacing:.6px;color:#fff">Main Pad 2</div>
<div class="a" style="left:891px;top:309px;width:519px;height:60px;background:#16fafa;border-top:1px solid #1a8a8a;border-left:1px solid #30c8cc"></div>
<div class="a" style="left:891px;top:310px;width:66px;height:13px;background:#14686a;clip-path:polygon(0 0,100% 0,57px 100%,0 100%)"></div>
<div class="t" style="left:894px;top:312px;font-size:9.5px;letter-spacing:.6px;color:#fff">Main Pad 2</div>
<svg class="a" style="left:0;top:309px" width="1562" height="60" viewBox="0 309 1562 60"><path d="M372.0 329.0H404.4M404.4 327.5H436.8M372.0 334.0H404.4M404.4 332.0H436.8M372.0 338.5H436.8M436.8 332.0H469.3M469.3 333.5H501.7M436.8 333.0H501.7M436.8 335.5H469.3M469.3 337.0H501.7M501.7 330.5H534.1M534.1 328.5H566.5M501.7 333.0H566.5M501.7 338.5H566.5M566.5 326.0H631.4M566.5 333.0H631.4M566.5 335.5H631.4M631.4 332.0H663.8M663.8 330.0H696.2M631.4 334.0H696.2M631.4 337.0H663.8M663.8 338.5H696.2M696.2 327.5H728.6M728.6 325.5H761.0M696.2 333.0H728.6M728.6 334.5H761.0M696.2 337.0H728.6M728.6 335.0H761.0M761.0 329.0H825.9M761.0 333.0H825.9M761.0 337.0H793.5M793.5 335.0H825.9M825.9 329.0H890.7M825.9 334.0H890.7M825.9 340.0H890.7" stroke="#1a6268" stroke-width="1" fill="none"/><path d="M891.0 329.0H923.4M923.4 327.5H955.8M891.0 334.0H923.4M923.4 332.0H955.8M891.0 338.5H955.8M955.8 332.0H988.3M988.3 333.5H1020.7M955.8 333.0H1020.7M955.8 335.5H988.3M988.3 337.0H1020.7M1020.7 330.5H1053.1M1053.1 328.5H1085.5M1020.7 333.0H1085.5M1020.7 338.5H1085.5M1085.5 326.0H1150.4M1085.5 333.0H1150.4M1085.5 335.5H1150.4M1150.4 332.0H1182.8M1182.8 330.0H1215.2M1150.4 334.0H1215.2M1150.4 337.0H1182.8M1182.8 338.5H1215.2M1215.2 327.5H1247.6M1247.6 325.5H1280.0M1215.2 333.0H1247.6M1247.6 334.5H1280.0M1215.2 337.0H1247.6M1247.6 335.0H1280.0M1280.0 329.0H1344.9M1280.0 333.0H1344.9M1280.0 337.0H1312.5M1312.5 335.0H1344.9M1344.9 329.0H1409.7M1344.9 334.0H1409.7M1344.9 340.0H1409.7" stroke="#1a6268" stroke-width="1" fill="none"/></svg>
<div class="a" style="left:372px;top:369px;width:519px;height:60px;background:#16fafa;border-top:1px solid #1a8a8a;border-left:1px solid #30c8cc"></div>
<div class="a" style="left:372px;top:370px;width:66px;height:13px;background:#14686a;clip-path:polygon(0 0,100% 0,57px 100%,0 100%)"></div>
<div class="t" style="left:375px;top:372px;font-size:9.5px;letter-spacing:.6px;color:#fff">Main Pad 3</div>
<div class="a" style="left:891px;top:369px;width:519px;height:60px;background:#16fafa;border-top:1px solid #1a8a8a;border-left:1px solid #30c8cc"></div>
<div class="a" style="left:891px;top:370px;width:66px;height:13px;background:#14686a;clip-path:polygon(0 0,100% 0,57px 100%,0 100%)"></div>
<div class="t" style="left:894px;top:372px;font-size:9.5px;letter-spacing:.6px;color:#fff">Main Pad 3</div>
<svg class="a" style="left:0;top:369px" width="1562" height="60" viewBox="0 369 1562 60"><path d="M372.0 394.0H404.4M404.4 395.5H436.8M372.0 397.0H404.4M404.4 395.0H436.8M372.0 397.0H436.8M436.8 394.0H501.7M436.8 397.0H469.3M469.3 395.0H501.7M436.8 400.0H501.7M501.7 394.0H566.5M501.7 398.0H566.5M501.7 401.5H566.5M566.5 392.5H631.4M566.5 397.0H631.4M566.5 400.0H598.9M598.9 398.0H631.4M631.4 392.5H696.2M631.4 398.0H696.2M631.4 403.0H663.8M663.8 401.5H696.2M696.2 397.0H728.6M728.6 395.0H761.0M696.2 397.0H728.6M728.6 398.5H761.0M696.2 403.0H728.6M728.6 401.5H761.0M761.0 391.0H825.9M761.0 397.0H793.5M793.5 398.5H825.9M761.0 398.5H793.5M793.5 397.0H825.9M825.9 397.0H858.3M858.3 395.5H890.7M825.9 397.0H890.7M825.9 400.0H858.3M858.3 398.5H890.7" stroke="#1a6268" stroke-width="1" fill="none"/><path d="M891.0 394.0H923.4M923.4 395.5H955.8M891.0 397.0H923.4M923.4 395.0H955.8M891.0 397.0H955.8M955.8 394.0H1020.7M955.8 397.0H988.3M988.3 395.0H1020.7M955.8 400.0H1020.7M1020.7 394.0H1085.5M1020.7 398.0H1085.5M1020.7 401.5H1085.5M1085.5 392.5H1150.4M1085.5 397.0H1150.4M1085.5 400.0H1117.9M1117.9 398.0H1150.4M1150.4 392.5H1215.2M1150.4 398.0H1215.2M1150.4 403.0H1182.8M1182.8 401.5H1215.2M1215.2 397.0H1247.6M1247.6 395.0H1280.0M1215.2 397.0H1247.6M1247.6 398.5H1280.0M1215.2 403.0H1247.6M1247.6 401.5H1280.0M1280.0 391.0H1344.9M1280.0 397.0H1312.5M1312.5 398.5H1344.9M1280.0 398.5H1312.5M1312.5 397.0H1344.9M1344.9 397.0H1377.3M1377.3 395.5H1409.7M1344.9 397.0H1409.7M1344.9 400.0H1377.3M1377.3 398.5H1409.7" stroke="#1a6268" stroke-width="1" fill="none"/></svg>
<svg class="a" style="left:0;top:0" width="0" height="0"><defs><path id="ld" d="M892.0 29.0v1.400M892.0 33.0v1.400M892.0 37.0v1.400M894.0 30.0v1.400M894.0 34.0v1.400M896.1 31.0v1.400M896.1 35.0v1.400M896.1 28.0v1.400M898.1 30.0v1.400M898.1 34.0v1.400M900.1 32.0v1.400M900.1 36.0v1.400M900.1 40.0v1.400M900.1 29.0v1.400M902.1 30.0v1.400M902.1 34.0v1.400M904.2 31.0v1.400M904.2 35.0v1.400M906.2 30.0v1.400M906.2 34.0v1.400M906.2 27.0v1.400M908.2 29.0v1.400M908.2 33.0v1.400M908.2 37.0v1.400M910.2 30.0v1.400M910.2 34.0v1.400M912.3 31.0v1.400M912.3 35.0v1.400M912.3 28.0v1.400M914.3 30.0v1.400M914.3 34.0v1.400M916.3 32.0v1.400M916.3 36.0v1.400M916.3 40.0v1.400M918.3 30.0v1.400M918.3 34.0v1.400M920.4 31.0v1.400M920.4 35.0v1.400M922.4 30.0v1.400M922.4 34.0v1.400M922.4 27.0v1.400M924.4 28.0v1.400M924.4 32.0v1.400M924.4 36.0v1.400M924.4 25.0v1.400M926.4 29.0v1.400M926.4 33.0v1.400M926.4 26.0v1.400M928.5 30.0v1.400M928.5 34.0v1.400M930.5 29.0v1.400M930.5 33.0v1.400M932.5 31.0v1.400M932.5 35.0v1.400M932.5 39.0v1.400M934.6 29.0v1.400M934.6 33.0v1.400M936.6 30.0v1.400M936.6 34.0v1.400M938.6 29.0v1.400M938.6 33.0v1.400M940.6 29.0v1.400M940.6 33.0v1.400M940.6 37.0v1.400M940.6 26.0v1.400M942.7 30.0v1.400M942.7 34.0v1.400M944.7 31.0v1.400M944.7 35.0v1.400M946.7 30.0v1.400M946.7 34.0v1.400M948.7 32.0v1.400M948.7 36.0v1.400M948.7 40.0v1.400M950.8 30.0v1.400M950.8 34.0v1.400M950.8 27.0v1.400M952.8 31.0v1.400M952.8 35.0v1.400M954.8 30.0v1.400M954.8 34.0v1.400M954.8 27.0v1.400M956.8 31.0v1.400M956.8 35.0v1.400M956.8 39.0v1.400M958.9 32.0v1.400M958.9 36.0v1.400M960.9 33.0v1.400M960.9 37.0v1.400M960.9 30.0v1.400M962.9 32.0v1.400M962.9 36.0v1.400M964.9 34.0v1.400M964.9 38.0v1.400M964.9 42.0v1.400M967.0 32.0v1.400M967.0 36.0v1.400M967.0 29.0v1.400M969.0 33.0v1.400M969.0 37.0v1.400M971.0 32.0v1.400M971.0 36.0v1.400M973.0 33.0v1.400M973.0 37.0v1.400M973.0 41.0v1.400M973.0 30.0v1.400M975.1 34.0v1.400M975.1 38.0v1.400M977.1 35.0v1.400M977.1 39.0v1.400M979.1 34.0v1.400M979.1 38.0v1.400M979.1 31.0v1.400M981.2 36.0v1.400M981.2 40.0v1.400M981.2 44.0v1.400M983.2 34.0v1.400M983.2 38.0v1.400M983.2 31.0v1.400M985.2 35.0v1.400M985.2 39.0v1.400M987.2 34.0v1.400M987.2 38.0v1.400M989.3 32.0v1.400M989.3 36.0v1.400M989.3 40.0v1.400M989.3 29.0v1.400M991.3 33.0v1.400M991.3 37.0v1.400M991.3 30.0v1.400M993.3 34.0v1.400M993.3 38.0v1.400M993.3 31.0v1.400M995.3 33.0v1.400M995.3 37.0v1.400M997.4 35.0v1.400M997.4 39.0v1.400M997.4 43.0v1.400M997.4 32.0v1.400M999.4 33.0v1.400M999.4 37.0v1.400M999.4 30.0v1.400M1001.4 34.0v1.400M1001.4 38.0v1.400M1003.4 33.0v1.400M1003.4 37.0v1.400M1005.5 30.0v1.400M1005.5 34.0v1.400M1005.5 38.0v1.400M1007.5 31.0v1.400M1007.5 35.0v1.400M1009.5 32.0v1.400M1009.5 36.0v1.400M1011.5 31.0v1.400M1011.5 35.0v1.400M1011.5 28.0v1.400M1013.6 33.0v1.400M1013.6 37.0v1.400M1013.6 41.0v1.400M1015.6 31.0v1.400M1015.6 35.0v1.400M1015.6 28.0v1.400M1017.6 32.0v1.400M1017.6 36.0v1.400M1019.7 31.0v1.400M1019.7 35.0v1.400M1021.7 28.0v1.400M1021.7 32.0v1.400M1021.7 36.0v1.400M1021.7 25.0v1.400M1023.7 29.0v1.400M1023.7 33.0v1.400M1025.7 30.0v1.400M1025.7 34.0v1.400M1027.8 29.0v1.400M1027.8 33.0v1.400M1027.8 26.0v1.400M1029.8 31.0v1.400M1029.8 35.0v1.400M1029.8 39.0v1.400M1031.8 29.0v1.400M1031.8 33.0v1.400M1033.8 30.0v1.400M1033.8 34.0v1.400M1035.9 29.0v1.400M1035.9 33.0v1.400M1035.9 26.0v1.400M1037.9 27.0v1.400M1037.9 31.0v1.400M1037.9 35.0v1.400M1039.9 28.0v1.400M1039.9 32.0v1.400M1041.9 29.0v1.400M1041.9 33.0v1.400M1041.9 26.0v1.400M1044.0 28.0v1.400M1044.0 32.0v1.400M1046.0 30.0v1.400M1046.0 34.0v1.400M1046.0 38.0v1.400M1046.0 27.0v1.400M1048.0 28.0v1.400M1048.0 32.0v1.400M1050.0 29.0v1.400M1050.0 33.0v1.400M1052.1 28.0v1.400M1052.1 32.0v1.400M1054.1 26.0v1.400M1054.1 30.0v1.400M1054.1 34.0v1.400M1056.1 27.0v1.400M1056.1 31.0v1.400M1056.1 24.0v1.400M1058.2 28.0v1.400M1058.2 32.0v1.400M1060.2 27.0v1.400M1060.2 31.0v1.400M1062.2 29.0v1.400M1062.2 33.0v1.400M1062.2 37.0v1.400M1064.2 27.0v1.400M1064.2 31.0v1.400M1066.3 28.0v1.400M1066.3 32.0v1.400M1068.3 27.0v1.400M1068.3 31.0v1.400M1070.3 25.0v1.400M1070.3 29.0v1.400M1070.3 33.0v1.400M1072.3 26.0v1.400M1072.3 30.0v1.400M1072.3 23.0v1.400M1074.4 27.0v1.400M1074.4 31.0v1.400M1076.4 26.0v1.400M1076.4 30.0v1.400M1078.4 28.0v1.400M1078.4 32.0v1.400M1078.4 36.0v1.400M1080.4 26.0v1.400M1080.4 30.0v1.400M1080.4 23.0v1.400M1082.5 27.0v1.400M1082.5 31.0v1.400M1084.5 26.0v1.400M1084.5 30.0v1.400M1086.5 24.0v1.400M1086.5 28.0v1.400M1086.5 32.0v1.400M1086.5 21.0v1.400M1088.5 25.0v1.400M1088.5 29.0v1.400M1090.6 26.0v1.400M1090.6 30.0v1.400M1090.6 23.0v1.400M1092.6 25.0v1.400M1092.6 29.0v1.400M1094.6 27.0v1.400M1094.6 31.0v1.400M1094.6 35.0v1.400M1094.6 24.0v1.400M1096.7 25.0v1.400M1096.7 29.0v1.400M1098.7 26.0v1.400M1098.7 30.0v1.400M1100.7 25.0v1.400M1100.7 29.0v1.400M1102.7 25.0v1.400M1102.7 29.0v1.400M1102.7 33.0v1.400M1104.8 26.0v1.400M1104.8 30.0v1.400M1104.8 23.0v1.400M1106.8 27.0v1.400M1106.8 31.0v1.400M1108.8 26.0v1.400M1108.8 30.0v1.400M1110.8 28.0v1.400M1110.8 32.0v1.400M1110.8 36.0v1.400M1110.8 25.0v1.400M1112.9 26.0v1.400M1112.9 30.0v1.400M1114.9 27.0v1.400M1114.9 31.0v1.400M1116.9 26.0v1.400M1116.9 30.0v1.400M1118.9 28.0v1.400M1118.9 32.0v1.400M1118.9 36.0v1.400M1121.0 29.0v1.400M1121.0 33.0v1.400M1123.0 30.0v1.400M1123.0 34.0v1.400M1125.0 29.0v1.400M1125.0 33.0v1.400M1125.0 26.0v1.400M1127.0 31.0v1.400M1127.0 35.0v1.400M1127.0 39.0v1.400M1129.1 29.0v1.400M1129.1 33.0v1.400M1131.1 30.0v1.400M1131.1 34.0v1.400M1131.1 27.0v1.400M1133.1 29.0v1.400M1133.1 33.0v1.400M1135.2 29.0v1.400M1135.2 33.0v1.400M1135.2 37.0v1.400M1135.2 26.0v1.400M1137.2 30.0v1.400M1137.2 34.0v1.400M1139.2 31.0v1.400M1139.2 35.0v1.400M1141.2 30.0v1.400M1141.2 34.0v1.400M1143.3 32.0v1.400M1143.3 36.0v1.400M1143.3 40.0v1.400M1143.3 29.0v1.400M1145.3 30.0v1.400M1145.3 34.0v1.400M1145.3 27.0v1.400M1147.3 31.0v1.400M1147.3 35.0v1.400M1147.3 28.0v1.400M1149.3 30.0v1.400M1149.3 34.0v1.400M1151.4 29.0v1.400M1151.4 33.0v1.400M1151.4 37.0v1.400M1153.4 30.0v1.400M1153.4 34.0v1.400M1155.4 31.0v1.400M1155.4 35.0v1.400M1157.4 30.0v1.400M1157.4 34.0v1.400M1157.4 27.0v1.400M1159.5 32.0v1.400M1159.5 36.0v1.400M1159.5 40.0v1.400M1161.5 30.0v1.400M1161.5 34.0v1.400M1161.5 27.0v1.400M1163.5 31.0v1.400M1163.5 35.0v1.400M1163.5 28.0v1.400M1165.5 30.0v1.400M1165.5 34.0v1.400M1167.6 29.0v1.400M1167.6 33.0v1.400M1167.6 37.0v1.400M1169.6 30.0v1.400M1169.6 34.0v1.400M1169.6 27.0v1.400M1171.6 31.0v1.400M1171.6 35.0v1.400M1173.6 30.0v1.400M1173.6 34.0v1.400M1175.7 32.0v1.400M1175.7 36.0v1.400M1175.7 40.0v1.400M1177.7 30.0v1.400M1177.7 34.0v1.400M1179.7 31.0v1.400M1179.7 35.0v1.400M1181.8 30.0v1.400M1181.8 34.0v1.400M1181.8 27.0v1.400M1183.8 28.0v1.400M1183.8 32.0v1.400M1183.8 36.0v1.400M1185.8 29.0v1.400M1185.8 33.0v1.400M1187.8 30.0v1.400M1187.8 34.0v1.400M1189.9 29.0v1.400M1189.9 33.0v1.400M1191.9 31.0v1.400M1191.9 35.0v1.400M1191.9 39.0v1.400M1191.9 28.0v1.400M1193.9 29.0v1.400M1193.9 33.0v1.400M1193.9 26.0v1.400M1195.9 30.0v1.400M1195.9 34.0v1.400M1198.0 29.0v1.400M1198.0 33.0v1.400M1198.0 26.0v1.400M1200.0 29.0v1.400M1200.0 33.0v1.400M1200.0 37.0v1.400M1202.0 30.0v1.400M1202.0 34.0v1.400M1202.0 27.0v1.400M1204.0 31.0v1.400M1204.0 35.0v1.400M1206.1 30.0v1.400M1206.1 34.0v1.400M1206.1 27.0v1.400M1208.1 32.0v1.400M1208.1 36.0v1.400M1208.1 40.0v1.400M1208.1 29.0v1.400M1210.1 30.0v1.400M1210.1 34.0v1.400M1210.1 27.0v1.400M1212.1 31.0v1.400M1212.1 35.0v1.400M1214.2 30.0v1.400M1214.2 34.0v1.400M1216.2 31.0v1.400M1216.2 35.0v1.400M1216.2 39.0v1.400M1218.2 32.0v1.400M1218.2 36.0v1.400M1218.2 29.0v1.400M1220.3 33.0v1.400M1220.3 37.0v1.400M1222.3 32.0v1.400M1222.3 36.0v1.400M1224.3 34.0v1.400M1224.3 38.0v1.400M1224.3 42.0v1.400M1226.3 32.0v1.400M1226.3 36.0v1.400M1228.4 33.0v1.400M1228.4 37.0v1.400M1228.4 30.0v1.400M1230.4 32.0v1.400M1230.4 36.0v1.400M1232.4 33.0v1.400M1232.4 37.0v1.400M1232.4 41.0v1.400M1234.4 34.0v1.400M1234.4 38.0v1.400M1236.5 35.0v1.400M1236.5 39.0v1.400M1238.5 34.0v1.400M1238.5 38.0v1.400M1240.5 36.0v1.400M1240.5 40.0v1.400M1240.5 44.0v1.400M1242.5 34.0v1.400M1242.5 38.0v1.400M1242.5 31.0v1.400M1244.6 35.0v1.400M1244.6 39.0v1.400M1246.6 34.0v1.400M1246.6 38.0v1.400M1248.6 32.0v1.400M1248.6 36.0v1.400M1248.6 40.0v1.400M1250.6 33.0v1.400M1250.6 37.0v1.400M1252.7 34.0v1.400M1252.7 38.0v1.400M1254.7 33.0v1.400M1254.7 37.0v1.400M1254.7 30.0v1.400M1256.7 35.0v1.400M1256.7 39.0v1.400M1256.7 43.0v1.400M1258.8 33.0v1.400M1258.8 37.0v1.400M1260.8 34.0v1.400M1260.8 38.0v1.400M1262.8 33.0v1.400M1262.8 37.0v1.400M1264.8 30.0v1.400M1264.8 34.0v1.400M1264.8 38.0v1.400M1264.8 27.0v1.400M1266.9 31.0v1.400M1266.9 35.0v1.400M1268.9 32.0v1.400M1268.9 36.0v1.400M1270.9 31.0v1.400M1270.9 35.0v1.400M1272.9 33.0v1.400M1272.9 37.0v1.400M1272.9 41.0v1.400M1272.9 30.0v1.400M1275.0 31.0v1.400M1275.0 35.0v1.400M1277.0 32.0v1.400M1277.0 36.0v1.400M1279.0 31.0v1.400M1279.0 35.0v1.400M1281.0 28.0v1.400M1281.0 32.0v1.400M1281.0 36.0v1.400M1283.1 29.0v1.400M1283.1 33.0v1.400M1283.1 26.0v1.400M1285.1 30.0v1.400M1285.1 34.0v1.400M1287.1 29.0v1.400M1287.1 33.0v1.400M1289.1 31.0v1.400M1289.1 35.0v1.400M1289.1 39.0v1.400M1291.2 29.0v1.400M1291.2 33.0v1.400M1293.2 30.0v1.400M1293.2 34.0v1.400M1293.2 27.0v1.400M1295.2 29.0v1.400M1295.2 33.0v1.400M1295.2 26.0v1.400M1297.3 27.0v1.400M1297.3 31.0v1.400M1297.3 35.0v1.400M1299.3 28.0v1.400M1299.3 32.0v1.400M1299.3 25.0v1.400M1301.3 29.0v1.400M1301.3 33.0v1.400M1301.3 26.0v1.400M1303.3 28.0v1.400M1303.3 32.0v1.400M1305.4 30.0v1.400M1305.4 34.0v1.400M1305.4 38.0v1.400M1307.4 28.0v1.400M1307.4 32.0v1.400M1309.4 29.0v1.400M1309.4 33.0v1.400M1309.4 26.0v1.400M1311.4 28.0v1.400M1311.4 32.0v1.400M1313.5 26.0v1.400M1313.5 30.0v1.400M1313.5 34.0v1.400M1315.5 27.0v1.400M1315.5 31.0v1.400M1317.5 28.0v1.400M1317.5 32.0v1.400M1317.5 25.0v1.400M1319.5 27.0v1.400M1319.5 31.0v1.400M1321.6 29.0v1.400M1321.6 33.0v1.400M1321.6 37.0v1.400M1323.6 27.0v1.400M1323.6 31.0v1.400M1325.6 28.0v1.400M1325.6 32.0v1.400M1327.6 27.0v1.400M1327.6 31.0v1.400M1329.7 25.0v1.400M1329.7 29.0v1.400M1329.7 33.0v1.400M1329.7 22.0v1.400M1331.7 26.0v1.400M1331.7 30.0v1.400M1333.7 27.0v1.400M1333.7 31.0v1.400M1333.7 24.0v1.400M1335.7 26.0v1.400M1335.7 30.0v1.400M1337.8 28.0v1.400M1337.8 32.0v1.400M1337.8 36.0v1.400M1337.8 25.0v1.400M1339.8 26.0v1.400M1339.8 30.0v1.400M1339.8 23.0v1.400M1341.8 27.0v1.400M1341.8 31.0v1.400M1341.8 24.0v1.400M1343.9 26.0v1.400M1343.9 30.0v1.400M1343.9 23.0v1.400M1345.9 24.0v1.400M1345.9 28.0v1.400M1345.9 32.0v1.400M1347.9 25.0v1.400M1347.9 29.0v1.400M1349.9 26.0v1.400M1349.9 30.0v1.400M1352.0 25.0v1.400M1352.0 29.0v1.400M1354.0 27.0v1.400M1354.0 31.0v1.400M1354.0 35.0v1.400M1356.0 25.0v1.400M1356.0 29.0v1.400M1358.0 26.0v1.400M1358.0 30.0v1.400M1360.1 25.0v1.400M1360.1 29.0v1.400M1362.1 25.0v1.400M1362.1 29.0v1.400M1362.1 33.0v1.400M1362.1 22.0v1.400M1364.1 26.0v1.400M1364.1 30.0v1.400M1366.1 27.0v1.400M1366.1 31.0v1.400M1368.2 26.0v1.400M1368.2 30.0v1.400M1368.2 23.0v1.400M1370.2 28.0v1.400M1370.2 32.0v1.400M1370.2 36.0v1.400M1372.2 26.0v1.400M1372.2 30.0v1.400M1374.2 27.0v1.400M1374.2 31.0v1.400M1374.2 24.0v1.400M1376.3 26.0v1.400M1376.3 30.0v1.400M1376.3 23.0v1.400M1378.3 28.0v1.400M1378.3 32.0v1.400M1378.3 36.0v1.400M1380.3 29.0v1.400M1380.3 33.0v1.400M1380.3 26.0v1.400M1382.4 30.0v1.400M1382.4 34.0v1.400M1384.4 29.0v1.400M1384.4 33.0v1.400M1386.4 31.0v1.400M1386.4 35.0v1.400M1386.4 39.0v1.400M1388.4 29.0v1.400M1388.4 33.0v1.400M1388.4 26.0v1.400M1390.5 30.0v1.400M1390.5 34.0v1.400M1390.5 27.0v1.400M1392.5 29.0v1.400M1392.5 33.0v1.400M1394.5 29.0v1.400M1394.5 33.0v1.400M1394.5 37.0v1.400M1396.5 30.0v1.400M1396.5 34.0v1.400M1398.6 31.0v1.400M1398.6 35.0v1.400M1400.6 30.0v1.400M1400.6 34.0v1.400M1402.6 32.0v1.400M1402.6 36.0v1.400M1402.6 40.0v1.400M1404.6 30.0v1.400M1404.6 34.0v1.400M1406.7 31.0v1.400M1406.7 35.0v1.400M1408.7 30.0v1.400M1408.7 34.0v1.400" fill="none" stroke-width="1.100"/></defs></svg>
<div class="a" style="left:891px;top:430px;width:519px;height:60px;background:#66ea56;border-bottom:1px solid #259a28"></div>
<svg class="a" style="left:0;top:430px" width="1562" height="60" viewBox="0 0 1562 60"><use href="#ld" stroke="#2a8440" opacity=".8"/></svg>
<div class="a" style="left:891px;top:431px;width:61px;height:13px;background:#2d6a30;clip-path:polygon(0 0,100% 0,52px 100%,0 100%)"></div>
<div class="t" style="left:894px;top:433px;font-size:9.5px;letter-spacing:.6px;color:#fff">Main Lead</div>
<div class="a" style="left:891px;top:490px;width:519px;height:60px;background:#66ea56;border-bottom:1px solid #259a28"></div>
<svg class="a" style="left:0;top:490px" width="1562" height="60" viewBox="0 0 1562 60"><use href="#ld" stroke="#2a8440" opacity=".8"/></svg>
<div class="a" style="left:891px;top:491px;width:61px;height:13px;background:#2d6a30;clip-path:polygon(0 0,100% 0,52px 100%,0 100%)"></div>
<div class="t" style="left:894px;top:493px;font-size:9.5px;letter-spacing:.6px;color:#fff">Main Lead</div>
<div class="a" style="left:891px;top:550px;width:519px;height:60px;background:#7fbb3f;border-bottom:1px solid #4f8a28"></div>
<svg class="a" style="left:0;top:550px" width="1562" height="60" viewBox="0 0 1562 60"><use href="#ld" stroke="#4c6e30" opacity=".8"/></svg>
<div class="a" style="left:891px;top:551px;width:61px;height:13px;background:#3c5a28;clip-path:polygon(0 0,100% 0,52px 100%,0 100%)"></div>
<div class="t" style="left:894px;top:553px;font-size:9.5px;letter-spacing:.6px;color:#fff">Main Lead</div>
<div class="a" style="left:891px;top:610px;width:519px;height:60px;background:#5fb878;border-bottom:1px solid #3f8a58"></div>
<svg class="a" style="left:0;top:610px" width="1562" height="60" viewBox="0 0 1562 60"><use href="#ld" stroke="#38704e" opacity=".8"/></svg>
<div class="a" style="left:891px;top:611px;width:65px;height:13px;background:#2e5a3e;clip-path:polygon(0 0,100% 0,56px 100%,0 100%)"></div>
<div class="t" style="left:894px;top:613px;font-size:9.5px;letter-spacing:.6px;color:#fff">Main Pluck</div>
<div class="a" style="left:372px;top:97px;width:1px;height:853px;background:#d8dce0"></div>
<div class="a" style="left:769px;top:956px;width:156px;height:5px;background:#7c8088;border-radius:2px"></div>
<svg class="a" style="left:1565px;top:137px" width="9" height="6"><path d="M4.500 0l4.500 6H0z" fill="#5c6068"/></svg>
<svg class="a" style="left:1565px;top:937px" width="9" height="6"><path d="M0 0h9L4.500 6z" fill="#5c6068"/></svg>
<svg class="a" style="left:1438px;top:952px" width="130" height="13" viewBox="0 0 130 13"><path d="M0 2.500v8l6-4zM17 10.500h9l-4.500-7zM101 11h12l-6-9.500z" fill="#5e626a"/><path d="M30 6.500h66" stroke="#5e626a" stroke-width="1.500"/><rect x="35" y="1" width="3.500" height="11.500" fill="#8a8e96"/><path d="M120 9h7M120 5h7M123 12h4" stroke="#5e626a" stroke-width="2"/></svg>
<div class="a" style="left:1562px;top:950px;width:16px;height:18px;background:#282b31"></div>
<svg class="a" style="left:331px;top:954px" width="7" height="9"><path d="M7 0v9L0 4.500z" fill="#6a6e76"/></svg>
<svg class="a" style="left:783px;top:738px" width="14" height="21" viewBox="-1.500 -1.500 14 21"><path d="M0 0V15.800L3.600 12.400 5.900 17.400 7.900 16.500 5.600 11.500H10.400Z" fill="#fff" stroke="#111" stroke-width=".900"/></svg>
<div class="a" style="left:1580px;top:63px;width:340px;height:907px;background:#15181d"></div>
<div class="a" style="left:1583px;top:66px;width:334px;height:801px;background:#24272d"></div>
<div class="a" style="left:1583px;top:66px;width:334px;height:31px;background:#2b2e35"></div>
<div class="a" style="left:1679px;top:66px;width:47px;height:31px;background:#484c54"></div>
<div class="a" style="left:1583px;top:97px;width:334px;height:21px;background:#484c54"></div>
<svg class="a" style="left:1588px;top:74px" width="14" height="14" viewBox="0 0 14 14"><path d="M7 1l6.500 6h-2v6H8.500V9h-3v4H2.500V7h-2z" fill="#c2c4c8"/></svg>
<div class="t" style="left:1613px;top:76px;font-size:11.500px;color:#b8bcc2">Instruments</div>
<div class="t" style="left:1685px;top:76px;font-size:11.500px;color:#f0f0f2">Effects</div>
<div class="t" style="left:1732px;top:76px;font-size:11.500px;color:#b8bcc2">Loops</div>
<div class="t" style="left:1776px;top:76px;font-size:11.500px;color:#b8bcc2">Files</div>
<div class="t" style="left:1811px;top:76px;font-size:11.500px;color:#b8bcc2">Cloud</div>
<div class="t" style="left:1853px;top:76px;font-size:11.500px;color:#b8bcc2">Pool</div>
<svg class="a" style="left:1898px;top:73px" width="16" height="16" viewBox="0 0 16 16"><circle cx="6" cy="6" r="4.200" fill="none" stroke="#eceef0" stroke-width="2"/><path d="M9 9l5.500 5.500" stroke="#eceef0" stroke-width="2.400"/></svg>
<div class="t" style="left:1588px;top:102px;font-size:11px;color:#a4a8b0">Sort by:</div>
<div class="t" style="left:1648px;top:102px;font-size:11px;color:#f0f0f2">Flat</div>
<div class="t" style="left:1678px;top:102px;font-size:11px;color:#888c94">Folder</div>
<div class="t" style="left:1722px;top:102px;font-size:11px;color:#888c94">Vendor</div>
<div class="t" style="left:1770px;top:102px;font-size:11px;color:#888c94">Type</div>
<svg class="a" style="left:1879px;top:100px" width="16" height="16" viewBox="0 0 16 16"><g transform="translate(1 1) scale(0.85)" fill="none" stroke="#9a9ea6" stroke-linecap="round"><path d="M6.100 2.300A3.300 3.300 0 1 1 2.250 6.100" stroke-width="2.500" stroke-linecap="butt"/><path d="M7.300 7.300L14.300 14.800" stroke-width="2.700"/></g></svg>
<div class="a" style="left:1901px;top:102px;width:12px;height:11px;border:2px solid #f0f0f2;border-top-width:3px;border-radius:1px"></div>
<div class="t" style="left:1588px;top:127px;font-size:11.400px;color:#b4b8be">Search for</div>
<div class="a" style="left:1650px;top:123px;width:198px;height:19px;background:#30333b"></div>
<svg class="a" style="left:1855px;top:125px" width="14" height="14" viewBox="0 0 14 14"><path d="M1 9l6-7 5 3-6 7-4 .500z" fill="#b0b4ba"/><circle cx="9" cy="5" r="1.200" fill="#24272d"/></svg>
<svg class="a" style="left:1875px;top:125px" width="14" height="14" viewBox="0 0 14 14"><circle cx="7" cy="7" r="6.500" fill="#b0b4ba"/><path d="M4.500 4.500l5 5M9.500 4.500l-5 5" stroke="#24272d" stroke-width="1.700"/></svg>
<svg class="a" style="left:1895px;top:125px" width="14" height="14" viewBox="0 0 14 14"><path d="M11.500 9.500a5 5 0 1 1 .500-4" fill="none" stroke="#3a3e46" stroke-width="1.700"/></svg>
<svg class="a" style="left:1589.0px;top:149.0px" width="10" height="10" viewBox="0 0 20 20"><path d="M10 .800l2.700 6.200 6.700.600-5.100 4.400 1.600 6.600L10 15.100l-5.900 3.500 1.600-6.600L.600 7.600l6.700-.600z" fill="#e4e6ea"/></svg>
<div class="a" style="left:1632px;top:146px;width:16px;height:16px;background:#4a4e56;border-radius:1px"></div><div class="t" style="left:1633px;top:146px;width:14px;text-align:center;font-size:9.500px;font-weight:bold;color:#eceef0;letter-spacing:-.3px">FX</div><div class="a" style="left:1632px;top:155px;width:16px;height:7px;background:#8c9098"></div><div class="t" style="left:1632px;top:155.5px;width:16px;text-align:center;font-size:6.500px;font-weight:bold;color:#4a4e56">VST</div>
<div class="t" style="left:1653px;top:149px;font-size:12px;letter-spacing:.15px;color:#c4c6cb">FabFilter Pro-R</div>
<svg class="a" style="left:1589.0px;top:171.0px" width="10" height="10" viewBox="0 0 20 20"><path d="M10 .800l2.700 6.200 6.700.600-5.100 4.400 1.600 6.600L10 15.100l-5.900 3.500 1.600-6.600L.600 7.600l6.700-.600z" fill="#e4e6ea"/></svg>
<div class="a" style="left:1632px;top:168px;width:16px;height:16px;background:#4a4e56;border-radius:1px"></div><div class="t" style="left:1633px;top:168px;width:14px;text-align:center;font-size:9.500px;font-weight:bold;color:#eceef0;letter-spacing:-.3px">FX</div><div class="a" style="left:1632px;top:177px;width:16px;height:7px;background:#8c9098"></div><div class="t" style="left:1632px;top:177.5px;width:16px;text-align:center;font-size:6.500px;font-weight:bold;color:#4a4e56">VST</div>
<div class="t" style="left:1653px;top:171px;font-size:12px;letter-spacing:.15px;color:#c4c6cb">FabFilter Saturn</div>
<svg class="a" style="left:1589.0px;top:193.0px" width="10" height="10" viewBox="0 0 20 20"><path d="M10 .800l2.700 6.200 6.700.600-5.100 4.400 1.600 6.600L10 15.100l-5.900 3.500 1.600-6.600L.600 7.600l6.700-.600z" fill="#e4e6ea"/></svg>
<div class="a" style="left:1632px;top:190px;width:16px;height:16px;background:#4a4e56;border-radius:1px"></div><div class="t" style="left:1633px;top:190px;width:14px;text-align:center;font-size:9.500px;font-weight:bold;color:#eceef0;letter-spacing:-.3px">FX</div><div class="a" style="left:1632px;top:199px;width:16px;height:7px;background:#8c9098"></div><div class="t" style="left:1632px;top:199.5px;width:16px;text-align:center;font-size:6.500px;font-weight:bold;color:#4a4e56">VST</div>
<div class="t" style="left:1653px;top:193px;font-size:12px;letter-spacing:.15px;color:#c4c6cb">FabFilter Simplon</div>
<svg class="a" style="left:1622px;top:216px" width="5" height="9"><path d="M0 0l5 4.500L0 9z" fill="#dcdee2"/></svg>
<div class="a" style="left:1632px;top:212px;width:16px;height:16px;background:#4a4e56;border-radius:1px"></div><div class="t" style="left:1633px;top:215px;width:14px;text-align:center;font-size:9.500px;font-weight:bold;color:#eceef0;letter-spacing:-.3px">FX</div>
<div class="t" style="left:1653px;top:215px;font-size:12px;letter-spacing:.15px;color:#c4c6cb">Fat Channel</div>
<svg class="a" style="left:1622px;top:347px" width="5" height="9"><path d="M0 0l5 4.500L0 9z" fill="#dcdee2"/></svg>
<div class="a" style="left:1632px;top:343px;width:16px;height:16px;background:#4a4e56;border-radius:1px"></div><div class="t" style="left:1633px;top:346px;width:14px;text-align:center;font-size:9.500px;font-weight:bold;color:#eceef0;letter-spacing:-.3px">FX</div>
<div class="t" style="left:1653px;top:346px;font-size:12px;letter-spacing:.15px;color:#c4c6cb">Gate</div>
<svg class="a" style="left:1589.0px;top:399.0px" width="10" height="10" viewBox="0 0 20 20"><path d="M10 .800l2.700 6.200 6.700.600-5.100 4.400 1.600 6.600L10 15.100l-5.900 3.500 1.600-6.600L.600 7.600l6.700-.600z" fill="#e4e6ea"/></svg>
<div class="a" style="left:1632px;top:396px;width:16px;height:16px;background:#4a4e56;border-radius:1px"></div><div class="t" style="left:1633px;top:396px;width:14px;text-align:center;font-size:9.500px;font-weight:bold;color:#eceef0;letter-spacing:-.3px">FX</div><div class="a" style="left:1632px;top:405px;width:16px;height:7px;background:#8c9098"></div><div class="t" style="left:1632px;top:405.5px;width:16px;text-align:center;font-size:6.500px;font-weight:bold;color:#4a4e56">VST</div>
<div class="t" style="left:1653px;top:399px;font-size:12px;letter-spacing:.15px;color:#c4c6cb">GClip</div>
<svg class="a" style="left:1622px;top:422px" width="5" height="9"><path d="M0 0l5 4.500L0 9z" fill="#dcdee2"/></svg>
<div class="a" style="left:1632px;top:418px;width:16px;height:16px;background:#4a4e56;border-radius:1px"></div><div class="t" style="left:1633px;top:421px;width:14px;text-align:center;font-size:9.500px;font-weight:bold;color:#eceef0;letter-spacing:-.3px">FX</div>
<div class="t" style="left:1653px;top:421px;font-size:12px;letter-spacing:.15px;color:#c4c6cb">Groove Delay</div>
<svg class="a" style="left:1589.0px;top:492.0px" width="10" height="10" viewBox="0 0 20 20"><path d="M10 .800l2.700 6.200 6.700.600-5.100 4.400 1.600 6.600L10 15.100l-5.900 3.500 1.600-6.600L.600 7.600l6.700-.600z" fill="#e4e6ea"/></svg>
<div class="a" style="left:1632px;top:489px;width:16px;height:16px;background:#4a4e56;border-radius:1px"></div><div class="t" style="left:1633px;top:489px;width:14px;text-align:center;font-size:9.500px;font-weight:bold;color:#eceef0;letter-spacing:-.3px">FX</div><div class="a" style="left:1632px;top:498px;width:16px;height:7px;background:#8c9098"></div><div class="t" style="left:1632px;top:498.5px;width:16px;text-align:center;font-size:6.500px;font-weight:bold;color:#4a4e56">VST</div>
<div class="t" style="left:1653px;top:492px;font-size:12px;letter-spacing:.15px;color:#c4c6cb">H-Delay Stereo</div>
<svg class="a" style="left:1589.0px;top:514.0px" width="10" height="10" viewBox="0 0 20 20"><path d="M10 .800l2.700 6.200 6.700.600-5.100 4.400 1.600 6.600L10 15.100l-5.900 3.500 1.600-6.600L.600 7.600l6.700-.600z" fill="#e4e6ea"/></svg>
<div class="a" style="left:1632px;top:511px;width:16px;height:16px;background:#4a4e56;border-radius:1px"></div><div class="t" style="left:1633px;top:511px;width:14px;text-align:center;font-size:9.500px;font-weight:bold;color:#eceef0;letter-spacing:-.3px">FX</div><div class="a" style="left:1632px;top:520px;width:16px;height:7px;background:#8c9098"></div><div class="t" style="left:1632px;top:520.5px;width:16px;text-align:center;font-size:6.500px;font-weight:bold;color:#4a4e56">VST</div>
<div class="t" style="left:1653px;top:514px;font-size:12px;letter-spacing:.15px;color:#c4c6cb">Invisible Limiter</div>
<svg class="a" style="left:1589.0px;top:536.0px" width="10" height="10" viewBox="0 0 20 20"><path d="M10 .800l2.700 6.200 6.700.600-5.100 4.400 1.600 6.600L10 15.100l-5.900 3.500 1.600-6.600L.600 7.600l6.700-.600z" fill="#e4e6ea"/></svg>
<div class="a" style="left:1632px;top:533px;width:16px;height:16px;background:#4a4e56;border-radius:1px"></div><div class="t" style="left:1633px;top:533px;width:14px;text-align:center;font-size:9.500px;font-weight:bold;color:#eceef0;letter-spacing:-.3px">FX</div><div class="a" style="left:1632px;top:542px;width:16px;height:7px;background:#8c9098"></div><div class="t" style="left:1632px;top:542.5px;width:16px;text-align:center;font-size:6.500px;font-weight:bold;color:#4a4e56">VST</div>
<div class="t" style="left:1653px;top:536px;font-size:12px;letter-spacing:.15px;color:#c4c6cb">iZotope Ozone 5</div>
<svg class="a" style="left:1589.0px;top:558.0px" width="10" height="10" viewBox="0 0 20 20"><path d="M10 .800l2.700 6.200 6.700.600-5.100 4.400 1.600 6.600L10 15.100l-5.900 3.500 1.600-6.600L.600 7.600l6.700-.600z" fill="#e4e6ea"/></svg>
<div class="a" style="left:1632px;top:555px;width:16px;height:16px;background:#4a4e56;border-radius:1px"></div><div class="t" style="left:1633px;top:555px;width:14px;text-align:center;font-size:9.500px;font-weight:bold;color:#eceef0;letter-spacing:-.3px">FX</div><div class="a" style="left:1632px;top:564px;width:16px;height:7px;background:#8c9098"></div><div class="t" style="left:1632px;top:564.5px;width:16px;text-align:center;font-size:6.500px;font-weight:bold;color:#4a4e56">VST</div>
<div class="t" style="left:1653px;top:558px;font-size:12px;letter-spacing:.15px;color:#c4c6cb">L1 limiter Stereo</div>
<svg class="a" style="left:1589.0px;top:580.0px" width="10" height="10" viewBox="0 0 20 20"><path d="M10 .800l2.700 6.200 6.700.600-5.100 4.400 1.600 6.600L10 15.100l-5.900 3.500 1.600-6.600L.600 7.600l6.700-.600z" fill="#e4e6ea"/></svg>
<div class="a" style="left:1632px;top:577px;width:16px;height:16px;background:#4a4e56;border-radius:1px"></div><div class="t" style="left:1633px;top:577px;width:14px;text-align:center;font-size:9.500px;font-weight:bold;color:#eceef0;letter-spacing:-.3px">FX</div><div class="a" style="left:1632px;top:586px;width:16px;height:7px;background:#8c9098"></div><div class="t" style="left:1632px;top:586.5px;width:16px;text-align:center;font-size:6.500px;font-weight:bold;color:#4a4e56">VST</div>
<div class="t" style="left:1653px;top:580px;font-size:12px;letter-spacing:.15px;color:#c4c6cb">LFOTool_x64</div>
<svg class="a" style="left:1589.0px;top:602.0px" width="10" height="10" viewBox="0 0 20 20"><path d="M10 .800l2.700 6.200 6.700.600-5.100 4.400 1.600 6.600L10 15.100l-5.900 3.500 1.600-6.600L.600 7.600l6.700-.600z" fill="#e4e6ea"/></svg>
<div class="a" style="left:1632px;top:599px;width:16px;height:16px;background:#4a4e56;border-radius:1px"></div><div class="t" style="left:1633px;top:599px;width:14px;text-align:center;font-size:9.500px;font-weight:bold;color:#eceef0;letter-spacing:-.3px">FX</div><div class="a" style="left:1632px;top:608px;width:16px;height:7px;background:#8c9098"></div><div class="t" style="left:1632px;top:608.5px;width:16px;text-align:center;font-size:6.500px;font-weight:bold;color:#4a4e56">VST</div>
<div class="t" style="left:1653px;top:602px;font-size:12px;letter-spacing:.15px;color:#c4c6cb">LittleAlterBoy</div>
<svg class="a" style="left:1589.0px;top:624.0px" width="10" height="10" viewBox="0 0 20 20"><path d="M10 .800l2.700 6.200 6.700.600-5.100 4.400 1.600 6.600L10 15.100l-5.900 3.500 1.600-6.600L.600 7.600l6.700-.600z" fill="#e4e6ea"/></svg>
<svg class="a" style="left:1622px;top:625px" width="5" height="9"><path d="M0 0l5 4.500L0 9z" fill="#dcdee2"/></svg>
<div class="a" style="left:1632px;top:621px;width:16px;height:16px;background:#4a4e56;border-radius:1px"></div><div class="t" style="left:1633px;top:621px;width:14px;text-align:center;font-size:9.500px;font-weight:bold;color:#eceef0;letter-spacing:-.3px">FX</div><div class="a" style="left:1632px;top:630px;width:16px;height:7px;background:#8c9098"></div><div class="t" style="left:1632px;top:630.5px;width:16px;text-align:center;font-size:6.500px;font-weight:bold;color:#4a4e56">VST</div>
<div class="t" style="left:1653px;top:624px;font-size:12px;letter-spacing:.15px;color:#c4c6cb">Maag EQ4</div>
<svg class="a" style="left:1589.0px;top:646.0px" width="10" height="10" viewBox="0 0 20 20"><path d="M10 .800l2.700 6.200 6.700.600-5.100 4.400 1.600 6.600L10 15.100l-5.900 3.500 1.600-6.600L.600 7.600l6.700-.600z" fill="#e4e6ea"/></svg>
<div class="a" style="left:1632px;top:643px;width:16px;height:16px;background:#4a4e56;border-radius:1px"></div><div class="t" style="left:1633px;top:643px;width:14px;text-align:center;font-size:9.500px;font-weight:bold;color:#eceef0;letter-spacing:-.3px">FX</div><div class="a" style="left:1632px;top:652px;width:16px;height:7px;background:#8c9098"></div><div class="t" style="left:1632px;top:652.5px;width:16px;text-align:center;font-size:6.500px;font-weight:bold;color:#4a4e56">VST</div>
<div class="t" style="left:1653px;top:646px;font-size:12px;letter-spacing:.15px;color:#c4c6cb">MetaFlanger Stereo</div>
<svg class="a" style="left:1589.0px;top:668.0px" width="10" height="10" viewBox="0 0 20 20"><path d="M10 .800l2.700 6.200 6.700.600-5.100 4.400 1.600 6.600L10 15.100l-5.900 3.500 1.600-6.600L.600 7.600l6.700-.600z" fill="#e4e6ea"/></svg>
<div class="a" style="left:1632px;top:665px;width:16px;height:16px;background:#4a4e56;border-radius:1px"></div><div class="t" style="left:1633px;top:665px;width:14px;text-align:center;font-size:9.500px;font-weight:bold;color:#eceef0;letter-spacing:-.3px">FX</div><div class="a" style="left:1632px;top:674px;width:16px;height:7px;background:#8c9098"></div><div class="t" style="left:1632px;top:674.5px;width:16px;text-align:center;font-size:6.500px;font-weight:bold;color:#4a4e56">VST</div>
<div class="t" style="left:1653px;top:668px;font-size:12px;letter-spacing:.15px;color:#c4c6cb">MixChecker</div>
<svg class="a" style="left:1622px;top:691px" width="5" height="9"><path d="M0 0l5 4.500L0 9z" fill="#dcdee2"/></svg>
<div class="a" style="left:1632px;top:687px;width:16px;height:16px;background:#4a4e56;border-radius:1px"></div><div class="t" style="left:1633px;top:690px;width:14px;text-align:center;font-size:9.500px;font-weight:bold;color:#eceef0;letter-spacing:-.3px">FX</div>
<div class="t" style="left:1653px;top:690px;font-size:12px;letter-spacing:.15px;color:#c4c6cb">Mixverb</div>
<svg class="a" style="left:1589.0px;top:740.0px" width="10" height="10" viewBox="0 0 20 20"><path d="M10 .800l2.700 6.200 6.700.600-5.100 4.400 1.600 6.600L10 15.100l-5.900 3.500 1.600-6.600L.600 7.600l6.700-.600z" fill="#e4e6ea"/></svg>
<div class="a" style="left:1632px;top:737px;width:16px;height:16px;background:#4a4e56;border-radius:1px"></div><div class="t" style="left:1633px;top:737px;width:14px;text-align:center;font-size:9.500px;font-weight:bold;color:#eceef0;letter-spacing:-.3px">FX</div><div class="a" style="left:1632px;top:746px;width:16px;height:7px;background:#8c9098"></div><div class="t" style="left:1632px;top:746.5px;width:16px;text-align:center;font-size:6.500px;font-weight:bold;color:#4a4e56">VST</div>
<div class="t" style="left:1653px;top:740px;font-size:12px;letter-spacing:.15px;color:#c4c6cb">MSED</div>
<svg class="a" style="left:1589.0px;top:762.0px" width="10" height="10" viewBox="0 0 20 20"><path d="M10 .800l2.700 6.200 6.700.600-5.100 4.400 1.600 6.600L10 15.100l-5.900 3.500 1.600-6.600L.600 7.600l6.700-.600z" fill="#e4e6ea"/></svg>
<div class="a" style="left:1632px;top:759px;width:16px;height:16px;background:#4a4e56;border-radius:1px"></div><div class="t" style="left:1633px;top:759px;width:14px;text-align:center;font-size:9.500px;font-weight:bold;color:#eceef0;letter-spacing:-.3px">FX</div><div class="a" style="left:1632px;top:768px;width:16px;height:7px;background:#8c9098"></div><div class="t" style="left:1632px;top:768.5px;width:16px;text-align:center;font-size:6.500px;font-weight:bold;color:#4a4e56">VST</div>
<div class="t" style="left:1653px;top:762px;font-size:12px;letter-spacing:.15px;color:#c4c6cb">OneKnob Phatter Stereo</div>
<svg class="a" style="left:1589.0px;top:784.0px" width="10" height="10" viewBox="0 0 20 20"><path d="M10 .800l2.700 6.200 6.700.600-5.100 4.400 1.600 6.600L10 15.100l-5.900 3.500 1.600-6.600L.600 7.600l6.700-.600z" fill="#e4e6ea"/></svg>
<div class="a" style="left:1632px;top:781px;width:16px;height:16px;background:#4a4e56;border-radius:1px"></div><div class="t" style="left:1633px;top:781px;width:14px;text-align:center;font-size:9.500px;font-weight:bold;color:#eceef0;letter-spacing:-.3px">FX</div><div class="a" style="left:1632px;top:790px;width:16px;height:7px;background:#8c9098"></div><div class="t" style="left:1632px;top:790.5px;width:16px;text-align:center;font-size:6.500px;font-weight:bold;color:#4a4e56">VST</div>
<div class="t" style="left:1653px;top:784px;font-size:12px;letter-spacing:.15px;color:#c4c6cb">OTT_x64</div>
<svg class="a" style="left:1589.0px;top:806.0px" width="10" height="10" viewBox="0 0 20 20"><path d="M10 .800l2.700 6.200 6.700.600-5.100 4.400 1.600 6.600L10 15.100l-5.900 3.500 1.600-6.600L.600 7.600l6.700-.600z" fill="#e4e6ea"/></svg>
<div class="a" style="left:1632px;top:803px;width:16px;height:16px;background:#4a4e56;border-radius:1px"></div><div class="t" style="left:1633px;top:803px;width:14px;text-align:center;font-size:9.500px;font-weight:bold;color:#eceef0;letter-spacing:-.3px">FX</div><div class="a" style="left:1632px;top:812px;width:16px;height:7px;background:#8c9098"></div><div class="t" style="left:1632px;top:812.5px;width:16px;text-align:center;font-size:6.500px;font-weight:bold;color:#4a4e56">VST</div>
<div class="t" style="left:1653px;top:806px;font-size:12px;letter-spacing:.15px;color:#c4c6cb">PanMan</div>
<svg class="a" style="left:1622px;top:829px" width="5" height="9"><path d="M0 0l5 4.500L0 9z" fill="#dcdee2"/></svg>
<div class="a" style="left:1632px;top:825px;width:16px;height:16px;background:#4a4e56;border-radius:1px"></div><div class="t" style="left:1633px;top:828px;width:14px;text-align:center;font-size:9.500px;font-weight:bold;color:#eceef0;letter-spacing:-.3px">FX</div>
<div class="t" style="left:1653px;top:828px;font-size:12px;letter-spacing:.15px;color:#c4c6cb">Pro EQ</div>
<svg class="a" style="left:1589.0px;top:269.0px" width="10" height="10" viewBox="0 0 20 20"><path d="M10 .800l2.700 6.200 6.700.600-5.100 4.400 1.600 6.600L10 15.100l-5.900 3.500 1.600-6.600L.600 7.600l6.700-.600z" fill="#e4e6ea"/></svg>
<svg class="a" style="left:1589.0px;top:360.0px" width="10" height="10" viewBox="0 0 20 20"><path d="M10 .800l2.700 6.200 6.700.600-5.100 4.400 1.600 6.600L10 15.100l-5.900 3.500 1.600-6.600L.600 7.600l6.700-.600z" fill="#e4e6ea"/></svg>
<svg class="a" style="left:1589.0px;top:444.0px" width="10" height="10" viewBox="0 0 20 20"><path d="M10 .800l2.700 6.200 6.700.600-5.100 4.400 1.600 6.600L10 15.100l-5.900 3.500 1.600-6.600L.600 7.600l6.700-.600z" fill="#e4e6ea"/></svg>
<svg class="a" style="left:1589.0px;top:703.0px" width="10" height="10" viewBox="0 0 20 20"><path d="M10 .800l2.700 6.200 6.700.600-5.100 4.400 1.600 6.600L10 15.100l-5.900 3.500 1.600-6.600L.600 7.600l6.700-.600z" fill="#e4e6ea"/></svg>
<svg class="a" style="left:0;top:0" width="1920" height="867" viewBox="0 0 1920 867"><rect x="1632" y="237" width="98" height="97" fill="#1a1d22"/><rect x="1633" y="239" width="96" height="31" fill="#252930"/><rect x="1698" y="242" width="29" height="27" fill="#0c0e11"/><path d="M1702 267q9-2 10-13t10-9" stroke="#3a5a78" fill="none"/><rect x="1685" y="256" width="9" height="3" fill="#d8dadc"/><path d="M1646 246h5M1656 248h8M1672 248h8M1656 255h8M1672 255h6M1656 262h5" stroke="#4a525e" stroke-width="1.500"/><path d="M1634 239.500h94" stroke="#4a5a6a" stroke-dasharray="3 5 8 3 2 6"/><rect x="1633" y="270" width="96" height="27" fill="#b6b8ba"/><rect x="1633" y="270" width="96" height="5" fill="#d0d2d4"/><circle cx="1658.5" cy="282.3" r="4.3" fill="#2a2c30"/><circle cx="1704.5" cy="282.3" r="4.3" fill="#2a2c30"/><circle cx="1720" cy="284" r="3.6" fill="#2a2c30"/><circle cx="1720.500" cy="283.500" r="1.500" fill="#e8e8e8"/><rect x="1672" y="277.500" width="20" height="10.500" fill="#e2a838"/><rect x="1674" y="279.500" width="16" height="6.500" fill="#f8e4a0"/><rect x="1654" y="291" width="10" height="2" fill="#2a2c30"/><rect x="1700" y="291" width="10" height="2" fill="#2a2c30"/><rect x="1715" y="291.500" width="10" height="2" fill="#2a2c30"/><rect x="1715" y="275.500" width="9" height="2.500" fill="#e4e890"/><rect x="1638" y="272" width="2.500" height="6" fill="#5a5e66"/><rect x="1633" y="297" width="96" height="29" fill="#658996"/><circle cx="1655" cy="306" r="3.6" fill="#1a1e24"/><circle cx="1668.4" cy="306" r="3.6" fill="#1a1e24"/><circle cx="1690.4" cy="306" r="3.6" fill="#1a1e24"/><circle cx="1703.6" cy="306" r="3.6" fill="#1a1e24"/><circle cx="1662.4" cy="318.6" r="3.3" fill="#1a1e24"/><circle cx="1679.4" cy="318.6" r="3.6" fill="#1a1e24"/><circle cx="1697.6" cy="318.6" r="3.3" fill="#1a1e24"/><rect x="1640" y="301" width="3.500" height="4" fill="#e05838"/><rect x="1640" y="306" width="3.500" height="5" fill="#6a4a6a"/><rect x="1717" y="302" width="3" height="8" rx="1.500" fill="#22262c"/><path d="M1651 311.500h9M1664 311.500h9M1686 311.500h9M1699 311.500h9" stroke="#24303a" stroke-width="1.500"/><rect x="1633" y="326" width="96" height="7" fill="#1c2026"/><rect x="1633" y="369" width="28" height="17" fill="#aeb2b4"/><rect x="1662" y="369" width="5" height="17" fill="#3a6074"/><rect x="1669" y="369" width="59" height="17" fill="#a6aaae"/><rect x="1693" y="370" width="12" height="6" fill="#2c4a5a"/><rect x="1693" y="378" width="12" height="5" fill="#3a6a50"/><circle cx="1640" cy="379" r="2.8" fill="#3a3e44"/><circle cx="1648" cy="379" r="2.8" fill="#3a3e44"/><circle cx="1656" cy="379" r="2.8" fill="#3a3e44"/><circle cx="1676" cy="380" r="2.8" fill="#3a3e44"/><circle cx="1684" cy="380" r="2.8" fill="#3a3e44"/><circle cx="1712" cy="380" r="2.8" fill="#3a3e44"/><circle cx="1721" cy="380" r="2.8" fill="#3a3e44"/><rect x="1633" y="445" width="76" height="13" fill="#1c3040"/><path d="M1634 456v-8M1637 456v-6M1640 456v-9M1643 456v-5M1646 456v-8M1649 456v-6M1652 456v-9M1656 456v-7M1660 456v-5M1664 456v-8M1668 456v-6M1672 456v-9M1676 456v-6M1680 456v-8M1684 456v-5M1688 456v-8M1692 456v-6M1696 456v-9M1700 456v-7M1704 456v-5" stroke="#2c5468" stroke-width="1.500"/><rect x="1633" y="458" width="76" height="22" fill="#a8acb0"/><rect x="1646" y="459" width="10" height="16" fill="#2e5a74"/><circle cx="1638" cy="463" r="2.5" fill="#3a3e44"/><circle cx="1638" cy="473" r="2.5" fill="#3a3e44"/><circle cx="1664" cy="470" r="3.2" fill="#3a3e44"/><circle cx="1675" cy="470" r="3.2" fill="#3a3e44"/><circle cx="1686" cy="470" r="3.2" fill="#3a3e44"/><circle cx="1697" cy="470" r="3.2" fill="#3a3e44"/><circle cx="1704" cy="470" r="2.8" fill="#3a3e44"/><rect x="1633" y="713" width="83" height="14" fill="#a4a8ac"/><rect x="1633" y="713" width="83" height="3" fill="#c4c8cc"/><circle cx="1640" cy="721" r="3" fill="#3a3e44"/><circle cx="1649" cy="721" r="3" fill="#3a3e44"/><circle cx="1664" cy="722" r="2.6" fill="#5a5e66"/><circle cx="1674" cy="722" r="2.6" fill="#5a5e66"/><circle cx="1684" cy="722" r="2.6" fill="#5a5e66"/><circle cx="1700" cy="721" r="3" fill="#3a3e44"/><circle cx="1709" cy="721" r="3" fill="#3a3e44"/><rect x="1632" y="852" width="80" height="15" fill="#1c2c44"/><path d="M1633 853.500h76" stroke="#4a5a7a" stroke-dasharray="6 2 3 2"/><rect x="1634" y="856" width="77" height="11" fill="#264a6c"/><path d="M1636 866q10-7 22-3t30-2 22 3" stroke="#3a7888" stroke-width="1.500" fill="none"/></svg>
<svg class="a" style="left:1904px;top:153px" width="10" height="7"><path d="M5 0l5 7H0z" fill="#43474f"/></svg>
<svg class="a" style="left:1904px;top:854px" width="10" height="7"><path d="M0 0h10L5 7z" fill="#43474f"/></svg>
<div class="a" style="left:1908px;top:186px;width:4px;height:27px;background:#80848c;border-radius:2px"></div>
<div class="a" style="left:1583px;top:867px;width:334px;height:100px;background:#393c44"></div>
<div class="a" style="left:1593px;top:877px;width:32px;height:32px;background:#4a4e56;border-radius:2px"></div>
<div class="t" style="left:1593px;top:879px;width:32px;text-align:center;font-size:17px;font-weight:bold;color:#eceef0;letter-spacing:-.3px">FX</div>
<div class="a" style="left:1593px;top:896px;width:32px;height:13px;background:#9a9ea6;border-radius:0 0 2px 2px"></div>
<div class="t" style="left:1593px;top:898px;width:32px;text-align:center;font-size:10px;font-weight:bold;color:#4a4e56">VST</div>
<div class="t" style="left:1634px;top:875px;font-size:15px;color:#e8eaec">PanMan</div>
<div class="t" style="left:1634px;top:896px;font-size:11.400px;color:#c0c4ca">Vendor:</div>
<div class="t" style="left:1689px;top:896px;font-size:11.400px;color:#c0c4ca">SoundToys</div>
<div class="t" style="left:1634px;top:914px;font-size:11.400px;color:#c0c4ca">Category:</div>
<div class="t" style="left:1689px;top:914px;font-size:11.400px;color:#c0c4ca">VST2</div>
<svg class="a" style="left:1604.0px;top:918.0px" width="10" height="10" viewBox="0 0 20 20"><path d="M10 .800l2.700 6.200 6.700.600-5.100 4.400 1.600 6.600L10 15.100l-5.900 3.500 1.600-6.600L.600 7.600l6.700-.600z" fill="#e4e6ea"/></svg>
<div class="a" style="left:0;top:970px;width:1920px;height:30px;background:#13151a"></div>
<div class="a" style="left:0;top:970px;width:184px;height:30px;background:#62666f;clip-path:polygon(0 0,174px 0,182px 100%,0 100%)"></div>
<div class="a" style="left:1558px;top:971px;width:362px;height:29px;background:#646871;clip-path:polygon(12px 0,100% 0,100% 100%,3px 100%)"></div>
<div class="a" style="left:1742px;top:972px;width:1px;height:28px;background:#545862"></div>
<div class="a" style="left:1798px;top:972px;width:1px;height:28px;background:#545862"></div>
<div class="a" style="left:1855px;top:971px;width:65px;height:29px;background:#3c98d6"></div>
<div class="t" style="left:1760.5px;top:991.500px;font-size:12.200px;color:#e4e6ea">Edit</div>
<div class="t" style="left:1817px;top:991.500px;font-size:12.200px;color:#e4e6ea">Mix</div>
<div class="t" style="left:1867.5px;top:991.500px;font-size:12.200px;color:#e4e6ea">Browse</div>
<svg class="a" style="left:190px;top:976px" width="34" height="20" viewBox="0 0 34 20"><circle cx="14" cy="9" r="6.500" fill="none" stroke="#5a5e66" stroke-width="1.300"/><circle cx="14" cy="5.500" r="1" fill="#5a5e66"/><circle cx="10.500" cy="8" r="1" fill="#5a5e66"/><circle cx="17.500" cy="8" r="1" fill="#5a5e66"/><circle cx="11.500" cy="11.500" r="1" fill="#5a5e66"/><circle cx="16.500" cy="11.500" r="1" fill="#5a5e66"/><path d="M3 6v6l3-3zM24 6v6l3-3z" fill="#4a4e56"/></svg>
<div class="t" style="left:193px;top:998px;font-size:10px;color:#9a9ea6">MIDI</div>
<div class="a" style="left:230px;top:979px;width:66px;height:5px;background:#2c3038"></div>
<div class="a" style="left:230px;top:986px;width:66px;height:5px;background:#2c3038"></div>
<div class="a" style="left:230px;top:979px;width:7px;height:5px;background:#6cc0e8"></div>
<div class="t" style="left:233px;top:997px;font-size:10px;color:#c8cace">Performance</div>
<svg class="a" style="left:311px;top:979px" width="24" height="24" viewBox="0 0 24 24"><circle cx="12" cy="12" r="9.500" fill="none" stroke="#b0b4ba" stroke-width="2" stroke-dasharray="1.500 3"/></svg>
<div class="t" style="left:348px;top:980px;font-size:12.500px;color:#e2e4e8">44.1 kHz</div>
<div class="t" style="left:416px;top:980px;font-size:12.500px;color:#e2e4e8">20:02 days</div>
<div class="t" style="left:507px;top:980px;font-size:12.500px;color:#e2e4e8">00:03:02.609</div>
<div class="t" style="left:348px;top:997px;font-size:11px;color:#e2e4e8">75.0 ms</div>
<div class="t" style="left:416px;top:998px;font-size:10px;color:#8a8e96">Record Max</div>
<div class="t" style="left:519px;top:998px;font-size:10px;color:#8a8e96">Seconds</div>
<div class="t" style="left:612px;top:977px;font-size:19.500px;font-weight:bold;color:#e6e8ea;letter-spacing:-.1px">00106.01.01.00</div>
<div class="t" style="left:661px;top:999px;font-size:10px;color:#8a8e96">Bars</div>
<svg class="a" style="left:0;top:970px" width="1920" height="30" viewBox="0 970 1920 30"><path d="M777 985v11.500l-10.500-5.750zM806 985v11.500l-9-5.750zM797 985v11.500l-9-5.750zM820 985v11.500l9-5.750zM829 985v11.500l9-5.750zM846 985v11.500l10-5.750zM883 985v11.500l-9-5.750z" fill="#b6b8bc"/><path d="M872.500 985v11.500" stroke="#b6b8bc" stroke-width="1.500"/><rect x="904" y="981" width="20" height="19" fill="#3cc0e0"/><path d="M943 981v19l16-9.500z" fill="#b6b8bc"/><circle cx="985" cy="991" r="10" fill="#b6b8bc"/><rect x="1011.500" y="982.500" width="29" height="17" rx="8.500" fill="none" stroke="#b6b8bc" stroke-width="2"/><path d="M1021 1000l4-8h5" fill="none" stroke="#b6b8bc" stroke-width="2"/><path d="M1190 983q4-1 6 1.500t7 1.500" fill="none" stroke="#8a8e96" stroke-width="1"/><path d="M1217.500 979v11" stroke="#a01820" stroke-width="1.200"/><path d="M1222 981l8 1v5l-8-1z" fill="#d01c28"/><circle cx="1250" cy="984" r="4.500" fill="#9a9ea6"/><g transform="translate(1262 977) scale(0.8)" fill="none" stroke="#b0b4ba" stroke-linecap="round"><path d="M6.100 2.300A3.300 3.300 0 1 1 2.250 6.100" stroke-width="2.500" stroke-linecap="butt"/><path d="M7.300 7.300L14.300 14.800" stroke-width="2.700"/></g><path d="M1285 990l6-11 6 11z" fill="#8a8e96"/><path d="M1287 990l5-8" stroke="#13151a" stroke-width="1"/></svg>
<div class="t" style="left:1062px;top:979px;font-size:10px;color:#5a7a9a">L</div>
<div class="t" style="left:1062px;top:997px;font-size:10px;color:#5a7a9a">R</div>
<div class="t" style="left:1076px;top:979px;font-size:13px;color:#e2e4e8">00001.01.01.00</div>
<div class="t" style="left:1076px;top:994px;font-size:13px;color:#e2e4e8">00017.01.01.00</div>
<div class="t" style="left:1320px;top:980px;font-size:12.500px;color:#e2e4e8">4 / 4</div>
<div class="t" style="left:1376px;top:980px;font-size:12.500px;color:#e2e4e8">-</div>
<div class="t" style="left:1404px;top:980px;font-size:12.500px;color:#e2e4e8">138.00</div>
<div class="t" style="left:1232px;top:999px;font-size:10px;color:#8a8e96">Metronome</div>
<div class="t" style="left:1316px;top:999px;font-size:10px;color:#8a8e96">Timing</div>
<div class="t" style="left:1369px;top:999px;font-size:10px;color:#8a8e96">Key</div>
<div class="t" style="left:1409px;top:999px;font-size:10px;color:#8a8e96">Tempo</div>
<div class="a" style="left:1461px;top:979px;width:67px;height:4px;background:#3a3e46"></div>
<div class="a" style="left:1461px;top:985px;width:67px;height:4px;background:#3a3e46"></div>
<div class="a" style="left:1461px;top:996px;width:50px;height:4px;background:repeating-linear-gradient(90deg,#6cb0d8 0 1px,#2a3a4a 1px 2px)"></div>
<div class="a" style="left:1511px;top:996px;width:17px;height:4px;background:repeating-linear-gradient(90deg,#5a5e66 0 1px,#2a2e36 1px 2px)"></div>
<div class="a" style="left:1536px;top:996px;width:12px;height:8px;border:2px solid #3cc0e0;border-radius:5px"></div>
<div id="menu" class="a">
<span style="left:7px">File</span>
<span style="left:39px">Edit</span>
<span style="left:72px">Song</span>
<span style="left:114px">Track</span>
<span style="left:156px">Event</span>
<span style="left:199px">Audio</span>
<span style="left:245px">Transport</span>
<span style="left:309px">View</span>
<span style="left:348px">Studio One</span>
<span style="left:421px">Help</span>
</div>
<div id="tb" class="a"></div>
<div class="a" style="left:0;top:60px;width:1920px;height:3px;background:#1c222c"></div>
<div class="a" style="left:0;top:57px;width:1920px;height:3px;background:#525b6a"></div>
<div class="a" style="left:0;top:22px;width:386px;height:35px;background:#1b1e25;clip-path:polygon(0 0,375px 0,386px 35px,0 35px)"></div>
<div class="a" style="left:7px;top:29px;width:14px;height:12px;border:1px solid #9a9da3;color:#9a9da3;font-size:9.500px;line-height:10px;text-align:center;font-weight:bold">A</div>
<svg class="a" style="left:24px;top:27px" width="15" height="15" viewBox="0 0 15 15"><g fill="#c9cbd0"><rect x="3.600" y="3" width="2" height="7" rx="1"/><rect x="6" y="1.400" width="2" height="8" rx="1"/><rect x="8.400" y="2" width="2" height="8" rx="1"/><rect x="10.800" y="4" width="1.900" height="6" rx=".950"/><path d="M3.600 7.500h9.100v2.500c0 2.600-1.800 4-4.300 4-2.200 0-3.400-.800-4.800-3.200l-2.400-3.600c-.500-.900.700-1.700 1.400-.900l1 1.200z"/></g></svg>
<div class="t" style="left:46px;top:29px;font-size:11.500px;letter-spacing:.65px;font-weight:bold;color:#e6e6e8">Mute</div>
<div class="t" style="left:199px;top:29px;font-size:11.500px;letter-spacing:.55px;font-weight:bold;color:#8c8f96">Control</div>
<div class="t" style="left:5px;top:43px;font-size:10.500px;font-weight:bold;color:#ededee">Main Pad</div>
<div class="t" style="left:154px;top:43px;font-size:11px;font-weight:bold;color:#ededee">0</div>
<svg class="a" style="left:162px;top:46px" width="10" height="6"><path d="M0 0h10L5 6z" fill="#d0d2d6"/></svg>
<svg class="a" style="left:362px;top:46px" width="10" height="6"><path d="M0 0h10L5 6z" fill="#d0d2d6"/></svg>
<div class="a" style="left:416px;top:20px;width:32px;height:41px;background:#3c98d6"></div>
<div class="a" style="left:512px;top:58px;width:32px;height:3px;background:#3c98d6"></div>
<div class="a" style="left:681px;top:20px;width:1px;height:39px;background:#4c5460"></div>
<div class="a" style="left:868px;top:20px;width:399px;height:39px;background:#50555f"></div>
<div class="a" style="left:905px;top:41px;width:78px;height:17px;background:#5b606a"></div>
<div class="a" style="left:986px;top:41px;width:80px;height:17px;background:#5b606a"></div>
<div class="a" style="left:1068px;top:41px;width:80px;height:17px;background:#5b606a"></div>
<div class="t" style="left:877px;top:36px;font-size:11.5px;color:#f0f0f0">IQ</div>
<div class="t" style="left:909px;top:25px;font-size:11px;color:#b4b8bf">Quantize</div>
<div class="t" style="left:909px;top:44px;font-size:11px;color:#e8e8ea">1/8</div>
<div class="t" style="left:991px;top:25px;font-size:11px;color:#b4b8bf">Timebase</div>
<div class="t" style="left:991px;top:44px;font-size:11px;color:#e8e8ea">Bars</div>
<div class="t" style="left:1072px;top:25px;font-size:11px;color:#b4b8bf">Snap</div>
<div class="t" style="left:1072px;top:44px;font-size:11px;color:#e8e8ea">Adaptive</div>
<svg class="a" style="left:969px;top:46px" width="9" height="6"><path d="M0 0h9L4.5 6z" fill="#8e929a"/></svg>
<svg class="a" style="left:1052px;top:46px" width="9" height="6"><path d="M0 0h9L4.5 6z" fill="#8e929a"/></svg>
<svg class="a" style="left:1133px;top:46px" width="9" height="6"><path d="M0 0h9L4.5 6z" fill="#8e929a"/></svg>
<div class="a" style="left:1151px;top:20px;width:32px;height:41px;background:#3c98d6"></div>
<div class="a" style="left:1332px;top:20px;width:1px;height:39px;background:#50555f"></div>
<div class="a" style="left:1701px;top:20px;width:1px;height:39px;background:#535862"></div>
<div class="a" style="left:1761px;top:20px;width:1px;height:39px;background:#535862"></div>
<div class="a" style="left:1838px;top:20px;width:1px;height:39px;background:#535862"></div>
<div class="t" style="left:1717px;top:35px;font-size:12.500px;color:#d4d6da">Start</div>
<div class="t" style="left:1777px;top:35px;font-size:12.500px;color:#d4d6da">Song</div>
<div class="t" style="left:1852px;top:35px;font-size:12.500px;color:#d4d6da">Project</div>
<svg class="a" style="left:1824px;top:39px" width="10" height="6"><path d="M0 0h10L5 6z" fill="#d4d6da"/></svg>
<svg class="a" style="left:1318px;top:39px" width="10" height="6"><path d="M0 0h10L5 6z" fill="#b8bcc2"/></svg>
<svg class="a" style="left:0;top:0" width="1920" height="66" viewBox="0 0 1920 66"><path d="M409 30.200h-3.600v20.800h3.600" fill="none" stroke="#f4f4f2" stroke-width="1.400"/><path d="M428 33.500v14.300l3.300-3.100 2.500 5.400 2.400-1.100-2.500-5.300h4.600z" fill="#f4f4f2"/><path d="M446.500 59.500h-6l6-6z" fill="#8cbcdc"/><rect x="457.500" y="33.500" width="11" height="11" fill="none" stroke="#f4f4f2" stroke-width="1.500" stroke-dasharray="2.400 1.300"/><rect x="463.500" y="39.500" width="9.500" height="9.500" fill="none" stroke="#f4f4f2" stroke-width="1.500" stroke-dasharray="2.400 1.300"/><rect x="464" y="40" width="5" height="5" fill="#f4f4f2" opacity=".85"/><path d="M487.300 48.700l4.200-7 8.800-8.700 3.200 3-8.600 8.800z" fill="#f4f4f2"/><path d="M492.500 40.500l3.500 3.500" stroke="#60656c" stroke-width="1"/><path d="M519.500 42.500l11.500-9.500 5.800 2.800v4.700l-11.500 9.500-5.800-2.800z" fill="#f4f4f2"/><path d="M520 42.800l5.300 2.600 11-9M525.300 45.400v4.300" fill="none" stroke="#60656c" stroke-width="1"/><path d="M551.800 50l1.600-4.800 11.800-11.400a2.200 2.200 0 0 1 3.200 3.200l-11.800 11.400z" fill="#f4f4f2"/><path d="M553.800 45.600l3 3" stroke="#60656c" stroke-width=".9"/><path d="M574 56.500h-6l6-6z" fill="#8a9098"/><path d="M582.500 37h4l7.500-5v18l-7.500-5h-4z" fill="#f4f4f2"/><path d="M582.600 33.400l16.600 16.400" stroke="#60656c" stroke-width="3.200"/><path d="M583.200 32.800l17 16.800" stroke="#f4f4f2" stroke-width="1.500"/><path d="M621.300 28.300v23" stroke="#f4f4f2" stroke-width="1.700"/><path d="M623.500 33v15.500l2.500-2v-2l2.500-1v-1.500l3-.5 3-.7v-1.600l-3-.7-3-.5v-1.500l-2.500-1v-2z" fill="#f4f4f2"/><path d="M613 40.800h7.500" stroke="#f4f4f2" stroke-width="2.200"/><circle cx="615.500" cy="41.500" r="2" fill="#f4f4f2"/><path d="M620.500 29l-4.500 2 4.500 2zM623.500 47l4 2-4 2z" fill="#f4f4f2"/><path d="M646.300 37h4.500l7.500-5.500v18.700l-7.500-5.500h-4.500z" fill="#f4f4f2"/><path d="M660 36q2.600 4.800 0 9.600M662.500 33.500q4.200 7.300 0 14.600" fill="none" stroke="#f4f4f2" stroke-width="1.600"/><text x="703.300" y="49" font-family="Liberation Sans,sans-serif" font-size="21" fill="#f4f4f2">?</text><path d="M733.300 30v21.600M740.400 30v21.600" stroke="#f4f4f2" stroke-width="1.500"/><path d="M735 33v15.500l3.500-2.500 2.500-1.500v1l3-1.500v.8l3-1.300 3-1.300v-1.400l-3-1.300-3-1.300v.8l-3-1.500v1l-2.500-1.500z" fill="#f4f4f2"/><path d="M762 35v11.500l3.500-2 2-1v-5.500l-2-1zM777.500 35.500v10.500l3-1.800 2.500-1.200 2.200-1.200v-1.600l-2.200-1.200-2.500-1.200z" fill="#f4f4f2"/><path d="M768.300 30.500v20M775.400 30.500v20" stroke="#f4f4f2" stroke-width="1.500" stroke-dasharray="2.200 1.300"/><path d="M769 40.800h6" stroke="#f4f4f2" stroke-width="1.600"/><circle cx="803.300" cy="40.600" r="6.200" fill="none" stroke="#f4f4f2" stroke-width="1.900"/><path d="M804.500 43.500l6.500 4.300" stroke="#f4f4f2" stroke-width="2.100"/><path d="M827.200 46.200Q830 41.900 834 41.900H841.500Q845.500 41.900 848.300 46.200" fill="none" stroke="#f4f4f2" stroke-width="2.600"/><path d="M831.700 30h7l2.600 2.400v4.400h-9.600z" fill="#f4f4f2"/><path d="M832.500 46.600h8l-3.800 5.600h-4.200z" fill="#f4f4f2"/><rect x="834" y="31" width="2" height="3.500" fill="#60656c"/><rect x="837.200" y="32" width="1.600" height="2.500" fill="#60656c"/><path d="M1160.300 28.300v23.200" stroke="#f4f4f2" stroke-width="1.700"/><rect x="1163" y="37.800" width="13" height="4.800" fill="#f4f4f2"/><rect x="1165" y="39.400" width="9" height="1.600" fill="#2a6a9a"/><rect x="1190" y="35" width="4.600" height="10.600" fill="none" stroke="#f4f4f2" stroke-width="1.200" stroke-dasharray="1.200 1"/><rect x="1198" y="34.500" width="8.300" height="11.300" fill="#f4f4f2"/><path d="M1204 36.800l-4.600 3.400 4.600 3.400z" fill="#30343a"/><path d="M1221.500 37.300h9v-3.300l5.800 6-5.800 6v-3.300h-9z" fill="#f4f4f2"/><path d="M1237.500 28.500v22.500" stroke="#f4f4f2" stroke-width="1.600"/><path d="M1256.500 28.500v22.500" stroke="#f4f4f2" stroke-width="1.600"/><path d="M1254.300 37v5.400l-3.400-2.700zM1258.700 37v5.400l3.400-2.700z" fill="#f4f4f2"/><rect x="1288.8" y="32.0" width="4.400" height="4.900" fill="#f4f4f2" opacity="1"/><rect x="1294.1" y="32.0" width="4.400" height="4.900" fill="#f4f4f2" opacity="1"/><rect x="1299.4" y="32.0" width="4.400" height="4.900" fill="#f4f4f2" opacity=".5"/><rect x="1288.8" y="37.8" width="4.400" height="4.900" fill="#f4f4f2" opacity="1"/><rect x="1294.1" y="37.8" width="4.400" height="4.900" fill="#f4f4f2" opacity="1"/><rect x="1299.4" y="37.8" width="4.400" height="4.900" fill="#f4f4f2" opacity=".5"/><rect x="1288.8" y="43.6" width="4.400" height="4.900" fill="#f4f4f2" opacity="1"/><rect x="1294.1" y="43.6" width="4.400" height="4.900" fill="#f4f4f2" opacity="1"/><rect x="1299.4" y="43.6" width="4.400" height="4.900" fill="#f4f4f2" opacity=".5"/><circle cx="1305.400" cy="40.700" r="4.500" fill="#f4f4f2"/><path d="M1302.800 40.700h5.200M1305.400 38.100v5.200" stroke="#3a3e46" stroke-width="1.200"/><rect x="1351.300" y="32.300" width="15" height="17.200" rx="1" fill="#f4f4f2"/><rect x="1355" y="33.800" width="7.600" height="6" fill="#60656c"/><rect x="1355" y="42" width="7.600" height="6" fill="#60656c"/><path d="M1353.200 33.500v15M1364.400 33.500v15" stroke="#60656c" stroke-width="1.300" stroke-dasharray="1.500 1.500"/></svg>
</body></html>
